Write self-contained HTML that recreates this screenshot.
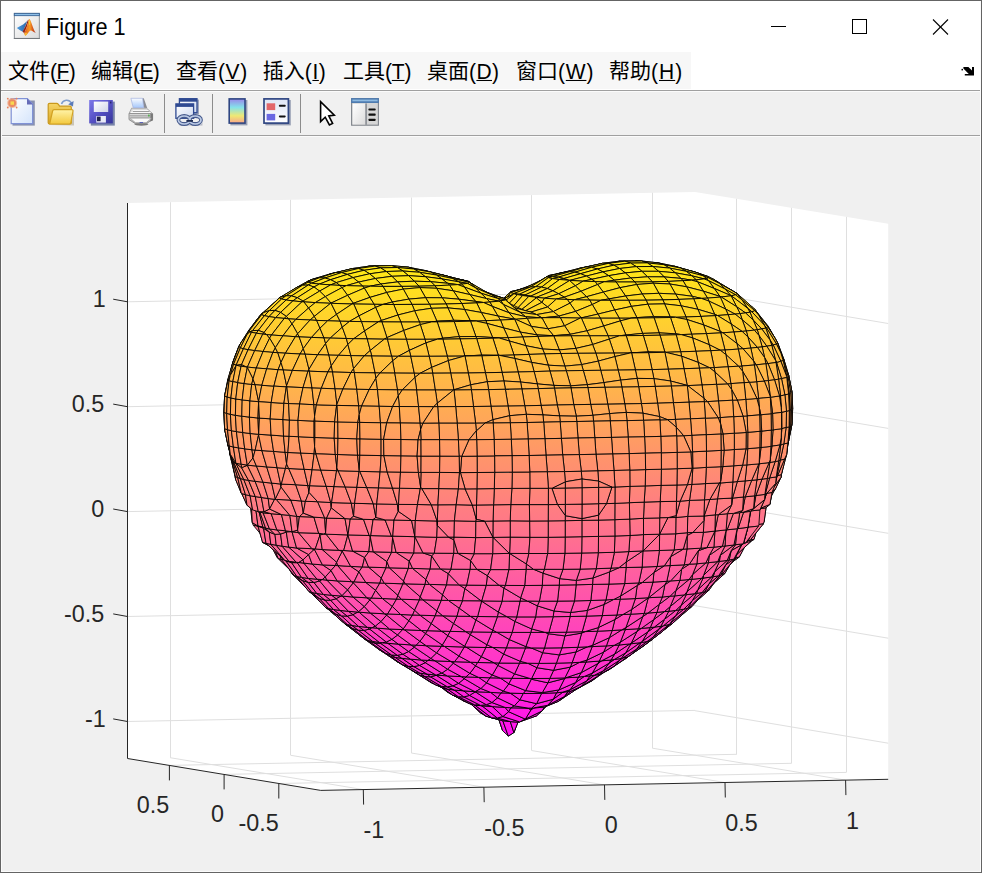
<!DOCTYPE html>
<html lang="zh-CN">
<head>
<meta charset="utf-8">
<title>Figure 1</title>
<style>
html,body{margin:0;padding:0}
body{width:982px;height:873px;overflow:hidden;background:#f0f0f0;position:relative;font-family:"Liberation Sans","Noto Sans CJK SC",sans-serif}
#win{position:absolute;left:0;top:0;width:982px;height:873px;overflow:hidden;background:#f0f0f0}
#titlebar{position:absolute;left:1px;top:1px;width:980px;height:51px;background:#fff}
#title{position:absolute;left:45.1px;top:13.8px;font-size:21.7px;line-height:26px;color:#000;white-space:nowrap;transform:scale(1,1.07);transform-origin:0 21px}
#menubar{position:absolute;left:1px;top:52px;width:980px;height:38px;background:#fff}
#menus{position:absolute;left:0;top:0;width:690px;height:37px;background:#f7f7f7}
#menus span{position:absolute;top:6px;font-size:21px;line-height:26px;color:#000;white-space:nowrap}
#menus i{font-style:normal;display:inline-block;transform:scaleY(1.06);transform-origin:0 20%}#menus u{text-decoration:underline;text-underline-offset:1.4px;text-decoration-thickness:1px}
#mline{position:absolute;left:1px;top:90px;width:979px;height:1px;background:#a0a0a0}
#toolbar{position:absolute;left:1px;top:91px;width:979px;height:44px;background:#f0f0f0}
#tline{position:absolute;left:1px;top:135px;width:979px;height:1px;background:#a0a0a0}
.bd{position:absolute;background:#646464}
.bw{position:absolute;background:#fbfbfb}
.sep{position:absolute;top:5px;width:1px;height:34px;background:#a8a8a8}
</style>
</head>
<body>
<div id="win">
<div id="titlebar">
<svg width="980" height="51" style="position:absolute;left:0;top:0">
<defs>
<linearGradient id="ibg" x1="0" y1="0" x2="1" y2="1"><stop offset="0" stop-color="#fff"/><stop offset="1" stop-color="#dcdcdc"/></linearGradient>
<linearGradient id="mo" x1="0" y1="0" x2="1" y2="0"><stop offset="0" stop-color="#d8481a"/><stop offset="0.3" stop-color="#f0801f"/><stop offset="0.5" stop-color="#f59a28"/><stop offset="0.72" stop-color="#dd5e1c"/><stop offset="1" stop-color="#a82a1c"/></linearGradient>
<linearGradient id="mb" x1="0" y1="0" x2="1" y2="0"><stop offset="0" stop-color="#4a9be0"/><stop offset="1" stop-color="#2c64a4"/></linearGradient>
</defs>
<g transform="translate(-1,-1)">
<rect x="14.35" y="13.4" width="25" height="25" fill="url(#ibg)" stroke="#8e9297" stroke-width="1"/>
<rect x="13.85" y="38" width="26" height="1" fill="#74787c"/>
<rect x="13.85" y="12.9" width="26" height="3.2" fill="#3f6796"/>
<rect x="14.8" y="13.9" width="24.1" height="1.3" fill="#8fc0e8"/>
<path d="M16.8 28.1 L23.5 24.2 L27.2 21 L25.6 25.5 L22.8 31.7 L20 30.2Z" fill="url(#mb)"/>
<path d="M27.6 20.6 C26.6 24.5 24.4 28.4 22.6 31.6 L24.2 33.2 C26.4 29 27.8 24 28.8 19.6 Z" fill="#8e2418"/>
<path d="M29.3 18.9 C28.3 19.3 27.8 26.5 24.1 33 L25.4 35.8 C27.5 34.5 28.8 31 30.5 30.4 C32 30.2 33.5 32 35.7 32.7 C33.2 30 30.9 19.3 29.3 18.9Z" fill="url(#mo)"/>
<ellipse cx="25.7" cy="34" rx="1.2" ry="1.6" fill="#f9c432" opacity=".85" transform="rotate(25 25.7 34)"/>
<ellipse cx="29.6" cy="22.6" rx=".7" ry="2.6" fill="#f8d232" opacity=".85"/>
</g>
<g stroke="#000" stroke-width="1" fill="none" shape-rendering="crispEdges">
<line x1="770" y1="25.5" x2="785" y2="25.5"/>
<rect x="851.5" y="18.5" width="14" height="14"/>
</g>
<g stroke="#000" stroke-width="1.1" fill="none">
<line x1="932" y1="18.5" x2="947" y2="33.5"/><line x1="947" y1="18.5" x2="932" y2="33.5"/>
</g>
</svg>
<div id="title">Figure 1</div>
</div>
<div id="menubar">
<div id="menus">
<span style="left:7px">文件<i style="letter-spacing:-0.5px">(<u>F</u>)</i></span>
<span style="left:90px">编辑<i style="letter-spacing:-0.6px">(<u>E</u>)</i></span>
<span style="left:175px">查看<i style="letter-spacing:0.6px">(<u>V</u>)</i></span>
<span style="left:261.8px">插入<i style="letter-spacing:0.6px">(<u>I</u>)</i></span>
<span style="left:342px">工具<i style="letter-spacing:-0.15px">(<u>T</u>)</i></span>
<span style="left:426px">桌面<i style="letter-spacing:0.4px">(<u>D</u>)</i></span>
<span style="left:515px">窗口<i style="letter-spacing:0.8px">(<u>W</u>)</i></span>
<span style="left:608px">帮助<i style="letter-spacing:1.0px">(<u>H</u>)</i></span>
</div>
<svg width="20" height="16" viewBox="958 62 20 16" style="position:absolute;left:957px;top:10px"><path d="M963.4 66.9 H968.4 L972 70.4 V66.9 H974 V75.6 H964.8 V73.9 H968.8 L963.4 68.6 Z" fill="#000"/><rect x="961.5" y="68.9" width="1.5" height="1.5" fill="#000"/></svg>
</div>
<div id="mline"></div>
<div id="toolbar">
<svg width="979" height="44" viewBox="1 91 979 44" style="position:absolute;left:0;top:0">
<defs>
<linearGradient id="pg" x1="0" y1="0" x2="1" y2="1"><stop offset="0" stop-color="#fff"/><stop offset="1" stop-color="#d4e4fb"/></linearGradient>
<linearGradient id="fo" x1="0" y1="0" x2="0" y2="1"><stop offset="0" stop-color="#fff3a8"/><stop offset="1" stop-color="#f3c93e"/></linearGradient>
<linearGradient id="fb" x1="0" y1="0" x2="0" y2="1"><stop offset="0" stop-color="#f6d567"/><stop offset="1" stop-color="#d9a520"/></linearGradient>
<linearGradient id="sv" x1="0" y1="0" x2="1" y2="1"><stop offset="0" stop-color="#7d78ea"/><stop offset="0.5" stop-color="#5550c4"/><stop offset="1" stop-color="#35359a"/></linearGradient>
<linearGradient id="svl" x1="0" y1="0" x2="1" y2="1"><stop offset="0" stop-color="#fff"/><stop offset="1" stop-color="#d0d4e8"/></linearGradient>
<linearGradient id="pp" x1="0" y1="0" x2="0" y2="1"><stop offset="0" stop-color="#fafcff"/><stop offset="1" stop-color="#a6c8fa"/></linearGradient>
<linearGradient id="pr" x1="0" y1="0" x2="0" y2="1"><stop offset="0" stop-color="#e4e4e4"/><stop offset="1" stop-color="#a8a8a8"/></linearGradient>
<linearGradient id="cb" x1="0" y1="0" x2="0" y2="1"><stop offset="0" stop-color="#9a86ea"/><stop offset="0.35" stop-color="#84e2ea"/><stop offset="0.7" stop-color="#efe973"/><stop offset="1" stop-color="#f9a58a"/></linearGradient>
<linearGradient id="wn" x1="0" y1="0" x2="1" y2="1"><stop offset="0" stop-color="#fff"/><stop offset="1" stop-color="#cfdaf0"/></linearGradient>
<linearGradient id="lg" x1="0" y1="0" x2="0" y2="1"><stop offset="0" stop-color="#dfe6f5"/><stop offset="1" stop-color="#fff"/></linearGradient>
<linearGradient id="pil" x1="0" y1="0" x2="1" y2="1"><stop offset="0" stop-color="#fff"/><stop offset="1" stop-color="#dcdcdc"/></linearGradient>
<linearGradient id="ch" x1="0" y1="0" x2="0" y2="1"><stop offset="0" stop-color="#e4ecfa"/><stop offset="1" stop-color="#8fa6d2"/></linearGradient>
</defs>
<!-- new file -->
<path d="M12.5 100.5 H34.8 V125.6 H12.5Z" fill="#7d86a6" opacity=".9"/>
<path d="M11.2 98.6 H27.3 L32.6 104 V123.6 H11.2Z" fill="url(#pg)" stroke="#8092d6" stroke-width="1.2"/>
<path d="M27 98.4 L33 104.4 H27Z" fill="#666cb8"/>
<circle cx="12.2" cy="103.1" r="5" fill="#f0a888" opacity=".75"/><circle cx="12.2" cy="103.1" r="3.9" fill="#ea8a60"/><rect x="10.5" y="101.4" width="3.5" height="3.4" fill="#f8d850"/>
<g fill="#e7825c"><circle cx="7.8" cy="98.7" r=".9"/><circle cx="16.6" cy="98.7" r=".9"/><circle cx="7.8" cy="107.5" r=".9"/><circle cx="16.6" cy="107.5" r=".9"/></g>
<!-- open -->
<path d="M61.5 104 C63 99.5 69 98.7 71.6 103.2" fill="none" stroke="#7f9ccc" stroke-width="1.5"/>
<path d="M73.6 101 L73 106.6 L68.2 104.2Z" fill="#5a7ab8"/>
<path d="M49.5 125 L74 125.6 L74 111 L71 123.5Z" fill="#b0a890" opacity=".6"/>
<path d="M48.2 104.6 Q48.2 103.3 49.6 103.3 H56.6 Q57.6 103.3 58.2 104.2 L59.6 106.2 H70 Q71.3 106.2 71.3 107.5 V122.8 Q71.3 124 70 124 H49.6 Q48.2 124 48.2 122.8Z" fill="url(#fb)" stroke="#c9981c" stroke-width="1.2"/>
<path d="M52.6 111 Q52.9 109.7 54.2 109.7 H71.8 Q73.3 109.7 73 111.2 L70.9 122.6 Q70.6 124 69.2 124 H49.6 Z" fill="url(#fo)" stroke="#d2a223" stroke-width="1.2"/>
<!-- save -->
<rect x="90.8" y="101.6" width="24" height="24" fill="#6a78a0" opacity=".9"/>
<rect x="89.2" y="100" width="23.6" height="23.4" fill="url(#sv)"/>
<rect x="93.8" y="101.6" width="14.4" height="10.4" fill="url(#svl)"/>
<rect x="96.3" y="116" width="9.6" height="6.6" fill="#e8eaf6"/><rect x="97" y="116.6" width="3.6" height="4.6" fill="#20204a"/>
<rect x="110" y="101.6" width="1.4" height="1.8" fill="#28286e"/>
<!-- print -->
<ellipse cx="141.4" cy="124.3" rx="7" ry="1.5" fill="#5c5c5c" opacity=".8"/>
<path d="M131.6 108.2 H146.6 L152.6 113.6 H129Z" fill="#dadada" stroke="#9a9a9a" stroke-width=".8"/>
<path d="M129 113.6 H152.6 V119.6 L146.4 123.6 H135.2 L129 119.6Z" fill="url(#pr)" stroke="#8a8a8a" stroke-width=".9"/>
<path d="M150.3 113.8 L152.9 114 V120.6 L150.3 121.6Z" fill="#787878"/>
<path d="M130.2 118.2 H151.4 L146.2 122.6 H135.4Z" fill="#fafafa" stroke="#9c9c9c" stroke-width=".6"/>
<path d="M132.6 110.6 H148.4 M131 112.4 H150.6" stroke="#fff" stroke-width=".9"/>
<path d="M133 111.5 H149.4" stroke="#8c8c8c" stroke-width=".8"/>
<path d="M129.6 115.6 H150 M130.4 117.2 H150" stroke="#9a9a9a" stroke-width=".7"/>
<path d="M142 98.2 H143.8 L147.2 107.9 L143.8 107.7Z" fill="#8a8c94"/>
<path d="M130.9 98.3 H142.6 L143.7 107.7 H133.2Z" fill="url(#pp)" stroke="#a4b2e0" stroke-width=".7"/>
<rect x="148" y="114.6" width="1.7" height="1.9" fill="#58b050"/>
<rect x="139.6" y="122" width="3.4" height="1" fill="#5a62b8"/>
<!-- separators -->
<rect x="164" y="94" width="1" height="39" fill="#8c8c8c"/>
<rect x="212" y="94" width="1" height="39" fill="#8c8c8c"/>
<rect x="300" y="94" width="1" height="39" fill="#8c8c8c"/>
<!-- link -->
<rect x="180.4" y="99.6" width="18.6" height="14.6" fill="#7a86a4" opacity=".7"/>
<rect x="179.4" y="98.7" width="17.6" height="14" fill="url(#wn)" stroke="#2f4a92" stroke-width="1.3"/>
<rect x="179.4" y="98.7" width="17.6" height="3" fill="#2f4a92"/>
<rect x="175.9" y="103.9" width="17.7" height="14.4" fill="url(#wn)" stroke="#2f4a92" stroke-width="1.3"/>
<rect x="175.9" y="103.9" width="17.7" height="3" fill="#2f4a92"/>
<path d="M178.4 124.8 H201 L202.4 122 V125.6 H180Z" fill="#8890a4" opacity=".6"/>
<ellipse cx="184.2" cy="120" rx="5.8" ry="4" fill="none" stroke="#465a8c" stroke-width="3.8"/>
<ellipse cx="195.2" cy="120" rx="5.8" ry="4" fill="none" stroke="#465a8c" stroke-width="3.8"/>
<ellipse cx="184.2" cy="120" rx="5.8" ry="4" fill="none" stroke="#bccbe6" stroke-width="1.7"/>
<ellipse cx="195.2" cy="120" rx="5.8" ry="4" fill="none" stroke="#bccbe6" stroke-width="1.7"/>
<path d="M186.4 120.9 H193" stroke="#1d2b52" stroke-width="1.8"/>
<!-- colorbar -->
<rect x="230.4" y="100" width="17" height="25.4" fill="#7c86a0" opacity=".75"/>
<rect x="229.2" y="98.9" width="15.8" height="24.2" fill="url(#cb)" stroke="#2f4682" stroke-width="1.6"/>
<!-- legend -->
<rect x="265.4" y="100" width="25.4" height="25.4" fill="#7c86a0" opacity=".75"/>
<rect x="264" y="98.9" width="24.4" height="24.2" fill="url(#lg)" stroke="#2f4682" stroke-width="1.7"/>
<rect x="266.6" y="103.3" width="8.6" height="6.8" fill="#e2666a"/>
<rect x="266.6" y="113.9" width="8.6" height="6.5" fill="#6a68e2"/>
<rect x="278.9" y="104.7" width="6.8" height="2" rx=".8" fill="#111"/>
<rect x="278.9" y="115.4" width="6.8" height="2" rx=".8" fill="#111"/>
<!-- pointer -->
<path d="M320.6 101.6 V121.6 L325.2 117.2 L329.4 124.9 L332.6 123.4 L328.8 115.9 L334.3 115.1Z" fill="#fff" stroke="#000" stroke-width="1.6" stroke-linejoin="miter"/>
<!-- property inspector -->
<rect x="351.6" y="98.6" width="26.8" height="26.6" fill="#d6d6d6" stroke="#80858c" stroke-width="1.1"/>
<rect x="351.1" y="98.1" width="27.8" height="4.9" fill="#4f7cb0"/>
<rect x="352.4" y="99.6" width="25.2" height="1.7" fill="#8fbbe2"/>
<rect x="352.7" y="103.8" width="12.6" height="20.6" fill="url(#pil)"/>
<rect x="365.3" y="103.4" width="1.6" height="21.4" fill="#8a8e94"/>
<rect x="368.4" y="108.4" width="7.3" height="2.1" rx=".8" fill="#111"/>
<rect x="368.4" y="113.6" width="7.3" height="2.1" rx=".8" fill="#111"/>
<rect x="368.4" y="118.8" width="7.3" height="2.1" rx=".8" fill="#111"/>
</svg>
</div>
<div id="tline"></div>
<svg id="plot" width="982" height="737" viewBox="0 136 982 737" style="position:absolute;left:0;top:136px">
<defs><linearGradient id="g15" gradientUnits="userSpaceOnUse" x1="0" y1="760.4" x2="0" y2="204.9"><stop offset="0" stop-color="#f0f"/><stop offset="1" stop-color="#ff0"/></linearGradient><linearGradient id="g14" gradientUnits="userSpaceOnUse" x1="0" y1="762.4" x2="0" y2="206.9"><stop offset="0" stop-color="#f0f"/><stop offset="1" stop-color="#ff0"/></linearGradient><linearGradient id="g13" gradientUnits="userSpaceOnUse" x1="0" y1="764.4" x2="0" y2="208.9"><stop offset="0" stop-color="#f0f"/><stop offset="1" stop-color="#ff0"/></linearGradient><linearGradient id="g12" gradientUnits="userSpaceOnUse" x1="0" y1="766.4" x2="0" y2="210.9"><stop offset="0" stop-color="#f0f"/><stop offset="1" stop-color="#ff0"/></linearGradient><linearGradient id="g11" gradientUnits="userSpaceOnUse" x1="0" y1="768.4" x2="0" y2="212.9"><stop offset="0" stop-color="#f0f"/><stop offset="1" stop-color="#ff0"/></linearGradient><linearGradient id="g10" gradientUnits="userSpaceOnUse" x1="0" y1="770.4" x2="0" y2="214.9"><stop offset="0" stop-color="#f0f"/><stop offset="1" stop-color="#ff0"/></linearGradient><linearGradient id="g9" gradientUnits="userSpaceOnUse" x1="0" y1="772.4" x2="0" y2="216.9"><stop offset="0" stop-color="#f0f"/><stop offset="1" stop-color="#ff0"/></linearGradient><linearGradient id="g8" gradientUnits="userSpaceOnUse" x1="0" y1="774.4" x2="0" y2="218.9"><stop offset="0" stop-color="#f0f"/><stop offset="1" stop-color="#ff0"/></linearGradient><linearGradient id="g7" gradientUnits="userSpaceOnUse" x1="0" y1="776.4" x2="0" y2="220.9"><stop offset="0" stop-color="#f0f"/><stop offset="1" stop-color="#ff0"/></linearGradient><linearGradient id="g6" gradientUnits="userSpaceOnUse" x1="0" y1="778.4" x2="0" y2="222.9"><stop offset="0" stop-color="#f0f"/><stop offset="1" stop-color="#ff0"/></linearGradient><linearGradient id="g5" gradientUnits="userSpaceOnUse" x1="0" y1="780.4" x2="0" y2="224.9"><stop offset="0" stop-color="#f0f"/><stop offset="1" stop-color="#ff0"/></linearGradient><linearGradient id="g4" gradientUnits="userSpaceOnUse" x1="0" y1="782.4" x2="0" y2="226.9"><stop offset="0" stop-color="#f0f"/><stop offset="1" stop-color="#ff0"/></linearGradient></defs>
<style>.b15{fill:url(#g15)}.b14{fill:url(#g14)}.b13{fill:url(#g13)}.b12{fill:url(#g12)}.b11{fill:url(#g11)}.b10{fill:url(#g10)}.b9{fill:url(#g9)}.b8{fill:url(#g8)}.b7{fill:url(#g7)}.b6{fill:url(#g6)}.b5{fill:url(#g5)}.b4{fill:url(#g4)}#surf path{stroke:#000;stroke-width:0.88;stroke-linejoin:round}#lbl text{font:23.33px "Liberation Sans",sans-serif;fill:#262626}</style>
<g id="back" shape-rendering="auto"><polygon points="127.5,203 695,191.9 888.2,223.8 888.2,779.3 320.7,790.4 127.5,758.5" fill="#fff"/><g><line x1="170.5" y1="757.7" x2="170.5" y2="202.2" stroke="#dfdfdf" stroke-width="1"/><line x1="363.3" y1="789.6" x2="170.1" y2="757.7" stroke="#dfdfdf" stroke-width="1"/><line x1="290.5" y1="755.3" x2="290.5" y2="199.8" stroke="#dfdfdf" stroke-width="1"/><line x1="483.9" y1="787.2" x2="290.7" y2="755.3" stroke="#dfdfdf" stroke-width="1"/><line x1="411.5" y1="753" x2="411.5" y2="197.5" stroke="#dfdfdf" stroke-width="1"/><line x1="604.5" y1="784.9" x2="411.3" y2="753" stroke="#dfdfdf" stroke-width="1"/><line x1="531.5" y1="750.6" x2="531.5" y2="195.1" stroke="#dfdfdf" stroke-width="1"/><line x1="725" y1="782.5" x2="531.8" y2="750.6" stroke="#dfdfdf" stroke-width="1"/><line x1="652.5" y1="748.2" x2="652.5" y2="192.7" stroke="#dfdfdf" stroke-width="1"/><line x1="845.6" y1="780.1" x2="652.4" y2="748.2" stroke="#dfdfdf" stroke-width="1"/><line x1="846.5" y1="772.4" x2="846.5" y2="216.9" stroke="#dfdfdf" stroke-width="1"/><line x1="278.8" y1="783.5" x2="846.3" y2="772.4" stroke="#dfdfdf" stroke-width="1"/><line x1="791.5" y1="763.3" x2="791.5" y2="207.8" stroke="#dfdfdf" stroke-width="1"/><line x1="224.1" y1="774.4" x2="791.6" y2="763.3" stroke="#dfdfdf" stroke-width="1"/><line x1="736.5" y1="754.3" x2="736.5" y2="198.8" stroke="#dfdfdf" stroke-width="1"/><line x1="169.4" y1="765.4" x2="736.9" y2="754.3" stroke="#dfdfdf" stroke-width="1"/><line x1="127.5" y1="721.5" x2="695" y2="710.4" stroke="#dfdfdf" stroke-width="1"/><line x1="888.2" y1="743.2" x2="695" y2="710.7" stroke="#dfdfdf" stroke-width="1"/><line x1="127.5" y1="616.5" x2="695" y2="605.4" stroke="#dfdfdf" stroke-width="1"/><line x1="888.2" y1="638.2" x2="695" y2="605.7" stroke="#dfdfdf" stroke-width="1"/><line x1="127.5" y1="511.6" x2="695" y2="500.5" stroke="#dfdfdf" stroke-width="1"/><line x1="888.2" y1="533.3" x2="695" y2="500.8" stroke="#dfdfdf" stroke-width="1"/><line x1="127.5" y1="406.7" x2="695" y2="395.6" stroke="#dfdfdf" stroke-width="1"/><line x1="888.2" y1="428.4" x2="695" y2="395.9" stroke="#dfdfdf" stroke-width="1"/><line x1="127.5" y1="301.8" x2="695" y2="290.7" stroke="#dfdfdf" stroke-width="1"/><line x1="888.2" y1="323.5" x2="695" y2="291" stroke="#dfdfdf" stroke-width="1"/></g></g>
<g id="surf">
<path class="b15" d="M702.3 533.6L701.2 532.9L704.6 533Z"/>
<path class="b14" d="M309.7 534.2L315.6 533.6L318.3 537Z"/>
<path class="b14" d="M516.1 304.2L501.8 304.9L501.9 304.8L518.6 301Z"/>
<path class="b14" d="M479.6 319.3L462.9 320.7L468.6 315.6L485.3 312.6Z"/>
<path class="b14" d="M501.9 304.8L501.8 304.9L500.9 305Z"/>
<path class="b14" d="M554.6 288.1L539.8 288.7L540.9 287.6L557.6 284.8Z"/>
<path class="b14" d="M518.6 301L501.9 304.8L507.6 300.1L524.3 293.2Z"/>
<path class="b14" d="M540.9 287.6L539.8 288.7L532.9 289.1Z"/>
<path class="b14" d="M485.3 312.6L489.4 305.9L500.9 305Z"/>
<path class="b14" d="M646.3 272.7L633.5 272.5L635.6 270.8Z"/>
<path class="b14" d="M633.5 272.5L614.8 272.5L618.9 269.4L635.6 270.8Z"/>
<path class="b14" d="M500.9 305L489.4 305.9L490.9 304.8L507.6 300.1L501.9 304.8Z"/>
<path class="b14" d="M557.6 284.8L540.9 287.6L546.6 282.7L563.3 278.3Z"/>
<path class="b14" d="M524.3 293.2L526.7 289.6L532.9 289.1Z"/>
<path class="b14" d="M614.8 272.5L597.4 272.7L602.3 269.3L618.9 269.4Z"/>
<path class="b14" d="M653.6 272.8L646.3 272.7L635.6 270.8L641.3 267.2L657.9 270.1Z"/>
<path class="b14" d="M532.9 289.1L526.7 289.6L529.9 287.4L546.6 282.7L540.9 287.6Z"/>
<path class="b14" d="M670.1 273.3L653.6 272.8L657.9 270.1Z"/>
<path class="b14" d="M579.9 275.1L563.3 278.3L567 273.8L581.5 273.1Z"/>
<path class="b13" d="M719.2 552.7L717.8 551.9L720.4 552.2Z"/>
<path class="b14" d="M597.4 272.7L581.5 273.1L585.6 270.4L602.3 269.3Z"/>
<path class="b14" d="M490.9 304.8L489.4 305.9L475.9 306.5Z"/>
<path class="b13" d="M753.4 503.6L745.4 502.7L752.6 500.4L758.2 502.2Z"/>
<path class="b14" d="M517.5 290.4L526.7 289.6L524.3 293.2L507.6 300.1L513.3 293.8Z"/>
<path class="b14" d="M635.6 270.8L618.9 269.4L624.6 265.7L641.3 267.2Z"/>
<path class="b13" d="M402.4 651L405.5 650.5L407.6 654.6Z"/>
<path class="b14" d="M735.9 301.8L730.2 303.8L714.6 289.8L723.6 290.7Z"/>
<path class="b14" d="M529.9 287.4L526.7 289.6L517.5 290.4Z"/>
<path class="b14" d="M581.5 273.1L567 273.8L568.9 272.6L585.6 270.4Z"/>
<path class="b14" d="M507.6 300.1L490.9 304.8L496.6 302.2L513.3 293.8Z"/>
<path class="b14" d="M676.5 273.5L670.1 273.3L657.9 270.1L663.6 267.6L680.3 272Z"/>
<path class="b14" d="M474.3 307.2L474.8 306.6L475.9 306.5Z"/>
<path class="b13" d="M283.2 503L276.8 503.7L274 500.5Z"/>
<path class="b13" d="M724.9 554.4L719.2 552.7L720.4 552.2L727.6 553.1Z"/>
<path class="b14" d="M456 306.6L436.3 306.2L435.3 306L440.9 301.4L457.6 305.4Z"/>
<path class="b14" d="M618.9 269.4L602.3 269.3L607.9 265.7L624.6 265.7Z"/>
<path class="b14" d="M723.6 290.7L714.6 289.8L713.6 289.1L719.2 287.7Z"/>
<path class="b14" d="M558.8 274.3L567 273.8L563.3 278.3L546.6 282.7L552.3 277Z"/>
<path class="b14" d="M685.9 274L676.5 273.5L680.3 272Z"/>
<path class="b13" d="M472.7 306.5L456 306.6L457.6 305.4Z"/>
<path class="b13" d="M413.3 663.9L407.6 654.6L424.3 663.7L426.5 667.3L422.1 668Z"/>
<path class="b13" d="M453.7 683.7L448.7 684.2L446.6 681.7Z"/>
<path class="b13" d="M475.9 306.5L474.8 306.6L479.9 305.2L496.6 302.2L490.9 304.8Z"/>
<path class="b13" d="M708.2 574.9L702.6 573.1L708.3 568.7L714.9 569.6Z"/>
<path class="b13" d="M760.2 323.7L753.7 322.8L752.6 321.2L758.2 320.9Z"/>
<path class="b13" d="M713.6 289.1L696.9 279.8L702.6 277.6L719.2 287.7Z"/>
<path class="b13" d="M568.9 272.6L567 273.8L558.8 274.3Z"/>
<path class="b13" d="M546.6 282.7L529.9 287.4L535.6 283.8L552.3 277Z"/>
<path class="b13" d="M657.9 270.1L641.3 267.2L646.9 264.4L663.6 267.6Z"/>
<path class="b13" d="M602.3 269.3L585.6 270.4L591.3 267.3L607.9 265.7Z"/>
<path class="b13" d="M422.1 668L426.5 667.3L429.9 673.4Z"/>
<path class="b13" d="M758.2 320.9L752.6 321.2L740.8 306.7L747.5 307.6Z"/>
<path class="b13" d="M463.3 690.4L468.9 698.4L452.3 690.3L448.7 684.2L453.7 683.7Z"/>
<path class="b13" d="M513.3 293.8L515.7 290.9L517.5 290.4Z"/>
<path class="b13" d="M772.8 471.6L768 470.6L774.9 457.6L780.6 455.3Z"/>
<path class="b13" d="M785.2 422.3L780.2 421.4L781.1 405L786.1 406Z"/>
<path class="b13" d="M402.4 651L395.4 651.9L391 644.8Z"/>
<path class="b13" d="M691.6 593.2L685.9 591.5L693.3 585.3L699.8 586.3Z"/>
<path class="b13" d="M474.8 306.6L472.7 306.5L457.6 305.4L463.3 302.8L479.9 305.2Z"/>
<path class="b13" d="M786.1 406L781.1 405L780.7 388.7L785.7 389.6Z"/>
<path class="b13" d="M766.5 488L761.2 487.1L768 470.6L772.8 471.6Z"/>
<path class="b13" d="M702.6 277.6L696.9 279.8L685.9 274L697.2 274.8Z"/>
<path class="b13" d="M774.9 354.5L779.8 356.9L775.5 356.1Z"/>
<path class="b13" d="M785.7 389.6L780.7 388.7L778.8 372.4L783.8 373.3Z"/>
<path class="b13" d="M756.7 504.6L753.4 503.6L758.2 502.2L763.9 502.3Z"/>
<path class="b13" d="M747.5 307.6L740.8 306.7L735.9 301.8L741.6 301.6Z"/>
<path class="b13" d="M407.6 654.6L413.3 663.9L396.6 653.8L395.4 651.9L402.4 651Z"/>
<path class="b13" d="M517.5 290.4L515.7 290.9L518.9 289.7L535.6 283.8L529.9 287.4Z"/>
<path class="b13" d="M750.9 521L747 520L753.4 503.6L756.7 504.6Z"/>
<path class="b13" d="M641.3 267.2L624.6 265.7L630.3 262.7L646.9 264.4Z"/>
<path class="b13" d="M585.6 270.4L568.9 272.6L574.6 270.1L591.3 267.3Z"/>
<path class="b13" d="M376.4 635.1L375.1 635.3L374.3 633.8Z"/>
<path class="b13" d="M697.2 274.8L685.9 274L680.3 272L685.9 270.9Z"/>
<path class="b13" d="M747.2 525.2L741.6 525.6L747 520L750.9 521Z"/>
<path class="b13" d="M674.9 609.7L669.3 607.9L676.5 602L683 602.9Z"/>
<path class="b12" d="M435.6 681L429.9 673.4L446.6 681.7L448.7 684.2L445.4 684.9Z"/>
<path class="b13" d="M552.3 277L554.6 274.8L558.8 274.3Z"/>
<path class="b13" d="M341 609.4L337.4 602.5L340.7 602.1L352 610.4L355.7 618.8L353.3 619.2Z"/>
<path class="b13" d="M783.8 373.3L778.8 372.4L775.5 356.1L779.8 356.9L780.6 357.6Z"/>
<path class="b12" d="M482.9 700.5L472.1 701.3L468.9 698.4Z"/>
<path class="b13" d="M741.6 301.6L735.9 301.8L723.6 290.7L730.4 291.6Z"/>
<path class="b13" d="M731.8 554L727.6 553.1L740.3 536.5L745.7 537.4Z"/>
<path class="b13" d="M780.6 455.1L780.7 455.1L780.6 455.3Z"/>
<path class="b13" d="M664.5 619.6L657.9 618.7L669.3 607.9L674.9 609.7Z"/>
<path class="b13" d="M780.4 357.1L779.8 356.9L774.9 354.5L768.4 339.9L773.2 340.9Z"/>
<path class="b13" d="M510.9 291.6L515.7 290.9L513.3 293.8L496.6 302.2L502.3 299.5Z"/>
<path class="b12" d="M445.4 684.9L448.7 684.2L452.3 690.3Z"/>
<path class="b12" d="M380 643.5L375.1 635.3L376.4 635.1L391 644.8L395.4 651.9L394.3 652.2Z"/>
<path class="b12" d="M353.3 619.2L355.7 618.8L357.6 622.2Z"/>
<path class="b13" d="M680.3 272L663.6 267.6L669.3 266.2L685.9 270.9Z"/>
<path class="b13" d="M730.6 554.6L724.9 554.4L727.6 553.1L731.8 554Z"/>
<path class="b13" d="M558.8 274.3L554.6 274.8L557.9 273.6L574.6 270.1L568.9 272.6Z"/>
<path class="b13" d="M730.4 291.6L723.6 290.7L719.2 287.7L724.9 287.8Z"/>
<path class="b12" d="M422.1 668L417.2 668.8L413.3 663.9Z"/>
<path class="b13" d="M624.6 265.7L607.9 265.7L613.6 262.8L630.3 262.7Z"/>
<path class="b12" d="M658.3 624.5L652.6 622.9L657.9 618.7L664.5 619.6Z"/>
<path class="b13" d="M719.7 570.6L714.9 569.6L724.9 554.4L730.6 554.6Z"/>
<path class="b13" d="M773.2 340.9L768.4 339.9L760.2 323.7L765 324.7Z"/>
<path class="b12" d="M324.3 595.1L320 586.4L321.9 586.1L335.3 597.1L337.4 602.5L332.7 603.3Z"/>
<path class="b13" d="M518.9 289.7L515.7 290.9L510.9 291.6Z"/>
<path class="b12" d="M394.3 652.2L395.4 651.9L396.6 653.8Z"/>
<path class="b12" d="M429.9 673.4L435.6 681L418.9 671.2L417.2 668.8L422.1 668Z"/>
<path class="b13" d="M713.9 574.9L708.2 574.9L714.9 569.6L719.7 570.6Z"/>
<path class="b13" d="M780.6 357.6L779.8 356.9L780.4 357.1Z"/>
<path class="b13" d="M765 324.7L760.2 323.7L758.2 320.9L763.9 323.1Z"/>
<path class="b12" d="M643.9 636.3L637.2 635.4L652.6 622.9L658.3 624.5Z"/>
<path class="b13" d="M719.2 287.7L702.6 277.6L708.2 277.5L724.9 287.8Z"/>
<path class="b13" d="M496.6 302.2L479.9 305.2L485.6 304.6L502.3 299.5Z"/>
<path class="b12" d="M363.3 631.9L357.6 622.2L374.3 633.8L375.1 635.3L369.6 636.3Z"/>
<path class="b13" d="M783.2 438.7L787.2 439.7L786.2 447.9L780.7 455.1L780.6 455.1Z"/>
<path class="b12" d="M332.7 603.3L337.4 602.5L341 609.4Z"/>
<path class="b13" d="M549.1 275.5L554.6 274.8L552.3 277L535.6 283.8L541.3 280.1Z"/>
<path class="b12" d="M704.6 587.2L699.8 586.3L708.2 574.9L713.9 574.9Z"/>
<path class="b13" d="M663.6 267.6L646.9 264.4L652.6 262.8L669.3 266.2Z"/>
<path class="b13" d="M776.2 472.6L772.8 471.6L780.6 455.3L780.7 455.1L782.8 456.1Z"/>
<path class="b12" d="M272.9 504.3L266.3 505L263 501.2Z"/>
<path class="b13" d="M607.9 265.7L591.3 267.3L596.9 264.7L613.6 262.8Z"/>
<path class="b12" d="M641.6 638.1L635.9 636.4L637.2 635.4L643.9 636.3Z"/>
<path class="b12" d="M457.9 696.8L452.3 690.3L468.9 698.4L472.1 701.3L471.1 701.8Z"/>
<path class="b13" d="M763.9 323.1L758.2 320.9L747.5 307.6L752.2 308.6Z"/>
<path class="b13" d="M787.2 439.7L783.2 438.7L785.2 422.3L789 423.3Z"/>
<path class="b12" d="M369.6 636.3L375.1 635.3L380 643.5Z"/>
<path class="b13" d="M789 423.3L785.2 422.3L786.1 406L789.8 406.9Z"/>
<path class="b12" d="M697.2 593.3L691.6 593.2L699.8 586.3L704.6 587.2Z"/>
<path class="b13" d="M708.2 277.5L702.6 277.6L697.2 274.8L704.9 275.7Z"/>
<path class="b12" d="M307.6 579L303.4 570.3L305 570.1L318.6 582.2L320 586.4L314.4 587.3Z"/>
<path class="b13" d="M789.8 406.9L786.1 406L785.7 389.6L789.3 390.6Z"/>
<path class="b13" d="M771 489L766.5 488L772.8 471.6L776.2 472.6Z"/>
<path class="b12" d="M641.6 638.1L624.9 650.6L619.3 649L635.9 636.4Z"/>
<path class="b13" d="M557.9 273.6L554.6 274.8L549.1 275.5Z"/>
<path class="b13" d="M769.6 499.5L763.9 502.3L766.5 488L771 489Z"/>
<path class="b12" d="M402.3 661.7L396.6 653.8L413.3 663.9L417.2 668.8L416.1 669.1Z"/>
<path class="b12" d="M273.3 538L281 537L285.3 544.3Z"/>
<path class="b12" d="M471.1 701.8L472.1 701.3L474.6 706.1Z"/>
<path class="b13" d="M782.8 456.1L780.7 455.1L786.2 447.9Z"/>
<path class="b12" d="M731.8 554L732.1 554.3L730.6 554.6Z"/>
<path class="b13" d="M479.9 305.2L463.3 302.8L468.9 300.2L485.6 304.6Z"/>
<path class="b13" d="M752.2 308.6L747.5 307.6L741.6 301.6L747.2 303.6Z"/>
<path class="b13" d="M789.3 390.6L785.7 389.6L783.8 373.3L787.5 374.3Z"/>
<path class="b12" d="M687.8 603.9L683 602.9L691.6 593.2L697.2 593.3Z"/>
<path class="b12" d="M757.7 505.6L756.7 504.6L763.9 502.3L769.6 499.5Z"/>
<path class="b13" d="M535.6 283.8L518.9 289.7L524.6 288.2L541.3 280.1Z"/>
<path class="b12" d="M347.8 620.4L353.3 619.2L357.6 622.2L363.3 631.9Z"/>
<path class="b13" d="M426.7 291.5L415.7 291.3L407.6 290.1L413.3 285.2L429.9 289.2Z"/>
<path class="b12" d="M562.2 685.8L552.9 685L563.6 679.5L569.3 682.4Z"/>
<path class="b12" d="M314.4 587.3L320 586.4L324.3 595.1Z"/>
<path class="b13" d="M704.9 275.7L697.2 274.8L685.9 270.9L691.6 271.1Z"/>
<path class="b13" d="M646.9 264.4L630.3 262.7L635.9 261L652.6 262.8Z"/>
<path class="b13" d="M591.3 267.3L574.6 270.1L580.3 268.1L596.9 264.7Z"/>
<path class="b13" d="M787.5 374.3L783.8 373.3L780.6 357.6L786.2 369Z"/>
<path class="b12" d="M445.4 684.9L441.1 686L435.6 681Z"/>
<path class="b12" d="M621.3 653.1L614.6 652.2L619.3 649L624.9 650.6Z"/>
<path class="b13" d="M442.3 291.8L426.7 291.5L429.9 289.2Z"/>
<path class="b12" d="M753.7 522L750.9 521L756.7 504.6L757.7 505.6Z"/>
<path class="b12" d="M680.6 609.8L674.9 609.7L683 602.9L687.8 603.9Z"/>
<path class="b12" d="M416.1 669.1L417.2 668.8L418.9 671.2Z"/>
<path class="b13" d="M786.2 369L780.6 357.6L780.4 357.1L782.9 358.1Z"/>
<path class="b12" d="M752.9 523.3L747.2 525.2L750.9 521L753.7 522Z"/>
<path class="b12" d="M750.5 538.4L745.7 537.4L747.2 525.2L752.9 523.3Z"/>
<path class="b12" d="M289.3 554L287.5 554.5L285.3 544.3Z"/>
<path class="b13" d="M747.2 303.6L741.6 301.6L730.4 291.6L734.9 292.6Z"/>
<path class="b12" d="M389.6 653.3L394.3 652.2L396.6 653.8L402.3 661.7Z"/>
<path class="b12" d="M346.6 619.4L341 609.4L353.3 619.2L347.8 620.4Z"/>
<path class="b12" d="M452.3 690.3L457.9 696.8L441.3 686.2L441.1 686L445.4 684.9Z"/>
<path class="b12" d="M608.3 662.6L602.6 660.9L614.6 652.2L621.3 653.1Z"/>
<path class="b12" d="M745.7 537.4L750.5 538.4L736.2 551.7L732.1 554.3L731.8 554Z"/>
<path class="b13" d="M763.9 323.1L766.6 325.1L765 324.7Z"/>
<path class="b13" d="M782.9 358.1L780.4 357.1L773.2 340.9L776.1 341.8Z"/>
<path class="b12" d="M669.2 620.6L664.5 619.6L674.9 609.7L680.6 609.8Z"/>
<path class="b12" d="M291 560.5L287.5 554.5L289.3 554L302 565L303.4 570.3L297.9 571.2Z"/>
<path class="b12" d="M252 494.6L251.6 489.3L260.6 488.2L263 501.2L266.3 505L265.7 505.4Z"/>
<path class="b12" d="M496.9 718.2L480.3 712.7L474.6 706.1L491.3 713.5Z"/>
<path class="b13" d="M685.9 270.9L669.3 266.2L674.9 266.3L691.6 271.1Z"/>
<path class="b13" d="M734.9 292.6L730.4 291.6L724.9 287.8L730.6 289.6Z"/>
<path class="b12" d="M385.6 650.9L380 643.5L394.3 652.2L389.6 653.3Z"/>
<path class="b13" d="M574.6 270.1L557.9 273.6L563.6 272.4L580.3 268.1Z"/>
<path class="b12" d="M332.7 603.3L328.9 604.2L324.3 595.1Z"/>
<path class="b13" d="M630.3 262.7L613.6 262.8L619.3 261.2L635.9 261Z"/>
<path class="b12" d="M722.2 571.6L719.7 570.6L730.6 554.6L732.1 554.3L735.3 555Z"/>
<path class="b12" d="M663.9 624.7L658.3 624.5L664.5 619.6L669.2 620.6Z"/>
<path class="b12" d="M787.2 439.7L788.5 440.1L786.2 447.9Z"/>
<path class="b12" d="M297.9 571.2L303.4 570.3L307.6 579Z"/>
<path class="b12" d="M596.3 669.9L589.6 669L602.6 660.9L608.3 662.6Z"/>
<path class="b12" d="M265.7 505.4L266.3 505L268.6 521.7L268.6 521.7Z"/>
<path class="b13" d="M776.1 341.8L773.2 340.9L765 324.7L766.6 325.1L769.6 328.8Z"/>
<path class="b12" d="M268.6 521.7L268.6 521.7L268.6 521.8Z"/>
<path class="b12" d="M369.6 636.3L366.9 637L363.3 631.9Z"/>
<path class="b12" d="M341 609.4L346.6 619.4L330 605.7L328.9 604.2L332.7 603.3Z"/>
<path class="b12" d="M424.6 677.7L418.9 671.2L435.6 681L441.1 686L441.1 686Z"/>
<path class="b12" d="M534.5 702.7L524.2 701.9L530.3 699.7L535.9 702.2Z"/>
<path class="b12" d="M648.5 637.3L643.9 636.3L658.3 624.5L663.9 624.7Z"/>
<path class="b12" d="M591.6 673.4L585.9 671.7L589.6 669L596.3 669.9Z"/>
<path class="b12" d="M719.6 573.4L713.9 574.9L719.7 570.6L722.2 571.6Z"/>
<path class="b13" d="M724.9 287.8L708.2 277.5L713.9 279.5L730.6 289.6Z"/>
<path class="b12" d="M469.7 702.9L471.1 701.8L474.6 706.1L480.3 712.7Z"/>
<path class="b12" d="M735.3 555L732.1 554.3L736.2 551.7Z"/>
<path class="b12" d="M449.1 292.1L442.3 291.8L429.9 289.2L435.6 285.7L452.3 290.9Z"/>
<path class="b12" d="M273.3 538L272.9 538.8L268.6 521.8Z"/>
<path class="b12" d="M786.2 369L788.4 374.7L787.5 374.3Z"/>
<path class="b12" d="M380 643.5L385.6 650.9L369 639.7L366.9 637L369.6 636.3Z"/>
<path class="b13" d="M669.3 266.2L652.6 262.8L658.3 262.9L674.9 266.3Z"/>
<path class="b12" d="M707.5 588.2L704.6 587.2L713.9 574.9L719.6 573.4Z"/>
<path class="b12" d="M771 489L774.6 489.8L769.6 499.5Z"/>
<path class="b12" d="M647.3 638.2L641.6 638.1L643.9 636.3L648.5 637.3Z"/>
<path class="b12" d="M767.7 325.7L766.6 325.1L763.9 323.1L752.2 308.6L754.9 309.6Z"/>
<path class="b13" d="M613.6 262.8L596.9 264.7L602.6 263.3L619.3 261.2Z"/>
<path class="b12" d="M413.5 670.2L416.1 669.1L418.9 671.2L424.6 677.7Z"/>
<path class="b12" d="M460.3 292.5L449.1 292.1L452.3 290.9Z"/>
<path class="b12" d="M314.4 587.3L311.7 588.1L307.6 579Z"/>
<path class="b12" d="M591.6 673.4L574.9 683.9L569.3 682.4L585.9 671.7Z"/>
<path class="b12" d="M274.3 539.8L272.9 538.8L273.3 538L285.3 544.3L287.5 554.5L282.7 555.2Z"/>
<path class="b12" d="M441.1 686L441.1 686L441.3 686.2Z"/>
<path class="b12" d="M347.8 620.4L347.3 620.5L346.6 619.4Z"/>
<path class="b12" d="M241.4 456.9L246.7 455.8L249.2 472.6L246.9 473.1Z"/>
<path class="b12" d="M789 423.3L791.9 424.3L791.9 424.6L788.5 440.1L787.2 439.7Z"/>
<path class="b12" d="M463.6 700.9L457.9 696.8L471.1 701.8L469.7 702.9Z"/>
<path class="b12" d="M783.9 457.1L782.8 456.1L786.2 447.9L788.5 440.1L788.7 440.7Z"/>
<path class="b12" d="M547.1 276.6L549.1 275.5L541.3 280.1L546.9 276.8Z"/>
<path class="b12" d="M713.9 279.5L708.2 277.5L704.9 275.7L708.5 276.7Z"/>
<path class="b12" d="M702.9 591.8L697.2 593.3L704.6 587.2L707.5 588.2Z"/>
<path class="b12" d="M791.9 424.3L789 423.3L789.8 406.9L792.5 407.9Z"/>
<path class="b12" d="M778.9 473.5L776.2 472.6L782.8 456.1L783.9 457.1Z"/>
<path class="b12" d="M282.7 555.2L287.5 554.5L291 560.5Z"/>
<path class="b12" d="M647.3 638.2L630.6 650.9L624.9 650.6L641.6 638.1Z"/>
<path class="b12" d="M246.9 473.1L249.2 472.6L251.6 489.3L251.4 489.4Z"/>
<path class="b12" d="M792.5 407.9L789.8 406.9L789.3 390.6L791.9 391.6Z"/>
<path class="b12" d="M769.6 328.8L766.6 325.1L767.7 325.7Z"/>
<path class="b12" d="M313.3 590.4L311.7 588.1L314.4 587.3L324.3 595.1L328.9 604.2L328.1 604.4Z"/>
<path class="b12" d="M251.4 489.4L251.6 489.3L252 494.6Z"/>
<path class="b12" d="M407.9 667.4L402.3 661.7L416.1 669.1L413.5 670.2Z"/>
<path class="b12" d="M485.6 304.6L468.9 300.2L474.6 297.4L491.3 305.3Z"/>
<path class="b12" d="M506.2 719.6L498.6 719L496.9 718.2L513.6 712.1L519.3 715.5Z"/>
<path class="b12" d="M754.9 309.6L752.2 308.6L747.2 303.6L752.9 307.6Z"/>
<path class="b12" d="M791.9 391.6L789.3 390.6L787.5 374.3L788.4 374.7L791.9 391.6Z"/>
<path class="b12" d="M753.7 522L758.5 522.9L752.9 523.3Z"/>
<path class="b12" d="M569.1 686.8L562.2 685.8L569.3 682.4L574.9 683.9Z"/>
<path class="b12" d="M690.7 604.9L687.8 603.9L697.2 593.3L702.9 591.8Z"/>
<path class="b12" d="M776.2 472.6L778.9 473.5L775.2 489.4L774.6 489.8L771 489Z"/>
<path class="b12" d="M352.3 627.5L347.3 620.5L347.8 620.4L363.3 631.9L366.9 637L365.8 637.4Z"/>
<path class="b12" d="M708.5 276.7L704.9 275.7L691.6 271.1L697.2 272.7Z"/>
<path class="b12" d="M652.6 262.8L635.9 261L641.6 261L658.3 262.9Z"/>
<path class="b12" d="M626 654.1L621.3 653.1L624.9 650.6L630.6 650.9Z"/>
<path class="b12" d="M389.6 653.3L388.4 653.8L385.6 650.9Z"/>
<path class="b12" d="M463.6 700.9L446.9 691.7L441.3 686.2L457.9 696.8Z"/>
<path class="b12" d="M328.1 604.4L328.9 604.2L330 605.7Z"/>
<path class="b12" d="M788.7 375.3L788.4 374.7L786.2 369L782.9 358.1L783.8 359.1Z"/>
<path class="b12" d="M686.2 608.4L680.6 609.8L687.8 603.9L690.7 604.9Z"/>
<path class="b12" d="M558.3 694.8L552.6 693.1L562.2 685.8L569.1 686.8Z"/>
<path class="b12" d="M788.7 440.7L788.5 440.1L791.9 424.6Z"/>
<path class="b12" d="M752.9 307.6L747.2 303.6L734.9 292.6L737.2 293.6Z"/>
<path class="b12" d="M613.9 662.8L608.3 662.6L621.3 653.1L626 654.1Z"/>
<path class="b12" d="M297.9 571.2L295.8 572.2L291 560.5Z"/>
<path class="b12" d="M757.7 505.6L760.6 506.6L758.6 522.9L758.5 522.9L753.7 522Z"/>
<path class="b12" d="M365.8 637.4L366.9 637L369 639.7Z"/>
<path class="b12" d="M754 539.4L750.5 538.4L752.9 523.3L758.5 522.9L758.6 522.9Z"/>
<path class="b11" d="M485.9 716.1L480.3 712.7L496.9 718.2L498.6 719L499 719.7Z"/>
<path class="b11" d="M402.3 661.7L407.9 667.4L391.3 657L388.4 653.8L389.6 653.3Z"/>
<path class="b12" d="M741.9 546.3L736.2 551.7L750.5 538.4L754 539.4Z"/>
<path class="b12" d="M722.2 571.6L722.3 572.1L719.6 573.4Z"/>
<path class="b12" d="M672 621.6L669.2 620.6L680.6 609.8L686.2 608.4Z"/>
<path class="b11" d="M441 687.1L441.1 686L441.3 686.2L446.9 691.7Z"/>
<path class="b11" d="M540.8 703.5L534.5 702.7L535.9 702.2Z"/>
<path class="b12" d="M783.8 359.1L782.9 358.1L776.1 341.8L777.7 342.9Z"/>
<path class="b12" d="M791.9 391.6L788.4 374.7L788.7 375.3Z"/>
<path class="b12" d="M296.6 573.3L295.8 572.2L297.9 571.2L307.6 579L311.7 588.1L310.4 588.4Z"/>
<path class="b12" d="M791.9 424.3L791.9 424.3L791.9 424.6Z"/>
<path class="b12" d="M335.6 614L330 605.7L346.6 619.4L347.3 620.5L344.2 621.5Z"/>
<path class="b12" d="M648.5 637.3L649.6 637.7L647.3 638.2Z"/>
<path class="b12" d="M737.2 293.6L734.9 292.6L730.6 289.6L736.2 292.9Z"/>
<path class="b12" d="M270.8 539.1L272.9 538.8L274.3 539.8Z"/>
<path class="b12" d="M472 293.3L460.3 292.5L452.3 290.9L457.9 289.4Z"/>
<path class="b12" d="M738.5 556L735.3 555L736.2 551.7L741.9 546.3Z"/>
<path class="b12" d="M669.6 623.4L663.9 624.7L669.2 620.6L672 621.6Z"/>
<path class="b12" d="M792.5 407.9L792.7 408.1L791.9 424.3L791.9 424.3Z"/>
<path class="b11" d="M600.9 670.9L596.3 669.9L608.3 662.6L613.9 662.8Z"/>
<path class="b11" d="M541.8 703.6L540.8 703.5L535.9 702.2L552.6 693.1L558.3 694.8Z"/>
<path class="b12" d="M791.9 391.6L791.9 391.6L792.7 408.1L792.5 407.9Z"/>
<path class="b11" d="M310.4 588.4L311.7 588.1L313.3 590.4Z"/>
<path class="b12" d="M791.9 391.6L791.9 391.6L791.9 391.6Z"/>
<path class="b12" d="M777.7 342.9L776.1 341.8L769.6 328.8L775.2 338.4Z"/>
<path class="b11" d="M344.2 621.5L347.3 620.5L352.3 627.5Z"/>
<path class="b11" d="M430.3 682.1L424.6 677.7L441.1 686L441 687.1Z"/>
<path class="b12" d="M735.3 555L738.5 556L725.2 569.4L722.3 572.1L722.2 571.6Z"/>
<path class="b12" d="M249.6 490.5L251.4 489.4L252 494.6L256.6 506.5L256.7 506.7Z"/>
<path class="b12" d="M234.8 424.3L235 424.3L235.3 433.5Z"/>
<path class="b11" d="M597.3 673.6L591.6 673.4L596.3 669.9L600.9 670.9Z"/>
<path class="b12" d="M234.8 408L235.1 407.9L235 424.3L234.8 424.3Z"/>
<path class="b11" d="M663.9 624.7L669.6 623.4L652.9 637L649.6 637.7L648.5 637.3Z"/>
<path class="b11" d="M374.6 645.9L369 639.7L385.6 650.9L388.4 653.8L387.6 654.4Z"/>
<path class="b12" d="M235.3 403.3L235.1 407.9L234.8 408Z"/>
<path class="b11" d="M707.5 588.2L707.9 589.1L702.9 591.8Z"/>
<path class="b11" d="M281.1 556.3L282.7 555.2L291 560.5L295.8 572.2L295 572.3Z"/>
<path class="b12" d="M452.3 290.9L435.6 285.7L441.3 282L457.9 289.4Z"/>
<path class="b11" d="M325 605.5L328.1 604.4L330 605.7L335.6 614Z"/>
<path class="b11" d="M541.6 703.8L524.9 717.2L519.3 715.5L534.5 702.7L540.8 703.5Z"/>
<path class="b11" d="M597.3 673.6L580.6 684.3L574.9 683.9L591.6 673.4Z"/>
<path class="b12" d="M241 481L240.2 474.2L246.9 473.1L251.4 489.4L249.6 490.5Z"/>
<path class="b11" d="M387.6 654.4L388.4 653.8L391.3 657Z"/>
<path class="b11" d="M413.5 670.2L413.2 671.2L407.9 667.4Z"/>
<path class="b11" d="M719.6 573.4L722.3 572.1L723.7 572.6L708.6 588.6L707.9 589.1L707.5 588.2Z"/>
<path class="b11" d="M280 552.8L274.3 539.8L282.7 555.2L281.1 556.3Z"/>
<path class="b11" d="M636.3 649.8L630.6 650.9L647.3 638.2L649.6 637.7L651.3 638.3Z"/>
<path class="b11" d="M469.3 703.5L463.6 700.9L469.7 702.9L470.7 703.9Z"/>
<path class="b12" d="M412.5 277.1L400.3 276.9L402.3 275.8Z"/>
<path class="b11" d="M364.3 638.5L365.8 637.4L369 639.7L374.6 645.9Z"/>
<path class="b11" d="M319 599L313.3 590.4L328.1 604.4L325 605.5Z"/>
<path class="b11" d="M295 572.3L295.8 572.2L296.6 573.3Z"/>
<path class="b12" d="M784.8 458.1L783.9 457.1L788.7 440.7L788.2 441.7Z"/>
<path class="b11" d="M513.7 720.5L506.2 719.6L519.3 715.5L524.9 717.2Z"/>
<path class="b11" d="M424.6 677.7L430.3 682.1L413.6 671.5L413.2 671.2L413.5 670.2Z"/>
<path class="b11" d="M690.7 604.9L691.3 605.8L686.2 608.4Z"/>
<path class="b12" d="M781.3 474.5L778.9 473.5L783.9 457.1L784.8 458.1Z"/>
<path class="b12" d="M491.3 305.3L474.6 297.4L480.3 294.8L496.9 307.4Z"/>
<path class="b12" d="M780.9 477.5L775.2 489.4L778.9 473.5L781.3 474.5Z"/>
<path class="b11" d="M723.7 572.6L722.3 572.1L725.2 569.4Z"/>
<path class="b11" d="M573.5 687.7L569.1 686.8L574.9 683.9L580.6 684.3Z"/>
<path class="b12" d="M400.3 276.9L381.5 276.9L385.6 274.2L402.3 275.8Z"/>
<path class="b11" d="M265.7 540.2L270.8 539.1L274.3 539.8L280 552.8Z"/>
<path class="b12" d="M315.1 293.2L308.9 293.5L313.3 288L330 283.1L324.3 290.7Z"/>
<path class="b12" d="M230.5 425.5L234.8 424.3L235.3 433.5L235.8 440.8L232.7 441.8Z"/>
<path class="b11" d="M651.3 638.3L649.6 637.7L652.9 637Z"/>
<path class="b11" d="M541.8 703.6L542.4 703.8L541.6 703.8Z"/>
<path class="b11" d="M628.6 655.1L626 654.1L630.6 650.9L636.3 649.8Z"/>
<path class="b11" d="M358 633.7L352.3 627.5L365.8 637.4L364.3 638.5Z"/>
<path class="b11" d="M672 621.6L672.3 622.1L669.6 623.4Z"/>
<path class="b11" d="M765 507.5L760.6 506.6L774.2 490L771 491.1Z"/>
<path class="b11" d="M307.7 589.5L310.4 588.4L313.3 590.4L319 599Z"/>
<path class="b11" d="M563.9 695L558.3 694.8L569.1 686.8L573.5 687.7Z"/>
<path class="b11" d="M763.3 523.9L758.6 522.9L758.6 522.9L764.2 521.3Z"/>
<path class="b11" d="M702.9 591.8L707.9 589.1L708.2 589.2L691.9 605.4L691.3 605.8L690.7 604.9Z"/>
<path class="b11" d="M764.2 521.3L758.6 522.9L760.6 506.6L765 507.5Z"/>
<path class="b11" d="M232.7 441.8L235.8 440.8L237.8 457.4L236.3 458Z"/>
<path class="b12" d="M231.6 392.8L236 391.8L235.3 403.3L234.8 408L230 409.1Z"/>
<path class="b11" d="M263.3 525.6L259.2 523.2L258.1 523L270.8 539.1L265.7 540.2Z"/>
<path class="b12" d="M381.5 276.9L364.1 277.1L369 273.7L385.6 274.2Z"/>
<path class="b11" d="M230 409.1L234.8 408L234.8 424.3L230.5 425.5Z"/>
<path class="b11" d="M749.9 540.5L754 539.4L758.6 522.9L763.3 523.9Z"/>
<path class="b11" d="M619.6 661.6L613.9 662.8L626 654.1L628.6 655.1Z"/>
<path class="b11" d="M236.3 458L237.8 457.4L240.2 474.2L240 474.3Z"/>
<path class="b11" d="M397 661.6L391.3 657L407.9 667.4L413.2 671.2L413.3 671.3Z"/>
<path class="b11" d="M302.3 582.3L296.6 573.3L310.4 588.4L307.7 589.5Z"/>
<path class="b11" d="M240 474.3L240.2 474.2L241 481Z"/>
<path class="b11" d="M558.3 694.8L563.9 695L547.3 704.1L542.4 703.8L541.8 703.6Z"/>
<path class="b11" d="M343.5 622.5L344.2 621.5L352.3 627.5L358 633.7Z"/>
<path class="b12" d="M480.1 294.2L472 293.3L457.9 289.4L463.6 288.3Z"/>
<path class="b11" d="M491.6 717.8L485.9 716.1L499 719.7L502.8 720.7Z"/>
<path class="b11" d="M708.2 589.2L707.9 589.1L708.6 588.6Z"/>
<path class="b11" d="M686.2 608.4L691.3 605.8L691.5 605.9L675.2 620.4L672.3 622.1L672 621.6Z"/>
<path class="b12" d="M421.3 277.3L412.5 277.1L402.3 275.8L407.9 273.2L424.6 276.2Z"/>
<path class="b12" d="M257.6 332.3L254.3 342.7L249.7 343.4Z"/>
<path class="b11" d="M281.1 556.3L281.1 556.5L280 552.8Z"/>
<path class="b11" d="M739.3 557L738.5 556L741.9 546.3L747.6 541.1Z"/>
<path class="b11" d="M235 376.4L237.9 375.7L236 391.8L231.6 392.8Z"/>
<path class="b11" d="M603.3 671.9L600.9 670.9L613.9 662.8L619.6 661.6Z"/>
<path class="b12" d="M433.5 277.7L421.3 277.3L424.6 276.2Z"/>
<path class="b11" d="M388 655.4L387.6 654.4L391.3 657L397 661.6Z"/>
<path class="b11" d="M413.3 671.3L413.2 671.2L413.6 671.5Z"/>
<path class="b11" d="M291.9 573.4L295 572.3L296.6 573.3L302.3 582.3Z"/>
<path class="b11" d="M781.3 474.5L781.4 474.6L780.9 477.5Z"/>
<path class="b11" d="M341.3 620.5L335.6 614L344.2 621.5L343.5 622.5Z"/>
<path class="b11" d="M435.9 684.9L430.3 682.1L441 687.1L443 688.1Z"/>
<path class="b12" d="M364.1 277.1L348.2 277.5L352.3 274.4L369 273.7Z"/>
<path class="b11" d="M730.9 563L725.2 569.4L738.5 556L739.3 557Z"/>
<path class="b11" d="M530.6 717.4L524.9 717.2L541.6 703.8L542.4 703.8L545.9 704.6Z"/>
<path class="b11" d="M658.6 634.3L652.9 637L669.6 623.4L672.3 622.1L673 622.6Z"/>
<path class="b11" d="M602.9 672.1L597.3 673.6L600.9 670.9L603.3 671.9Z"/>
<path class="b11" d="M691.5 605.9L691.3 605.8L691.9 605.4Z"/>
<path class="b11" d="M240 359.9L240.5 359.8L237.9 375.7L235 376.4Z"/>
<path class="b11" d="M285.6 563L281.1 556.5L281.1 556.3L295 572.3L291.9 573.4Z"/>
<path class="b11" d="M380.3 650.4L374.6 645.9L387.6 654.4L388 655.4Z"/>
<path class="b11" d="M724.7 573.6L723.7 572.6L725.2 569.4L730.9 563Z"/>
<path class="b11" d="M308.9 293.5L296.2 294.5L296.6 293.9L313.3 288Z"/>
<path class="b12" d="M457.9 289.4L441.3 282L446.9 278.7L463.6 288.3Z"/>
<path class="b11" d="M281.5 310.1L276.4 310.6L280 304.9L295.3 294.6L296.2 294.5L291 304.7Z"/>
<path class="b11" d="M784.8 458.1L785.4 459L781.4 474.6L781.3 474.5Z"/>
<path class="b11" d="M545.9 704.6L542.4 703.8L547.3 704.1Z"/>
<path class="b11" d="M325.1 606.5L325 605.5L335.6 614L341.3 620.5Z"/>
<path class="b11" d="M402.3 275.8L385.6 274.2L391.3 271L407.9 273.2Z"/>
<path class="b11" d="M602.9 672.1L586.3 683.3L580.6 684.3L597.3 673.6Z"/>
<path class="b11" d="M652.3 639.3L651.3 638.3L652.9 637L658.6 634.3Z"/>
<path class="b11" d="M765 507.5L766 507.8L764.2 521.3Z"/>
<path class="b11" d="M241 358L240.5 359.8L240 359.9Z"/>
<path class="b11" d="M673 622.6L672.3 622.1L675.2 620.4Z"/>
<path class="b11" d="M714.2 582.9L708.6 588.6L723.7 572.6L724.7 573.6Z"/>
<path class="b11" d="M239 475.4L240 474.3L241 481L244.5 491.2L244.7 491.6Z"/>
<path class="b11" d="M517.5 721.5L513.7 720.5L524.9 717.2L530.6 717.4Z"/>
<path class="b11" d="M641.9 647.1L636.3 649.8L651.3 638.3L652.3 639.3Z"/>
<path class="b11" d="M262.2 326.8L259.3 327.2L263.3 318.8L271 311.4L276.4 310.6L274.3 315.9Z"/>
<path class="b11" d="M502.6 310.3L496.9 307.4L480.3 294.8L481.7 294.5L487.7 295.1Z"/>
<path class="b11" d="M708.8 590.3L708.2 589.2L708.6 588.6L714.2 582.9Z"/>
<path class="b11" d="M365.2 639.5L364.3 638.5L374.6 645.9L380.3 650.4Z"/>
<path class="b11" d="M324.6 606L319 599L325 605.5L325.1 606.5Z"/>
<path class="b11" d="M575.6 688.7L573.5 687.7L580.6 684.3L586.3 683.3Z"/>
<path class="b11" d="M348.2 277.5L333.5 278.2L335.6 276.5L352.3 274.4Z"/>
<path class="b11" d="M241 358L244.7 344.2L249.7 343.4Z"/>
<path class="b11" d="M296.6 293.9L296.2 294.5L295.3 294.6Z"/>
<path class="b11" d="M232.1 459.2L236.3 458L240 474.3L239 475.4Z"/>
<path class="b11" d="M513.9 732.6L508.3 736.1L513.7 720.5L517.5 721.5Z"/>
<path class="b11" d="M697.6 600.3L691.9 605.4L708.2 589.2L708.8 590.3Z"/>
<path class="b11" d="M269 541.7L267.9 541L265.7 540.2L280 552.8L281.1 556.5L277.2 557.4Z"/>
<path class="b11" d="M788.2 441.7L788.1 442.8L786.6 454.6L785.4 459L784.8 458.1Z"/>
<path class="b11" d="M385.6 274.2L369 273.7L374.6 270.1L391.3 271Z"/>
<path class="b11" d="M446.7 278.5L433.5 277.7L424.6 276.2L430.3 274.9Z"/>
<path class="b11" d="M232.7 441.8L228.7 442.6L227.4 426.1L230.5 425.5Z"/>
<path class="b11" d="M628.9 656.1L628.6 655.1L636.3 649.8L641.9 647.1Z"/>
<path class="b11" d="M325 278.7L333.5 278.2L330 283.1L313.3 288L319 280.6Z"/>
<path class="b11" d="M230.5 425.5L227.4 426.1L227.2 409.7L230 409.1Z"/>
<path class="b11" d="M277.2 557.4L281.1 556.5L285.6 563Z"/>
<path class="b11" d="M363.6 638.3L358 633.7L364.3 638.5L365.2 639.5Z"/>
<path class="b11" d="M603.3 671.9L603.3 671.9L602.9 672.1Z"/>
<path class="b11" d="M569.6 693.5L563.9 695L573.5 687.7L575.6 688.7Z"/>
<path class="b11" d="M771 491.1L771.8 492.1L769.9 504.4L766 507.8L765 507.5Z"/>
<path class="b11" d="M308.4 590.5L307.7 589.5L319 599L324.6 606Z"/>
<path class="b11" d="M280 304.9L276.4 310.6L271 311.4Z"/>
<path class="b11" d="M691.5 606.9L691.5 605.9L691.9 605.4L697.6 600.3Z"/>
<path class="b11" d="M230 409.1L227.2 409.7L228 393.5L231.6 392.8Z"/>
<path class="b11" d="M249.7 343.4L244.7 344.2L246.6 339.2L254.9 328L259.3 327.2L257.6 332.3Z"/>
<path class="b11" d="M481.7 294.5L480.1 294.2L463.6 288.3L469.3 287.9L485.9 294.9Z"/>
<path class="b11" d="M230 454.7L228.7 442.6L232.7 441.8L236.3 458L232.1 459.2Z"/>
<path class="b11" d="M625.3 658.8L619.6 661.6L628.6 655.1L628.9 656.1Z"/>
<path class="b11" d="M680.9 615.8L675.2 620.4L691.5 605.9L691.5 606.9Z"/>
<path class="b10" d="M569.6 693.5L552.9 703.4L547.3 704.1L563.9 695Z"/>
<path class="b11" d="M308 589.9L302.3 582.3L307.7 589.5L308.4 590.5Z"/>
<path class="b11" d="M231.6 392.8L228 393.5L229.7 377.5L235 376.4Z"/>
<path class="b11" d="M335.6 276.5L333.5 278.2L325 278.7Z"/>
<path class="b11" d="M487.7 295.1L481.7 294.5L485.9 294.9Z"/>
<path class="b11" d="M257.2 507.7L250.5 508.5L246.6 503.8Z"/>
<path class="b11" d="M313.3 288L296.6 293.9L302.3 287.8L319 280.6Z"/>
<path class="b11" d="M446.9 278.7L446.7 278.5L447.3 278.6Z"/>
<path class="b11" d="M358 633.7L363.6 638.3L347 625.3L344.2 623.1L343.5 622.5Z"/>
<path class="b10" d="M619.6 661.6L625.3 658.8L608.6 669.9L603.3 671.9L603.3 671.9Z"/>
<path class="b11" d="M424.6 276.2L407.9 273.2L413.6 271.3L430.3 274.9Z"/>
<path class="b11" d="M263.3 318.8L259.3 327.2L254.9 328Z"/>
<path class="b11" d="M243.3 344.6L244.7 344.2L241 358L240 359.9L235.7 361.1Z"/>
<path class="b11" d="M369 273.7L352.3 274.4L358 270.7L374.6 270.1Z"/>
<path class="b11" d="M672.3 623.6L673 622.6L675.2 620.4L680.9 615.8Z"/>
<path class="b10" d="M546.8 705.6L545.9 704.6L547.3 704.1L552.9 703.4Z"/>
<path class="b11" d="M292.9 574.5L291.9 573.4L302.3 582.3L308 589.9Z"/>
<path class="b11" d="M235 376.4L229.7 377.5L230 376.3L235.7 361.1L240 359.9Z"/>
<path class="b11" d="M280 304.9L285.5 295.8L295.3 294.6Z"/>
<path class="b11" d="M469.3 287.9L463.6 288.3L446.9 278.7L447.3 278.6L456.9 279.4Z"/>
<path class="b10" d="M664.2 629.9L658.6 634.3L673 622.6L672.3 623.6Z"/>
<path class="b11" d="M750.9 541.5L748.6 540.7L753.2 526.9Z"/>
<path class="b10" d="M591.9 680.8L586.3 683.3L602.9 672.1L603.3 671.9L603.1 672.9Z"/>
<path class="b10" d="M536.3 715.9L530.6 717.4L545.9 704.6L546.8 705.6Z"/>
<path class="b11" d="M266.6 541.2L267.9 541L269 541.7Z"/>
<path class="b11" d="M226.8 426.6L227.4 426.1L228.7 442.6L228.4 442.9Z"/>
<path class="b10" d="M330.3 610.9L325.3 606.6L325.1 606.5L341.3 620.5L344.2 623.1L344.6 623.6Z"/>
<path class="b11" d="M226.3 410.2L227.2 409.7L227.4 426.1L226.8 426.6Z"/>
<path class="b11" d="M228.4 442.9L228.7 442.6L230 454.7Z"/>
<path class="b11" d="M407.9 273.2L391.3 271L397 268.5L413.6 271.3Z"/>
<path class="b11" d="M352.3 274.4L335.6 276.5L341.3 272.9L358 270.7Z"/>
<path class="b11" d="M295.3 294.6L285.5 295.8L285.6 295.6L302.3 287.8L296.6 293.9Z"/>
<path class="b11" d="M246.6 339.2L244.7 344.2L243.3 344.6Z"/>
<path class="b11" d="M263.3 318.8L266.5 312.1L271 311.4Z"/>
<path class="b11" d="M319 280.6L320.3 279.1L325 278.7Z"/>
<path class="b11" d="M227.2 393.9L228 393.5L227.2 409.7L226.3 410.2Z"/>
<path class="b10" d="M517.5 721.5L518 722.2L513.9 732.6Z"/>
<path class="b11" d="M232.1 459.2L231.1 459.4L230 454.7Z"/>
<path class="b10" d="M603.1 672.9L603.3 671.9L608.6 669.9Z"/>
<path class="b11" d="M771.8 492.1L772 492.5L769.9 504.4Z"/>
<path class="b10" d="M344.6 623.6L344.2 623.1L347 625.3Z"/>
<path class="b11" d="M447.3 278.6L446.7 278.5L430.3 274.9L435.9 274.3L452.6 278.5Z"/>
<path class="b10" d="M278.1 558.4L277.2 557.4L285.6 563L291.3 571.3Z"/>
<path class="b11" d="M239 475.4L235.1 476.4L231.1 459.4L232.1 459.2Z"/>
<path class="b11" d="M229.6 377.5L229.7 377.5L228 393.5L227.2 393.9Z"/>
<path class="b11" d="M508.3 312.1L508.3 312.1L502.6 310.3L487.7 295.1L493.9 296.1Z"/>
<path class="b10" d="M530.6 717.4L536.3 715.9L519.6 721.9L518 722.2L517.5 721.5Z"/>
<path class="b10" d="M575.4 689.8L575.6 688.7L586.3 683.3L591.9 680.8Z"/>
<path class="b11" d="M456.9 279.4L447.3 278.6L452.6 278.5Z"/>
<path class="b11" d="M325 278.7L320.3 279.1L324.6 276.4L341.3 272.9L335.6 276.5Z"/>
<path class="b11" d="M230 376.3L229.7 377.5L229.6 377.5Z"/>
<path class="b11" d="M271 311.4L266.5 312.1L269 308.9L285.3 295.8L285.5 295.8L280 304.9Z"/>
<path class="b11" d="M246.6 339.2L250.7 328.9L254.9 328Z"/>
<path class="b10" d="M235.6 479.4L235.1 476.4L239 475.4L244.7 491.6L245.5 492.6Z"/>
<path class="b11" d="M391.3 271L374.6 270.1L380.3 267.2L397 268.5Z"/>
<path class="b10" d="M735.5 558.1L735.5 557.9L736.6 554.7Z"/>
<path class="b10" d="M575.3 689.9L569.6 693.5L575.6 688.7L575.4 689.8Z"/>
<path class="b10" d="M754.5 525.1L757.4 525.8L753.2 526.9Z"/>
<path class="b10" d="M325.8 607.6L325.3 606.6L330.3 610.9Z"/>
<path class="b10" d="M777.5 475.7L776.6 476.7L775.6 483.5L772 492.5L771.8 492.1Z"/>
<path class="b11" d="M508.3 312.1L508.3 312.1L508.3 312.1Z"/>
<path class="b11" d="M508.3 312.1L508.3 312.1L508.3 312.1Z"/>
<path class="b11" d="M230 376.3L233.3 361.7L235.7 361.1Z"/>
<path class="b10" d="M262.6 542.4L266.6 541.2L269 541.7L274.6 548.8Z"/>
<path class="b11" d="M485.9 294.9L469.3 287.9L474.9 288.3L491.6 295.7Z"/>
<path class="b11" d="M254.9 328L250.7 328.9L252.3 326.3L264.8 312.5L266.5 312.1L263.3 318.8Z"/>
<path class="b10" d="M575.3 689.9L558.6 701.2L552.9 703.4L569.6 693.5Z"/>
<path class="b11" d="M285.6 295.6L285.5 295.8L285.3 295.8Z"/>
<path class="b11" d="M312.5 280L320.3 279.1L319 280.6L302.3 287.8L308 281.9Z"/>
<path class="b11" d="M430.3 274.9L413.6 271.3L419.3 270.2L435.9 274.3Z"/>
<path class="b11" d="M374.6 270.1L358 270.7L363.6 267.7L380.3 267.2Z"/>
<path class="b10" d="M225.8 427.6L226.8 426.6L228.4 442.9L228.3 443.9Z"/>
<path class="b10" d="M759.3 508.7L759.9 509.7L758.9 524.7L757.4 525.8L754.5 525.1Z"/>
<path class="b11" d="M250 329.2L250.7 328.9L246.6 339.2L243.3 344.6L240.1 345.7Z"/>
<path class="b10" d="M258 526.1L253.2 525.2L266.6 541.2L262.6 542.4Z"/>
<path class="b11" d="M269 308.9L266.5 312.1L264.8 312.5Z"/>
<path class="b10" d="M745.8 542.7L750.9 541.5L753.2 526.9L757.4 525.8L758.5 526.1Z"/>
<path class="b10" d="M224.9 411.3L226.3 410.2L226.8 426.6L225.8 427.6Z"/>
<path class="b10" d="M235.7 361.1L233.3 361.7L235.6 354.9L240.1 345.7L243.3 344.6Z"/>
<path class="b11" d="M324.6 276.4L320.3 279.1L312.5 280Z"/>
<path class="b10" d="M545.4 706.7L546.8 705.6L552.9 703.4L558.6 701.2Z"/>
<path class="b10" d="M309 591.5L308.6 590.6L313.6 595Z"/>
<path class="b10" d="M225.8 395L227.2 393.9L226.3 410.2L224.9 411.3Z"/>
<path class="b11" d="M474.9 288.3L469.3 287.9L456.9 279.4L464 280.3Z"/>
<path class="b10" d="M228.6 378.6L229.6 377.5L227.2 393.9L225.8 395Z"/>
<path class="b10" d="M232.8 362.2L233.3 361.7L230 376.3L229.6 377.5L228.6 378.6Z"/>
<path class="b11" d="M302.3 287.8L285.6 295.6L291.3 291L308 281.9Z"/>
<path class="b10" d="M541.9 711.1L536.3 715.9L546.8 705.6L545.4 706.7Z"/>
<path class="b11" d="M413.6 271.3L397 268.5L402.6 267.1L419.3 270.2Z"/>
<path class="b11" d="M508.3 312.1L508.3 312.1L493.9 296.1L499 297L513.9 312.1Z"/>
<path class="b11" d="M358 270.7L341.3 272.9L347 270L363.6 267.7Z"/>
<path class="b11" d="M464 280.3L456.9 279.4L452.6 278.5L458.3 279.1Z"/>
<path class="b10" d="M252.3 326.3L250.7 328.9L250 329.2Z"/>
<path class="b10" d="M758.5 526.1L757.4 525.8L758.9 524.7Z"/>
<path class="b10" d="M242.3 493.7L245.5 492.6L251.6 508.8L255.9 509.8Z"/>
<path class="b10" d="M291.3 291L285.6 295.6L285.3 295.8L281.3 296.9Z"/>
<path class="b10" d="M235.6 354.9L233.3 361.7L232.8 362.2Z"/>
<path class="b10" d="M759.9 509.7L759.9 509.9L758.9 524.7Z"/>
<path class="b10" d="M452.6 278.5L435.9 274.3L441.6 274.7L458.3 279.1Z"/>
<path class="b10" d="M241.3 493.2L235.6 479.4L245.5 492.6L242.3 493.7Z"/>
<path class="b10" d="M281.3 296.9L285.3 295.8L269 308.9L274.6 302.3Z"/>
<path class="b10" d="M341.3 272.9L324.6 276.4L330.3 273.9L347 270Z"/>
<path class="b10" d="M397 268.5L380.3 267.2L386 265.6L402.6 267.1Z"/>
<path class="b10" d="M294.3 575.5L294.3 575L297 577.2Z"/>
<path class="b10" d="M308 281.9L309.9 280.4L312.5 280Z"/>
<path class="b10" d="M274.6 302.3L269 308.9L264.8 312.5L261.9 313.6Z"/>
<path class="b10" d="M491.6 295.7L474.9 288.3L480.6 289.8L497.3 296.8Z"/>
<path class="b10" d="M235.6 354.9L238.8 346.3L240.1 345.7Z"/>
<path class="b10" d="M266 543.3L262.6 542.4L274.6 548.8L280.3 556.1Z"/>
<path class="b10" d="M261.9 313.6L264.8 312.5L252.3 326.3L258 318.1Z"/>
<path class="b10" d="M435.9 274.3L419.3 270.2L424.9 270.5L441.6 274.7Z"/>
<path class="b10" d="M312.5 280L309.9 280.4L313.6 278.9L330.3 273.9L324.6 276.4Z"/>
<path class="b10" d="M227.9 445L228.3 443.9L231.8 460.2L232.7 461.2Z"/>
<path class="b10" d="M380.3 267.2L363.6 267.7L369.3 266.1L386 265.6Z"/>
<path class="b10" d="M258 318.1L252.3 326.3L250 329.2L248.9 330.2Z"/>
<path class="b10" d="M240.1 345.7L238.8 346.3L241.3 342.2L248.9 330.2L250 329.2Z"/>
<path class="b10" d="M480.6 289.8L474.9 288.3L464 280.3L468.3 281.3Z"/>
<path class="b10" d="M225.8 427.6L224.6 428.7L223.9 412.2L224.9 411.3Z"/>
<path class="b10" d="M242.3 493.7L241.9 493.9L241.3 493.2Z"/>
<path class="b10" d="M308 281.1L309.9 280.4L308 281.9L291.3 291L297 287.3Z"/>
<path class="b10" d="M224.6 429L224.6 428.7L225.8 427.6L228.3 443.9L227.9 445Z"/>
<path class="b10" d="M224.9 411.3L223.9 412.2L224.6 396L225.8 395Z"/>
<path class="b10" d="M232.7 363.2L232.8 362.2L228.6 378.6L227.8 379.6Z"/>
<path class="b10" d="M419.3 270.2L402.6 267.1L408.3 267.2L424.9 270.5Z"/>
<path class="b10" d="M363.6 267.7L347 270L352.6 268.5L369.3 266.1Z"/>
<path class="b10" d="M225.8 395L224.6 396L224.6 396L227.8 379.6L228.6 378.6Z"/>
<path class="b10" d="M247 505.2L241.9 493.9L242.3 493.7L255.9 509.8L258.8 510.8Z"/>
<path class="b10" d="M313.6 278.9L309.9 280.4L308 281.1Z"/>
<path class="b10" d="M274.6 302.3L279.3 297.8L281.3 296.9Z"/>
<path class="b10" d="M499 297L501.5 297.7L502.9 298.5L519.6 311.2L513.9 312.1Z"/>
<path class="b10" d="M458.3 279.1L441.6 274.7L447.3 276.2L463.9 280.4Z"/>
<path class="b10" d="M402.6 267.1L386 265.6L391.6 265.6L408.3 267.2Z"/>
<path class="b10" d="M347 270L330.3 273.9L336 272.5L352.6 268.5Z"/>
<path class="b10" d="M281.3 296.9L279.3 297.8L280.3 297.3L297 287.3L291.3 291Z"/>
<path class="b10" d="M258 318.1L261.2 314.2L261.9 313.6Z"/>
<path class="b10" d="M502.7 298L501.5 297.7L497.3 296.8L480.6 289.8L486.3 292.1Z"/>
<path class="b10" d="M502.9 298.5L501.5 297.7L502.7 298Z"/>
<path class="b9" d="M284.8 560.4L284.5 560.1L286 560.9Z"/>
<path class="b10" d="M468.3 281.3L469.3 282.2L469.6 282.4L486.3 292.1L480.6 289.8Z"/>
<path class="b9" d="M519.6 311.2L502.9 298.5L508.6 303L525.3 310.9Z"/>
<path class="b9" d="M252.6 509.9L247 505.2L258.8 510.8L259.8 511.8Z"/>
<path class="b9" d="M508.6 303L502.9 298.5L502.7 298L506 299Z"/>
<path class="b9" d="M469.6 282.4L469.3 282.2L469.4 282.3Z"/>
<path class="b9" d="M258.3 511.7L252.6 509.9L259.8 511.8L263.1 512.8Z"/>
<path class="b13" d="M524.6 288.2L518.9 289.7L510.9 291.6L510.5 292.6Z"/>
<path class="b13" d="M510.5 292.6L510.9 291.6L502.3 299.5L507.9 296.8Z"/>
<path class="b12" d="M502.3 299.5L485.6 304.6L491.3 305.3L507.9 296.8Z"/>
<path class="b13" d="M563.6 272.4L557.9 273.6L549.1 275.5L547.1 276.6Z"/>
<path class="b12" d="M541.3 280.1L524.6 288.2L530.3 287.1L546.9 276.8Z"/>
<path class="b12" d="M596.9 264.7L580.3 268.1L585.9 267.1L602.6 263.3Z"/>
<path class="b12" d="M760.6 506.6L757.7 505.6L769.6 499.5L774.6 489.8L774.2 490Z"/>
<path class="b12" d="M530.3 287.1L524.6 288.2L510.5 292.6L513.8 293.6Z"/>
<path class="b12" d="M691.6 271.1L674.9 266.3L680.6 268.1L697.2 272.7Z"/>
<path class="b12" d="M580.3 268.1L563.6 272.4L569.3 271.8L585.9 267.1Z"/>
<path class="b12" d="M546.9 276.8L547.3 276.7L547.1 276.6Z"/>
<path class="b12" d="M635.9 261L619.3 261.2L624.9 261.2L641.6 261Z"/>
<path class="b12" d="M774.2 490L774.6 489.8L775.2 489.4Z"/>
<path class="b11" d="M499 719.7L498.6 719L502.6 730.7Z"/>
<path class="b12" d="M513.8 293.6L510.5 292.6L507.9 296.8L513.6 294.1Z"/>
<path class="b12" d="M730.6 289.6L713.9 279.5L719.6 283.5L736.2 292.9Z"/>
<path class="b12" d="M775.2 338.4L769.6 328.8L767.7 325.7L767.7 326.7Z"/>
<path class="b12" d="M507.9 296.8L491.3 305.3L496.9 307.4L513.6 294.1Z"/>
<path class="b12" d="M752.9 307.6L755.4 310L754.9 309.6Z"/>
<path class="b12" d="M547.1 276.6L547.3 276.7L552.6 276.6L569.3 271.8L563.6 272.4Z"/>
<path class="b11" d="M470.7 703.9L469.7 702.9L480.3 712.7L485.9 716.1Z"/>
<path class="b12" d="M674.9 266.3L658.3 262.9L663.9 264.7L680.6 268.1Z"/>
<path class="b12" d="M619.3 261.2L602.6 263.3L608.3 263.4L624.9 261.2Z"/>
<path class="b12" d="M788.2 441.7L788.7 440.7L791.9 424.6L791.9 424.3L790.7 425.4Z"/>
<path class="b11" d="M256.7 506.7L256.6 506.5L257.6 521.6Z"/>
<path class="b12" d="M767.7 326.7L767.7 325.7L754.9 309.6L755.4 310L758.6 315Z"/>
<path class="b12" d="M719.6 283.5L713.9 279.5L708.5 276.7L708.5 277.8Z"/>
<path class="b12" d="M548.3 277.7L547.3 276.7L546.9 276.8L530.3 287.1L535.9 286.6Z"/>
<path class="b11" d="M258.1 523L259.2 523.2L257.6 521.6Z"/>
<path class="b12" d="M736.2 292.9L737.2 293.8L737.2 293.6Z"/>
<path class="b12" d="M790.7 425.4L791.9 424.3L792.7 408.1L791.6 409Z"/>
<path class="b12" d="M790.7 392.7L791.9 391.6L791.9 391.6L788.7 375.3L788 376.4Z"/>
<path class="b12" d="M771 491.1L774.2 490L775.2 489.4L780.9 477.5Z"/>
<path class="b12" d="M658.3 262.9L641.6 261L647.3 262.9L663.9 264.7Z"/>
<path class="b12" d="M791.6 409L792.7 408.1L791.9 391.6L790.7 392.7Z"/>
<path class="b12" d="M602.6 263.3L585.9 267.1L591.6 267.3L608.3 263.4Z"/>
<path class="b12" d="M708.5 277.8L708.5 276.7L697.2 272.7L702.9 275.7Z"/>
<path class="b12" d="M513.6 294.1L515.1 293.8L513.8 293.6Z"/>
<path class="b11" d="M469.3 703.5L452.6 695L446.9 691.7L463.6 700.9Z"/>
<path class="b12" d="M552.6 276.6L547.3 276.7L548.3 277.7Z"/>
<path class="b12" d="M754.7 310.6L755.4 310L752.9 307.6L737.2 293.6L737.2 293.8L741.9 299.8Z"/>
<path class="b12" d="M775.2 338.4L777.7 343.3L777.7 342.9Z"/>
<path class="b11" d="M502.8 720.7L499 719.7L502.6 730.7L508.3 736.1Z"/>
<path class="b12" d="M788 376.4L788.7 375.3L783.8 359.1L783.7 360.1Z"/>
<path class="b12" d="M513.8 293.6L515.1 293.8L519.3 294.3L535.9 286.6L530.3 287.1Z"/>
<path class="b12" d="M758.6 315L755.4 310L754.7 310.6Z"/>
<path class="b12" d="M697.2 272.7L680.6 268.1L686.2 271.3L702.9 275.7Z"/>
<path class="b11" d="M747.6 541.1L741.9 546.3L754 539.4L749.9 540.5Z"/>
<path class="b11" d="M257.2 507.7L256.7 506.7L257.6 521.6L259.2 523.2L262.1 523.9Z"/>
<path class="b11" d="M443 688.1L441 687.1L446.9 691.7L452.6 695Z"/>
<path class="b12" d="M585.9 267.1L569.3 271.8L574.9 272.2L591.6 267.3Z"/>
<path class="b12" d="M641.6 261L624.9 261.2L630.6 263.1L647.3 262.9Z"/>
<path class="b12" d="M783.7 360.1L783.8 359.1L777.7 342.9L777.7 343.3L780.9 353Z"/>
<path class="b12" d="M735.2 294.6L737.2 293.8L736.2 292.9L719.6 283.5L725.2 289.1Z"/>
<path class="b12" d="M517.5 294.6L515.1 293.8L513.6 294.1L496.9 307.4L502.6 310.3Z"/>
<path class="b11" d="M262.1 523.9L259.2 523.2L263.3 525.6Z"/>
<path class="b12" d="M776.4 343.9L777.7 343.3L775.2 338.4L767.7 326.7L766.5 327.8Z"/>
<path class="b12" d="M741.9 299.8L737.2 293.8L735.2 294.6Z"/>
<path class="b11" d="M470.7 703.9L474.1 704.7L469.3 703.5Z"/>
<path class="b12" d="M680.6 268.1L663.9 264.7L669.6 268.1L686.2 271.3Z"/>
<path class="b12" d="M569.3 271.8L552.6 276.6L558.3 277.2L574.9 272.2Z"/>
<path class="b12" d="M624.9 261.2L608.3 263.4L613.9 265.2L630.6 263.1Z"/>
<path class="b11" d="M519.3 294.3L515.1 293.8L517.5 294.6Z"/>
<path class="b11" d="M485.9 716.1L491.6 717.8L474.9 705.1L474.1 704.7L470.7 703.9Z"/>
<path class="b12" d="M702.9 275.7L706.7 278.5L708.5 277.8Z"/>
<path class="b11" d="M435.9 684.9L419.3 674.9L413.6 671.5L430.3 682.1Z"/>
<path class="b11" d="M780.9 353L777.7 343.3L776.4 343.9Z"/>
<path class="b11" d="M766.5 327.8L767.7 326.7L758.6 315L764.2 325Z"/>
<path class="b11" d="M558.3 277.2L552.6 276.6L548.3 277.7L552.6 278.6Z"/>
<path class="b11" d="M749.9 540.5L748.6 540.7L747.6 541.1Z"/>
<path class="b11" d="M708.5 277.8L706.7 278.5L708.6 280.7L725.2 289.1L719.6 283.5Z"/>
<path class="b11" d="M771.8 492.1L771 491.1L780.9 477.5L781.4 474.6L777.5 475.7Z"/>
<path class="b11" d="M663.9 264.7L647.3 262.9L652.9 266.5L669.6 268.1Z"/>
<path class="b11" d="M265.7 540.2L267.9 541L263.3 525.6Z"/>
<path class="b11" d="M788.1 442.8L788.2 441.7L790.7 425.4L789.7 426.4Z"/>
<path class="b11" d="M415.6 672.3L413.3 671.3L413.6 671.5L419.3 674.9Z"/>
<path class="b11" d="M764.2 325L758.6 315L754.7 310.6L751.8 311.7Z"/>
<path class="b11" d="M608.3 263.4L591.6 267.3L597.3 269L613.9 265.2Z"/>
<path class="b11" d="M552.6 278.6L548.3 277.7L535.9 286.6L541.6 287.1Z"/>
<path class="b11" d="M780.9 353L783.2 360.6L783.7 360.1Z"/>
<path class="b11" d="M789.7 426.4L790.7 425.4L791.6 409L790.2 410.1Z"/>
<path class="b11" d="M458.3 696.7L452.6 695L469.3 703.5L474.1 704.7L474.8 704.9Z"/>
<path class="b11" d="M790.2 410.1L791.6 409L790.7 392.7L789.3 393.7Z"/>
<path class="b10" d="M510.3 721.6L502.8 720.7L508.3 736.1L513.9 732.6Z"/>
<path class="b11" d="M244.7 491.6L244.5 491.2L246.6 503.8Z"/>
<path class="b11" d="M402.6 664.7L397 661.6L413.3 671.3L415.6 672.3Z"/>
<path class="b11" d="M754.5 525.1L763.3 523.9L764.2 521.3L766 507.8L759.3 508.7Z"/>
<path class="b11" d="M343.5 622.5L344.2 623.1L341.3 620.5Z"/>
<path class="b11" d="M789.3 393.7L790.7 392.7L788 376.4L786.9 377.5Z"/>
<path class="b11" d="M751.8 311.7L754.7 310.6L741.9 299.8L747.6 308.2Z"/>
<path class="b11" d="M777.5 475.7L781.4 474.6L785.4 459L784.5 459.2Z"/>
<path class="b11" d="M763.3 523.9L754.5 525.1L753.2 526.9L748.6 540.7L749.9 540.5Z"/>
<path class="b11" d="M535.9 286.6L519.3 294.3L524.9 295.1L541.6 287.1Z"/>
<path class="b11" d="M704.1 278.9L706.7 278.5L702.9 275.7L686.2 271.3L691.9 275.8Z"/>
<path class="b10" d="M474.8 704.9L474.1 704.7L474.9 705.1Z"/>
<path class="b11" d="M786.9 377.5L788 376.4L783.7 360.1L783.2 360.6L786.6 376.3Z"/>
<path class="b10" d="M497.3 718L491.6 717.8L502.8 720.7L510.3 721.6Z"/>
<path class="b10" d="M447.5 689.1L443 688.1L452.6 695L458.3 696.7Z"/>
<path class="b11" d="M591.6 267.3L574.9 272.2L580.6 273.7L597.3 269Z"/>
<path class="b11" d="M647.3 262.9L630.6 263.1L636.3 266.6L652.9 266.5Z"/>
<path class="b11" d="M739.3 557L735.5 557.9L730.9 563Z"/>
<path class="b10" d="M475.8 705L474.8 704.9L474.9 705.1Z"/>
<path class="b11" d="M747.6 308.2L741.9 299.8L735.2 294.6L731.3 295.8Z"/>
<path class="b11" d="M524.9 295.1L519.3 294.3L517.5 294.6L522.6 295.5Z"/>
<path class="b11" d="M764.2 325L765.8 328.1L766.5 327.8Z"/>
<path class="b11" d="M784.5 459.2L785.4 459L786.6 454.6Z"/>
<path class="b11" d="M325.1 606.5L325.3 606.6L324.6 606Z"/>
<path class="b10" d="M390.6 656.4L388 655.4L397 661.6L402.6 664.7Z"/>
<path class="b11" d="M747.6 541.1L748.6 540.7L750.9 541.5L736.6 554.7L735.5 557.9L739.3 557Z"/>
<path class="b11" d="M708.6 280.7L706.7 278.5L704.1 278.9Z"/>
<path class="b11" d="M759.3 508.7L766 507.8L769.9 504.4Z"/>
<path class="b11" d="M780.8 361.2L783.2 360.6L780.9 353L776.4 343.9L773.2 345Z"/>
<path class="b10" d="M441.6 686.4L435.9 684.9L443 688.1L447.5 689.1Z"/>
<path class="b10" d="M482 705.8L475.8 705L474.9 705.1L491.6 717.8L497.3 718Z"/>
<path class="b11" d="M686.2 271.3L669.6 268.1L675.2 272.8L691.9 275.8Z"/>
<path class="b11" d="M788.1 442.8L787.9 443L786.6 454.6Z"/>
<path class="b11" d="M731.3 295.8L735.2 294.6L725.2 289.1L730.9 295.6Z"/>
<path class="b11" d="M574.9 272.2L558.3 277.2L563.9 278.5L580.6 273.7Z"/>
<path class="b11" d="M630.6 263.1L613.9 265.2L619.6 268.5L636.3 266.6Z"/>
<path class="b10" d="M386 653.4L380.3 650.4L388 655.4L390.6 656.4Z"/>
<path class="b11" d="M522.6 295.5L517.5 294.6L502.6 310.3L508.3 312.1L508.3 312.1Z"/>
<path class="b11" d="M773.2 345L776.4 343.9L766.5 327.8L765.8 328.1L769.9 339.8Z"/>
<path class="b11" d="M786.6 376.3L783.2 360.6L780.8 361.2Z"/>
<path class="b10" d="M291.3 571.3L285.6 563L291.9 573.4L292.9 574.5Z"/>
<path class="b11" d="M789.7 426.4L789.1 426.9L787.9 443L788.1 442.8Z"/>
<path class="b11" d="M721.5 574.7L724.7 573.6L730.9 563L735.5 557.9L735.5 558.1Z"/>
<path class="b10" d="M441.6 686.4L424.9 676.6L419.3 674.9L435.9 684.9Z"/>
<path class="b11" d="M245.5 492.6L244.7 491.6L246.6 503.8L250.5 508.5L251.6 508.8Z"/>
<path class="b10" d="M650.8 640.4L652.3 639.3L658.6 634.3L664.2 629.9Z"/>
<path class="b10" d="M365.2 639.5L366.9 640.1L363.6 638.3Z"/>
<path class="b10" d="M518 722.2L510.3 721.6L513.9 732.6Z"/>
<path class="b11" d="M786.6 376.3L786.8 377.5L786.9 377.5Z"/>
<path class="b10" d="M719.9 575.8L714.2 582.9L724.7 573.6L721.5 574.7Z"/>
<path class="b11" d="M563.9 278.5L558.3 277.2L552.6 278.6L559.6 279.5Z"/>
<path class="b11" d="M790.2 410.1L789.3 410.6L789.1 426.9L789.7 426.4Z"/>
<path class="b11" d="M725.2 289.1L708.6 280.7L714.2 288.4L730.9 295.6Z"/>
<path class="b10" d="M308.4 590.5L308.6 590.6L308 589.9Z"/>
<path class="b11" d="M786.9 377.5L786.8 377.5L788.6 394.1L789.3 393.7Z"/>
<path class="b11" d="M747.6 308.2L750 312.2L751.8 311.7Z"/>
<path class="b10" d="M480.6 705.4L463.9 696.9L458.3 696.7L474.8 704.9L475.8 705Z"/>
<path class="b11" d="M789.3 393.7L788.6 394.1L789.3 410.6L790.2 410.1Z"/>
<path class="b10" d="M628.9 656.1L628.1 656.6L625.3 658.8Z"/>
<path class="b10" d="M647.6 642.8L641.9 647.1L652.3 639.3L650.8 640.4Z"/>
<path class="b11" d="M669.6 268.1L652.9 266.5L658.6 271.3L675.2 272.8Z"/>
<path class="b10" d="M706.2 591.4L708.8 590.3L714.2 582.9L719.9 575.8Z"/>
<path class="b10" d="M380.3 650.4L386 653.4L369.3 641.4L366.9 640.1L365.2 639.5Z"/>
<path class="b11" d="M613.9 265.2L597.3 269L602.9 271.9L619.6 268.5Z"/>
<path class="b11" d="M559.6 279.5L552.6 278.6L541.6 287.1L547.3 288.5Z"/>
<path class="b10" d="M420.2 673.2L415.6 672.3L419.3 674.9L424.9 676.6Z"/>
<path class="b10" d="M313.6 595L308.6 590.6L308.4 590.5L324.6 606L325.3 606.6L325.8 607.6Z"/>
<path class="b11" d="M761.7 328.9L765.8 328.1L764.2 325L751.8 311.7L750 312.2L753.2 320Z"/>
<path class="b10" d="M480.6 705.4L475.8 705L482 705.8Z"/>
<path class="b10" d="M251.6 508.8L250.5 508.5L252.3 522.6Z"/>
<path class="b11" d="M780.3 460.3L784.5 459.2L786.6 454.6L787.9 443L783.8 443.9Z"/>
<path class="b11" d="M493.9 296.1L487.7 295.1L485.9 294.9L491.6 295.7Z"/>
<path class="b11" d="M691.9 275.8L696.2 279.8L704.1 278.9Z"/>
<path class="b10" d="M703.2 593.5L697.6 600.3L708.8 590.3L706.2 591.4Z"/>
<path class="b10" d="M274.6 548.8L269 541.7L277.2 557.4L278.1 558.4Z"/>
<path class="b11" d="M769.9 339.8L765.8 328.1L761.7 328.9Z"/>
<path class="b10" d="M641.9 647.1L647.6 642.8L630.9 654.7L628.1 656.6L628.9 656.1Z"/>
<path class="b11" d="M776.6 476.7L777.5 475.7L784.5 459.2L780.3 460.3Z"/>
<path class="b11" d="M730.9 295.6L731.1 295.8L731.3 295.8Z"/>
<path class="b11" d="M508.3 312.1L508.3 312.1L508.3 312.1Z"/>
<path class="b11" d="M508.3 312.1L508.3 312.1L508.3 312.1Z"/>
<path class="b10" d="M408.3 666.3L402.6 664.7L415.6 672.3L420.2 673.2Z"/>
<path class="b10" d="M228.3 443.9L228.4 442.9L230 454.7L231.1 459.4L231.8 460.2Z"/>
<path class="b10" d="M688.4 608L691.5 606.9L697.6 600.3L703.2 593.5Z"/>
<path class="b11" d="M541.6 287.1L524.9 295.1L530.6 296.2L547.3 288.5Z"/>
<path class="b11" d="M704.1 278.9L696.2 279.8L697.6 281.8L714.2 288.4L708.6 280.7Z"/>
<path class="b10" d="M519.6 721.9L502.9 716.5L497.3 718L510.3 721.6L518 722.2Z"/>
<path class="b10" d="M759.9 509.7L759.3 508.7L769.9 504.4L772 492.5L766.9 493.2Z"/>
<path class="b10" d="M352.6 628.5L347 625.3L363.6 638.3L366.9 640.1L368 640.5Z"/>
<path class="b11" d="M652.9 266.5L636.3 266.6L641.9 271.3L658.6 271.3Z"/>
<path class="b11" d="M597.3 269L580.6 273.7L586.3 276.1L602.9 271.9Z"/>
<path class="b10" d="M454.3 690L447.5 689.1L458.3 696.7L463.9 696.9Z"/>
<path class="b11" d="M783.8 443.9L787.9 443L789.1 426.9L786.1 427.5Z"/>
<path class="b10" d="M686.6 609.4L680.9 615.8L691.5 606.9L688.4 608Z"/>
<path class="b11" d="M769.9 339.8L771.8 345.4L773.2 345Z"/>
<path class="b11" d="M781.5 378.6L786.8 377.5L786.6 376.3L780.8 361.2L776.5 362.4Z"/>
<path class="b11" d="M745.5 312.9L750 312.2L747.6 308.2L731.3 295.8L731.1 295.8L736.6 306.7Z"/>
<path class="b10" d="M292.9 574.5L294.3 575L291.3 571.3Z"/>
<path class="b10" d="M614.3 666.1L608.6 669.9L625.3 658.8L628.1 656.6L626.9 657.2Z"/>
<path class="b11" d="M530.6 296.2L524.9 295.1L522.6 295.5L528.8 296.4Z"/>
<path class="b10" d="M721.5 574.7L720.8 574.9L719.9 575.8Z"/>
<path class="b10" d="M786.1 427.5L789.1 426.9L789.3 410.6L786.5 411.2Z"/>
<path class="b10" d="M672.3 623.6L669.2 624.6L664.2 629.9Z"/>
<path class="b11" d="M784.9 394.9L788.6 394.1L786.8 377.5L781.5 378.6Z"/>
<path class="b10" d="M231.8 460.2L231.1 459.4L235.1 476.4L235.3 476.5Z"/>
<path class="b10" d="M395.2 657.4L390.6 656.4L402.6 664.7L408.3 666.3Z"/>
<path class="b10" d="M297 577.2L294.3 575L292.9 574.5L308 589.9L308.6 590.6L309 591.5Z"/>
<path class="b10" d="M368 640.5L366.9 640.1L369.3 641.4Z"/>
<path class="b11" d="M508.3 312.1L508.3 312.1L513.9 312.1L528.8 296.4L522.6 295.5Z"/>
<path class="b10" d="M786.5 411.2L789.3 410.6L788.6 394.1L784.9 394.9Z"/>
<path class="b10" d="M447.3 686.8L441.6 686.4L447.5 689.1L454.3 690Z"/>
<path class="b10" d="M347.3 624.5L344.6 623.6L347 625.3L352.6 628.5Z"/>
<path class="b10" d="M766.9 493.2L772 492.5L775.6 483.5Z"/>
<path class="b10" d="M492.4 706.6L482 705.8L497.3 718L502.9 716.5Z"/>
<path class="b10" d="M742.2 543.6L736.6 554.7L750.9 541.5L745.8 542.7Z"/>
<path class="b10" d="M650.8 640.4L649.6 640.8L647.6 642.8Z"/>
<path class="b10" d="M258 526.1L252.3 522.6L253.2 525.2L258 526.1Z"/>
<path class="b11" d="M753.2 320L750 312.2L745.5 312.9Z"/>
<path class="b10" d="M235.3 476.5L235.1 476.4L235.6 479.4Z"/>
<path class="b11" d="M691.6 280.2L696.2 279.8L691.9 275.8L675.2 272.8L680.9 278.4Z"/>
<path class="b11" d="M563.9 278.5L559.6 279.5L569.3 280.3Z"/>
<path class="b11" d="M636.3 266.6L619.6 268.5L625.3 272.9L641.9 271.3Z"/>
<path class="b10" d="M626.9 657.2L628.1 656.6L630.9 654.7Z"/>
<path class="b11" d="M776.5 362.4L780.8 361.2L773.2 345L771.8 345.4L775.6 360.5Z"/>
<path class="b10" d="M680.9 615.8L686.6 609.4L669.9 623.7L669.2 624.6L672.3 623.6Z"/>
<path class="b10" d="M255.9 509.8L251.6 508.8L252.3 522.6L258 526.1Z"/>
<path class="b10" d="M600.5 674L603.1 672.9L608.6 669.9L614.3 666.1Z"/>
<path class="b10" d="M391.6 655L386 653.4L390.6 656.4L395.2 657.4Z"/>
<path class="b10" d="M575.4 689.8L575.4 689.8L575.3 689.9Z"/>
<path class="b10" d="M733.8 559.2L735.5 558.1L736.6 554.7L742.2 543.6Z"/>
<path class="b10" d="M706.2 591.4L704.8 591.7L703.2 593.5Z"/>
<path class="b11" d="M586.3 276.1L580.6 273.7L563.9 278.5L569.3 280.3L569.8 280.4Z"/>
<path class="b10" d="M336 614.2L330.3 610.9L344.6 623.6L347.3 624.5Z"/>
<path class="b10" d="M447.3 686.8L430.6 676.8L424.9 676.6L441.6 686.4Z"/>
<path class="b10" d="M735.5 558.1L733.8 559.2L725.6 564.9L720.8 574.9L721.5 574.7Z"/>
<path class="b11" d="M721.2 297L731.1 295.8L730.9 295.6L714.2 288.4L719.9 296.4Z"/>
<path class="b10" d="M486.3 704.7L480.6 705.4L482 705.8L492.4 706.6Z"/>
<path class="b10" d="M776.6 476.7L776.3 476.9L775.6 483.5Z"/>
<path class="b10" d="M597.6 676.2L591.9 680.8L603.1 672.9L600.5 674Z"/>
<path class="b11" d="M697.6 281.8L696.2 279.8L691.6 280.2Z"/>
<path class="b10" d="M753.2 320L757.3 329.7L761.7 328.9Z"/>
<path class="b10" d="M281.3 559.4L278.1 558.4L291.3 571.3L294.3 575L294.3 575.5Z"/>
<path class="b10" d="M664.2 629.9L669.2 624.6L668.8 624.8L653.3 636.9L649.6 640.8L650.8 640.4Z"/>
<path class="b10" d="M391.6 655L375 643.1L369.3 641.4L386 653.4Z"/>
<path class="b10" d="M541.9 711.1L525.3 719.1L519.6 721.9L536.3 715.9Z"/>
<path class="b10" d="M736.6 306.7L731.1 295.8L721.2 297Z"/>
<path class="b10" d="M675.2 272.8L658.6 271.3L664.2 276.9L680.9 278.4Z"/>
<path class="b10" d="M780.3 460.3L778.7 460.9L776.3 476.9L776.6 476.7Z"/>
<path class="b10" d="M591.9 680.8L597.6 676.2L580.9 686.6L575.4 689.8L575.4 689.8Z"/>
<path class="b10" d="M719.9 575.8L720.8 574.9L718.6 575.8L708.9 584L704.8 591.7L706.2 591.4Z"/>
<path class="b10" d="M619.6 268.5L602.9 271.9L608.6 275.7L625.3 272.9Z"/>
<path class="b10" d="M328.7 608.6L325.8 607.6L330.3 610.9L336 614.2Z"/>
<path class="b10" d="M766.8 346.2L771.8 345.4L769.9 339.8L761.7 328.9L757.3 329.7L758.9 335.4Z"/>
<path class="b10" d="M427 674.1L420.2 673.2L424.9 676.6L430.6 676.8Z"/>
<path class="b10" d="M688.4 608L687.6 608.3L686.6 609.4Z"/>
<path class="b10" d="M486.3 704.7L469.6 695.4L463.9 696.9L480.6 705.4Z"/>
<path class="b10" d="M569.3 280.3L559.6 279.5L547.3 288.5L552.9 290.8L569.6 280.5Z"/>
<path class="b10" d="M499 297L493.9 296.1L491.6 295.7L497.3 296.8Z"/>
<path class="b10" d="M775.6 360.5L771.8 345.4L766.8 346.2Z"/>
<path class="b10" d="M258 526.1L258 526.1L258 526.1Z"/>
<path class="b10" d="M636.6 649.1L630.9 654.7L647.6 642.8L649.6 640.8L647 641.5Z"/>
<path class="b10" d="M280.3 556.1L274.6 548.8L278.1 558.4L281.3 559.4Z"/>
<path class="b10" d="M372.7 641.4L368 640.5L369.3 641.4L375 643.1Z"/>
<path class="b10" d="M237.7 477.5L235.3 476.5L235.6 479.4L241.3 493.2Z"/>
<path class="b10" d="M530.6 296.2L528.8 296.4L534.8 297.1Z"/>
<path class="b10" d="M783.8 443.9L780.7 444.9L778.7 460.9L780.3 460.3Z"/>
<path class="b10" d="M319.3 598.4L313.6 595L325.8 607.6L328.7 608.6Z"/>
<path class="b10" d="M718.6 575.8L720.8 574.9L725.6 564.9Z"/>
<path class="b10" d="M413.9 666.6L408.3 666.3L420.2 673.2L427 674.1Z"/>
<path class="b10" d="M668.8 624.8L669.2 624.6L669.9 623.7Z"/>
<path class="b10" d="M714.2 288.4L697.6 281.8L703.2 291.1L719.9 296.4Z"/>
<path class="b10" d="M564.3 696.6L558.6 701.2L575.3 689.9L575.4 689.8L571.2 690.9Z"/>
<path class="b10" d="M775.6 360.5L776 362.5L776.5 362.4Z"/>
<path class="b10" d="M703.2 593.5L704.8 591.7L702.1 592.5L692.2 600.7L687.6 608.3L688.4 608Z"/>
<path class="b10" d="M736.6 306.7L740.1 313.6L745.5 312.9Z"/>
<path class="b10" d="M745.8 542.7L743.7 543L742.2 543.6Z"/>
<path class="b10" d="M232.7 461.2L231.8 460.2L235.3 476.5L237.7 477.5Z"/>
<path class="b9" d="M525.3 719.1L508.6 711.7L502.9 716.5L519.6 721.9Z"/>
<path class="b10" d="M569.8 280.4L569.3 280.3L569.6 280.5Z"/>
<path class="b10" d="M658.6 271.3L641.9 271.3L647.6 276.8L664.2 276.9Z"/>
<path class="b10" d="M463.6 690.8L454.3 690L463.9 696.9L469.6 695.4Z"/>
<path class="b10" d="M602.9 271.9L586.3 276.1L591.9 279.3L608.6 275.7Z"/>
<path class="b10" d="M680.9 278.4L683 280.7L691.6 280.2Z"/>
<path class="b10" d="M776.5 362.4L776 362.5L778.6 379.2L781.5 378.6Z"/>
<path class="b10" d="M765.2 494.3L766.9 493.2L775.6 483.5L776.3 476.9L769.6 477.9Z"/>
<path class="b10" d="M358.3 630.2L352.6 628.5L368 640.5L372.7 641.4Z"/>
<path class="b10" d="M552.9 290.8L547.3 288.5L530.6 296.2L534.8 297.1L536.5 297.3Z"/>
<path class="b10" d="M647 641.5L649.6 640.8L653.3 636.9Z"/>
<path class="b10" d="M311.9 592.5L309 591.5L313.6 595L319.3 598.4Z"/>
<path class="b10" d="M781.8 428.7L786.1 427.5L786.5 411.2L781.7 412.3Z"/>
<path class="b10" d="M622.2 658.3L626.9 657.2L630.9 654.7L636.6 649.1Z"/>
<path class="b10" d="M781.5 378.6L778.6 379.2L780.5 395.9L784.9 394.9Z"/>
<path class="b9" d="M545.4 706.7L544.4 707.2L541.9 711.1Z"/>
<path class="b10" d="M766.9 493.2L765.2 494.3L764.6 499.6L759.9 509.9L759.9 509.7Z"/>
<path class="b9" d="M571.2 690.9L575.4 689.8L580.9 686.6Z"/>
<path class="b10" d="M786.1 427.5L781.8 428.7L781.2 437.8L780.7 444.9L783.8 443.9Z"/>
<path class="b10" d="M754.3 330.1L757.3 329.7L753.2 320L745.5 312.9L740.1 313.6L742.2 319.7Z"/>
<path class="b10" d="M263.6 528.3L258 526.1L258 526.1L262.6 542.4L266 543.3Z"/>
<path class="b9" d="M452.9 685.8L447.3 686.8L454.3 690L463.6 690.8Z"/>
<path class="b9" d="M600.5 674L599.3 674.4L597.6 676.2Z"/>
<path class="b9" d="M401.9 658.3L395.2 657.4L408.3 666.3L413.9 666.6Z"/>
<path class="b10" d="M702.1 592.5L704.8 591.7L708.9 584Z"/>
<path class="b10" d="M747.9 527.3L758.5 526.1L758.9 524.7L759.9 509.9L750.8 510.9Z"/>
<path class="b10" d="M719.9 296.4L720.3 297.1L721.2 297Z"/>
<path class="b10" d="M691.6 280.2L683 280.7L686.6 286.8L703.2 291.1L697.6 281.8Z"/>
<path class="b9" d="M505.1 707.4L492.4 706.6L502.9 716.5L508.6 711.7Z"/>
<path class="b9" d="M619.9 660L614.3 666.1L626.9 657.2L622.2 658.3Z"/>
<path class="b10" d="M675.6 615.7L669.9 623.7L686.6 609.4L687.6 608.3L683.8 609.2Z"/>
<path class="b10" d="M781.7 412.3L786.5 411.2L784.9 394.9L780.5 395.9L781.2 407.6Z"/>
<path class="b10" d="M769.6 477.9L776.3 476.9L778.7 460.9L775.2 461.5Z"/>
<path class="b10" d="M258.8 510.8L255.9 509.8L258 526.1L258 526.1L262.9 527.1Z"/>
<path class="b9" d="M352 625.5L347.3 624.5L352.6 628.5L358.3 630.2Z"/>
<path class="b10" d="M534.8 297.1L528.8 296.4L513.9 312.1L519.6 311.2L536.3 297.9Z"/>
<path class="b10" d="M591.9 279.3L586.3 276.1L569.8 280.4L583.1 281.2Z"/>
<path class="b10" d="M302.6 580.6L297 577.2L309 591.5L311.9 592.5Z"/>
<path class="b10" d="M758.5 526.1L747.9 527.3L747.9 527.4L743.7 543L745.8 542.7Z"/>
<path class="b10" d="M733.8 559.2L729.1 560L725.6 564.9Z"/>
<path class="b10" d="M758.9 335.4L757.3 329.7L754.3 330.1Z"/>
<path class="b10" d="M641.9 271.3L625.3 272.9L630.9 278L647.6 276.8Z"/>
<path class="b9" d="M558.6 701.2L564.3 696.6L547.6 705.3L544.4 707.2L545.4 706.7Z"/>
<path class="b9" d="M397.3 655.3L391.6 655L395.2 657.4L401.9 658.3Z"/>
<path class="b10" d="M238.9 346.7L238.8 346.3L235.6 354.9L232.8 362.2L232.7 363.2Z"/>
<path class="b10" d="M680.9 278.4L664.2 276.9L668.3 281.4L683 280.7Z"/>
<path class="b9" d="M491.9 702.5L486.3 704.7L492.4 706.6L505.1 707.4Z"/>
<path class="b9" d="M614.3 666.1L619.9 660L603.3 670.8L599.3 674.4L600.5 674Z"/>
<path class="b10" d="M583.1 281.2L569.8 280.4L569.6 280.5L575.3 285.8Z"/>
<path class="b10" d="M683.8 609.2L687.6 608.3L692.2 600.7Z"/>
<path class="b10" d="M735 314.1L740.1 313.6L736.6 306.7L721.2 297L720.3 297.1L725.6 309Z"/>
<path class="b9" d="M452.9 685.8L436.3 675.3L430.6 676.8L447.3 686.8Z"/>
<path class="b9" d="M341.6 615.9L336 614.2L347.3 624.5L352 625.5Z"/>
<path class="b9" d="M296.9 576.5L294.3 575.5L297 577.2L302.6 580.6Z"/>
<path class="b10" d="M775.2 461.5L778.7 460.9L780.7 444.9L779.9 445Z"/>
<path class="b10" d="M262.9 527.1L258 526.1L263.6 528.3Z"/>
<path class="b10" d="M758.9 335.4L762.2 346.9L766.8 346.2Z"/>
<path class="b10" d="M468.3 281.3L464 280.3L458.3 279.1L463.9 280.4Z"/>
<path class="b10" d="M742.2 543.6L743.7 543L743.3 543.8L731.2 550.6L729.1 560L733.8 559.2Z"/>
<path class="b9" d="M663.2 625.9L668.8 624.8L669.9 623.7L675.6 615.7Z"/>
<path class="b10" d="M750.8 510.9L759.9 509.9L764.6 499.6Z"/>
<path class="b10" d="M536.5 297.3L534.8 297.1L536.3 297.9Z"/>
<path class="b10" d="M497.3 296.8L501.5 297.7L499 297Z"/>
<path class="b10" d="M768 363.6L776 362.5L775.6 360.5L766.8 346.2L762.2 346.9L764.6 357.6Z"/>
<path class="b9" d="M281.3 559.4L284.5 560.1L280.3 556.1Z"/>
<path class="b10" d="M779.9 445L780.7 444.9L781.2 437.8Z"/>
<path class="b10" d="M719.9 296.4L703.2 291.1L707.6 298.1L720.3 297.1Z"/>
<path class="b9" d="M397.3 655.3L380.6 643.3L375 643.1L391.6 655Z"/>
<path class="b9" d="M718.6 575.8L713.2 576.7L708.9 584Z"/>
<path class="b10" d="M569.6 280.5L552.9 290.8L558.6 293.8L575.3 285.8Z"/>
<path class="b10" d="M774.5 379.8L778.6 379.2L776 362.5L768 363.6Z"/>
<path class="b9" d="M658.9 629.1L653.3 636.9L668.8 624.8L663.2 625.9Z"/>
<path class="b10" d="M625.3 272.9L608.6 275.7L614.3 280.2L630.9 278Z"/>
<path class="b9" d="M530.9 710L525.3 719.1L541.9 711.1L544.4 707.2L533.7 707.9Z"/>
<path class="b10" d="M781.8 428.7L781.5 428.7L781.2 437.8Z"/>
<path class="b9" d="M435.9 675L427 674.1L430.6 676.8L436.3 675.3Z"/>
<path class="b9" d="M333.5 609.5L328.7 608.6L336 614.2L341.6 615.9Z"/>
<path class="b10" d="M743.3 543.8L743.7 543L747.9 527.4Z"/>
<path class="b10" d="M742.2 319.7L740.1 313.6L735 314.1Z"/>
<path class="b10" d="M781.7 412.3L781.5 412.4L781.5 428.7L781.8 428.7Z"/>
<path class="b9" d="M586.6 680.9L580.9 686.6L597.6 676.2L599.3 674.4L594.4 675.2Z"/>
<path class="b9" d="M491.9 702.5L475.3 691.8L469.6 695.4L486.3 704.7Z"/>
<path class="b10" d="M779.5 396L780.5 395.9L778.6 379.2L774.5 379.8Z"/>
<path class="b10" d="M241.3 342.2L238.8 346.3L238.9 346.7Z"/>
<path class="b10" d="M781.2 407.6L781.5 412.4L781.7 412.3Z"/>
<path class="b10" d="M781.2 407.6L780.5 395.9L779.5 396Z"/>
<path class="b9" d="M647 641.5L641.4 642.5L636.6 649.1Z"/>
<path class="b9" d="M286 560.9L284.5 560.1L281.3 559.4L294.3 575.5L296.9 576.5Z"/>
<path class="b10" d="M765.2 494.3L764.9 494.4L764.6 499.6Z"/>
<path class="b9" d="M240.4 478.5L237.7 477.5L241.3 493.2L241.9 493.9L245.5 494.7Z"/>
<path class="b9" d="M379.4 642.4L372.7 641.4L375 643.1L380.6 643.3Z"/>
<path class="b9" d="M511.1 707.8L505.1 707.4L508.6 711.7Z"/>
<path class="b9" d="M725.6 564.9L729.1 560L727.2 560.4L714.6 571.8L713.2 576.7L718.6 575.8Z"/>
<path class="b10" d="M664.2 276.9L647.6 276.8L652.4 281.8L668.3 281.4Z"/>
<path class="b9" d="M419.6 665.4L413.9 666.6L427 674.1L435.9 675Z"/>
<path class="b9" d="M571.2 690.9L567.9 691.6L564.3 696.6Z"/>
<path class="b10" d="M224.6 428.7L224.6 428.7L224.6 429Z"/>
<path class="b9" d="M622.2 658.3L621.1 658.5L619.9 660Z"/>
<path class="b10" d="M224.1 412.4L223.9 412.2L224.6 428.7L224.6 428.7Z"/>
<path class="b10" d="M683 280.7L668.3 281.4L669.9 284L686.6 286.8Z"/>
<path class="b10" d="M769.6 477.9L767.3 478.5L764.9 494.4L765.2 494.3Z"/>
<path class="b9" d="M325 600.1L319.3 598.4L328.7 608.6L333.5 609.5Z"/>
<path class="b9" d="M702.1 592.5L696.6 593.4L692.2 600.7Z"/>
<path class="b9" d="M533.7 707.9L544.4 707.2L547.6 705.3Z"/>
<path class="b10" d="M742.2 319.7L746.3 331L754.3 330.1Z"/>
<path class="b10" d="M591.9 279.3L583.1 281.2L595.3 281.6Z"/>
<path class="b10" d="M558.6 293.8L552.9 290.8L536.5 297.3L544.5 298.2Z"/>
<path class="b9" d="M594.4 675.2L599.3 674.4L603.3 670.8Z"/>
<path class="b10" d="M224.6 396L224.6 396L223.9 412.2L224.1 412.4Z"/>
<path class="b9" d="M475.1 691.7L463.6 690.8L469.6 695.4L475.3 691.8Z"/>
<path class="b9" d="M528.2 708.1L511.1 707.8L508.6 711.7L525.3 719.1L530.9 710Z"/>
<path class="b9" d="M653.3 636.9L658.9 629.1L642.3 641.3L641.4 642.5L647 641.5Z"/>
<path class="b9" d="M747.9 527.3L747.9 527.3L747.9 527.4Z"/>
<path class="b9" d="M245.5 494.7L241.9 493.9L247 505.2Z"/>
<path class="b10" d="M224.6 396L224.6 396L224.6 396Z"/>
<path class="b10" d="M614.3 280.2L608.6 275.7L591.9 279.3L595.3 281.6L604.1 281.8Z"/>
<path class="b9" d="M227.9 445L228.1 445.6L224.6 429Z"/>
<path class="b9" d="M364 630.4L358.3 630.2L372.7 641.4L379.4 642.4Z"/>
<path class="b9" d="M233.8 462.3L232.7 461.2L237.7 477.5L240.4 478.5Z"/>
<path class="b9" d="M270.8 544.3L266 543.3L280.3 556.1L284.5 560.1L284.8 560.4Z"/>
<path class="b10" d="M261.9 313.6L261.2 314.2L263.6 312.6L279.3 298L279.3 297.8L274.6 302.3Z"/>
<path class="b10" d="M757.4 347.4L762.2 346.9L758.9 335.4L754.3 330.1L746.3 331L747.9 336.9Z"/>
<path class="b10" d="M720.3 297.1L707.6 298.1L708.9 301.1L725.6 309Z"/>
<path class="b10" d="M441.6 274.7L424.9 270.5L430.6 272.1L447.3 276.2Z"/>
<path class="b9" d="M727.2 560.4L729.1 560L731.2 550.6Z"/>
<path class="b9" d="M750.8 510.9L750.3 511.4L747.9 527.3L747.9 527.3Z"/>
<path class="b10" d="M544.5 298.2L536.5 297.3L536.3 297.9L541.9 302.4Z"/>
<path class="b9" d="M580.9 686.6L586.6 680.9L569.9 689.8L567.9 691.6L571.2 690.9Z"/>
<path class="b9" d="M316.8 593.5L311.9 592.5L319.3 598.4L325 600.1Z"/>
<path class="b10" d="M330.3 273.9L313.6 278.9L319.3 277.8L336 272.5Z"/>
<path class="b9" d="M775.2 461.5L769.8 462.5L767.3 478.5L769.6 477.9Z"/>
<path class="b10" d="M386 265.6L369.3 266.1L375 266.1L391.6 265.6Z"/>
<path class="b9" d="M458.6 683.3L452.9 685.8L463.6 690.8L475.1 691.7Z"/>
<path class="b9" d="M708.9 584L713.2 576.7L711.5 577L697.9 589.6L696.6 593.4L702.1 592.5Z"/>
<path class="b9" d="M683.8 609.2L679.2 609.9L675.6 615.7Z"/>
<path class="b9" d="M410.6 659.2L401.9 658.3L413.9 666.6L419.6 665.4Z"/>
<path class="b9" d="M771.9 446.2L779.9 445L781.2 437.8L781.5 428.7L773 429.9Z"/>
<path class="b9" d="M436.7 675.1L435.9 675L436.3 675.3Z"/>
<path class="b9" d="M636.6 649.1L641.4 642.5L640.1 642.7L625.6 652.9L621.1 658.5L622.2 658.3Z"/>
<path class="b10" d="M647.6 276.8L630.9 278L635 282L652.4 281.8Z"/>
<path class="b10" d="M764.6 357.6L762.2 346.9L757.4 347.4Z"/>
<path class="b10" d="M725.6 309L728.2 314.7L735 314.1Z"/>
<path class="b9" d="M224.6 396L228.1 380.3L227.8 379.6Z"/>
<path class="b10" d="M261.6 314.7L261.2 314.2L258 318.1L248.9 330.2L248.9 331.3Z"/>
<path class="b9" d="M230.3 454.2L228.1 445.6L227.9 445L232.7 461.2L233.8 462.3Z"/>
<path class="b10" d="M536.3 297.9L519.6 311.2L525.3 310.9L541.9 302.4Z"/>
<path class="b9" d="M269.3 532.1L263.6 528.3L266 543.3L270.8 544.3Z"/>
<path class="b9" d="M358.6 626.4L352 625.5L358.3 630.2L364 630.4Z"/>
<path class="b10" d="M701.4 298.4L707.6 298.1L703.2 291.1L686.6 286.8L692.2 296.3Z"/>
<path class="b9" d="M772.6 413.5L781.5 412.4L781.2 407.6L779.5 396L770.5 397.2Z"/>
<path class="b9" d="M308.3 582.4L302.6 580.6L311.9 592.5L316.8 593.5Z"/>
<path class="b10" d="M463.9 280.4L469.3 282.2L468.3 281.3Z"/>
<path class="b10" d="M280.3 297.3L279.3 297.8L279.3 298Z"/>
<path class="b10" d="M764.6 357.6L765.9 363.8L768 363.6Z"/>
<path class="b9" d="M514.3 705.9L497.6 697.8L491.9 702.5L505.1 707.4L511.1 707.8Z"/>
<path class="b9" d="M265.6 528.1L262.9 527.1L263.6 528.3L269.3 532.1Z"/>
<path class="b10" d="M595.3 281.6L583.1 281.2L575.3 285.8L580.9 291.3L597.6 284.5Z"/>
<path class="b9" d="M764.6 499.6L764.9 494.4L755.9 495.5L753.6 508.6L750.3 511.4L750.8 510.9Z"/>
<path class="b10" d="M668.3 281.4L652.4 281.8L653.3 283.2L669.9 284Z"/>
<path class="b10" d="M319.3 277.8L313.6 278.9L308 281.1L308 282.2Z"/>
<path class="b9" d="M663.2 625.9L660.8 626.3L658.9 629.1Z"/>
<path class="b9" d="M533.7 707.9L531.6 708.1L530.9 710Z"/>
<path class="b9" d="M402.9 654.2L397.3 655.3L401.9 658.3L410.6 659.2Z"/>
<path class="b9" d="M248.9 331.3L248.9 330.2L241.3 342.2L247 334.5Z"/>
<path class="b9" d="M773 429.9L781.5 428.7L781.5 412.4L772.6 413.5Z"/>
<path class="b9" d="M779.9 445L771.9 446.2L770.2 459.9L769.8 462.5L775.2 461.5Z"/>
<path class="b9" d="M553.3 699.2L547.6 705.3L564.3 696.6L567.9 691.6L562.9 692.1Z"/>
<path class="b9" d="M227.5 429.7L224.6 428.7L224.6 429L228.1 445.6L229.3 446Z"/>
<path class="b10" d="M768 363.6L765.9 363.8L768.4 380.6L774.5 379.8Z"/>
<path class="b9" d="M711.5 577L713.2 576.7L714.6 571.8Z"/>
<path class="b9" d="M531.6 708.1L528.2 708.1L530.9 710Z"/>
<path class="b9" d="M514.3 705.9L511.1 707.8L528.2 708.1Z"/>
<path class="b9" d="M743.3 543.8L735.5 544.7L731.2 550.6Z"/>
<path class="b9" d="M447.4 675.9L436.7 675.1L436.3 675.3L452.9 685.8L458.6 683.3Z"/>
<path class="b9" d="M692.2 600.7L696.6 593.4L694.7 593.7L681.2 605.2L679.2 609.9L683.8 609.2Z"/>
<path class="b10" d="M630.9 278L614.3 280.2L616.2 282L635 282Z"/>
<path class="b9" d="M247 334.5L241.3 342.2L238.9 346.7L240.4 347.8Z"/>
<path class="b9" d="M475.4 691.7L475.1 691.7L475.3 691.8Z"/>
<path class="b10" d="M424.9 270.5L408.3 267.2L413.9 269L430.6 272.1Z"/>
<path class="b9" d="M608.9 663.3L603.3 670.8L619.9 660L621.1 658.5L614.2 659.5Z"/>
<path class="b9" d="M259.8 511.8L258.8 510.8L262.9 527.1L265.6 528.1Z"/>
<path class="b9" d="M226.7 413.4L224.1 412.4L224.6 428.7L227.5 429.7Z"/>
<path class="b10" d="M742.1 331.4L746.3 331L742.2 319.7L735 314.1L728.2 314.7L731.2 324Z"/>
<path class="b9" d="M383 642.7L379.4 642.4L380.6 643.3Z"/>
<path class="b10" d="M369.3 266.1L352.6 268.5L358.3 268.5L375 266.1Z"/>
<path class="b10" d="M604.1 281.8L595.3 281.6L597.6 284.5Z"/>
<path class="b9" d="M347.3 616.1L341.6 615.9L352 625.5L358.6 626.4Z"/>
<path class="b9" d="M240.4 347.8L238.9 346.7L232.7 363.2L233.6 364.2Z"/>
<path class="b9" d="M301.6 577.4L296.9 576.5L302.6 580.6L308.3 582.4Z"/>
<path class="b10" d="M614.3 280.2L604.1 281.8L616.2 282Z"/>
<path class="b10" d="M308 282.2L308 281.1L297 287.3L302.6 285.2Z"/>
<path class="b9" d="M227.2 397L224.6 396L224.1 412.4L226.7 413.4Z"/>
<path class="b10" d="M708.9 301.1L707.6 298.1L701.4 298.4Z"/>
<path class="b9" d="M640.1 642.7L641.4 642.5L642.3 641.3Z"/>
<path class="b9" d="M263.6 312.6L261.2 314.2L261.6 314.7Z"/>
<path class="b9" d="M755.9 495.5L764.9 494.4L767.3 478.5L762 479.1Z"/>
<path class="b9" d="M227.8 379.6L228.1 380.3L230.3 375.3L233.6 364.2L232.7 363.2Z"/>
<path class="b9" d="M229.1 380.7L228.1 380.3L224.6 396L224.6 396L227.2 397Z"/>
<path class="b9" d="M747.9 527.4L747.9 527.3L738 528.6L736.9 529.9L735.5 544.7L743.3 543.8Z"/>
<path class="b9" d="M594.4 675.2L590 675.9L586.6 680.9Z"/>
<path class="b10" d="M686.6 286.8L669.9 284L675.6 294.1L692.2 296.3Z"/>
<path class="b9" d="M770.5 397.2L779.5 396L774.5 379.8L768.4 380.6L770.2 396.2Z"/>
<path class="b10" d="M575.3 285.8L558.6 293.8L564.3 297.2L580.9 291.3Z"/>
<path class="b9" d="M547.6 705.3L553.3 699.2L536.6 703.7L531.6 708.1L533.7 707.9Z"/>
<path class="b9" d="M490.7 692.4L475.4 691.7L475.3 691.8L491.9 702.5L497.6 697.8Z"/>
<path class="b9" d="M387.9 643.3L383 642.7L380.6 643.3L397.3 655.3L402.9 654.2Z"/>
<path class="b9" d="M675.6 615.7L679.2 609.9L675.8 610.4L664.6 619.2L660.8 626.3L663.2 625.9Z"/>
<path class="b9" d="M562.9 692.1L567.9 691.6L569.9 689.8Z"/>
<path class="b9" d="M614.2 659.5L621.1 658.5L625.6 652.9Z"/>
<path class="b9" d="M694.7 593.7L696.6 593.4L697.9 589.6Z"/>
<path class="b9" d="M747.9 336.9L746.3 331L742.1 331.4Z"/>
<path class="b9" d="M229.3 446L228.1 445.6L230.3 454.2Z"/>
<path class="b9" d="M727.2 560.4L719.4 561.4L714.6 571.8Z"/>
<path class="b10" d="M652.4 281.8L635 282L636.6 284.5L653.3 283.2Z"/>
<path class="b9" d="M340 610.4L333.5 609.5L341.6 615.9L347.3 616.1Z"/>
<path class="b9" d="M291.6 562.6L286 560.9L296.9 576.5L301.6 577.4Z"/>
<path class="b9" d="M738 528.6L747.9 527.3L750.3 511.4L743.6 512.1Z"/>
<path class="b9" d="M297 287.3L280.3 297.3L286 295.8L302.6 285.2Z"/>
<path class="b9" d="M441.9 673.1L425.3 662.6L419.6 665.4L435.9 675L436.7 675.1Z"/>
<path class="b9" d="M762 479.1L767.3 478.5L769.8 462.5L769.1 462.6Z"/>
<path class="b9" d="M469.4 282.3L469.3 282.2L463.9 280.4L447.3 276.2L452.9 278.6Z"/>
<path class="b9" d="M250.1 495.7L245.5 494.7L247 505.2L252.6 509.9Z"/>
<path class="b9" d="M408.3 267.2L391.6 265.6L397.3 267.5L413.9 269Z"/>
<path class="b9" d="M747.9 336.9L750.8 348.1L757.4 347.4Z"/>
<path class="b9" d="M352.6 268.5L336 272.5L341.6 272.6L358.3 268.5Z"/>
<path class="b9" d="M603.3 670.8L608.9 663.3L592.3 673.1L590 675.9L594.4 675.2Z"/>
<path class="b9" d="M441.9 673.1L436.7 675.1L447.4 675.9Z"/>
<path class="b9" d="M717.5 315.5L728.2 314.7L725.6 309L708.9 301.1L714.6 314.3Z"/>
<path class="b9" d="M289 561.3L284.8 560.4L286 560.9L291.6 562.6Z"/>
<path class="b9" d="M769.1 462.6L769.8 462.5L770.2 459.9Z"/>
<path class="b9" d="M564.3 297.2L558.6 293.8L544.5 298.2L556.3 299.1Z"/>
<path class="b9" d="M330.6 600.2L325 600.1L333.5 609.5L340 610.4Z"/>
<path class="b9" d="M635 282L616.2 282L619.9 287.7L636.6 284.5Z"/>
<path class="b9" d="M647.9 631.8L642.3 641.3L658.9 629.1L660.8 626.3L654.3 627.1Z"/>
<path class="b9" d="M743.6 512.1L750.3 511.4L753.6 508.6Z"/>
<path class="b9" d="M286 295.8L280.3 297.3L279.3 298L281.6 299Z"/>
<path class="b9" d="M692.2 296.3L693.7 298.8L701.4 298.4Z"/>
<path class="b9" d="M243.8 479.5L240.4 478.5L245.5 494.7L250.1 495.7Z"/>
<path class="b9" d="M536.6 703.7L519.9 699.8L514.3 705.9L528.2 708.1L531.6 708.1Z"/>
<path class="b9" d="M675.8 610.4L679.2 609.9L681.2 605.2Z"/>
<path class="b9" d="M669.9 284L653.3 283.2L658.9 293.3L675.6 294.1Z"/>
<path class="b9" d="M756.3 364.8L765.9 363.8L764.6 357.6L757.4 347.4L750.8 348.1L753.6 361Z"/>
<path class="b9" d="M731.2 550.6L735.5 544.7L733.9 545L720.2 555.4L719.4 561.4L727.2 560.4Z"/>
<path class="b9" d="M616.2 282L604.1 281.8L597.6 284.5L603.3 292.1L619.9 287.7Z"/>
<path class="b9" d="M771.9 446.2L770.9 446.4L770.2 459.9Z"/>
<path class="b9" d="M230.3 375.3L228.1 380.3L229.1 380.7Z"/>
<path class="b9" d="M386.3 642L369.6 629L364 630.4L379.4 642.4L383 642.7Z"/>
<path class="b9" d="M711.5 577L703 578.1L697.9 589.6Z"/>
<path class="b9" d="M480.9 688.5L464.3 678.7L458.6 683.3L475.1 691.7L475.4 691.7Z"/>
<path class="b9" d="M506 299L502.7 298L486.3 292.1L491.9 295Z"/>
<path class="b9" d="M773 429.9L771.3 430.1L770.9 446.4L771.9 446.2Z"/>
<path class="b9" d="M480.9 688.5L475.4 691.7L490.7 692.4Z"/>
<path class="b9" d="M556.3 299.1L544.5 298.2L541.9 302.4L547.6 307Z"/>
<path class="b9" d="M731.2 324L728.2 314.7L717.5 315.5Z"/>
<path class="b9" d="M281.6 299L279.3 298L263.6 312.6L269.3 310.6Z"/>
<path class="b9" d="M276.2 545.2L270.8 544.3L284.8 560.4L289 561.3Z"/>
<path class="b9" d="M764.3 381L768.4 380.6L765.9 363.8L756.3 364.8Z"/>
<path class="b9" d="M233.8 462.3L235.9 463.2L230.3 454.2Z"/>
<path class="b9" d="M447.3 276.2L430.6 272.1L436.3 275L452.9 278.6Z"/>
<path class="b9" d="M247 334.5L249.9 331.8L248.9 331.3Z"/>
<path class="b9" d="M640.1 642.7L630.9 643.8L625.6 652.9Z"/>
<path class="b9" d="M323.3 594.4L316.8 593.5L325 600.1L330.6 600.2Z"/>
<path class="b9" d="M772.6 413.5L771.1 413.7L771.3 430.1L773 429.9Z"/>
<path class="b9" d="M575.6 682.5L569.9 689.8L586.6 680.9L590 675.9L584.3 676.4Z"/>
<path class="b9" d="M386.3 642L383 642.7L387.9 643.3Z"/>
<path class="b9" d="M770.2 396.2L768.4 380.6L764.3 381Z"/>
<path class="b9" d="M755.9 495.5L754.6 495.8L753.6 508.6Z"/>
<path class="b9" d="M336 272.5L319.3 277.8L325 278L341.6 272.6Z"/>
<path class="b9" d="M421.6 660L410.6 659.2L419.6 665.4L425.3 662.6Z"/>
<path class="b9" d="M391.6 265.6L375 266.1L380.6 267.9L397.3 267.5Z"/>
<path class="b9" d="M654.3 627.1L660.8 626.3L664.6 619.2Z"/>
<path class="b9" d="M770.5 397.2L770.3 397.3L771.1 413.7L772.6 413.5Z"/>
<path class="b9" d="M701.4 298.4L693.7 298.8L697.9 309.3L714.6 314.3L708.9 301.1Z"/>
<path class="b9" d="M770.2 396.2L770.3 397.3L770.5 397.2Z"/>
<path class="b9" d="M731.2 324L733.9 332L742.1 331.4Z"/>
<path class="b9" d="M562.9 692.1L556.5 692.8L553.3 699.2Z"/>
<path class="b9" d="M269.3 310.6L263.6 312.6L261.6 314.7L264.4 315.7Z"/>
<path class="b9" d="M733.9 545L735.5 544.7L736.9 529.9Z"/>
<path class="b9" d="M714.6 571.8L719.4 561.4L717.8 561.6L703.6 575.3L703 578.1L711.5 577Z"/>
<path class="b9" d="M236 463.4L235.9 463.2L233.8 462.3L240.4 478.5L243.8 479.5Z"/>
<path class="b9" d="M541.9 302.4L525.3 310.9L530.9 312.1L547.6 307Z"/>
<path class="b9" d="M694.7 593.7L686.2 594.7L681.2 605.2Z"/>
<path class="b9" d="M614.2 659.5L611 660L608.9 663.3Z"/>
<path class="b9" d="M367.2 627.3L358.6 626.4L364 630.4L369.6 629Z"/>
<path class="b9" d="M275 534.4L269.3 532.1L270.8 544.3L276.2 545.2Z"/>
<path class="b9" d="M762 479.1L756.9 479.8L754.6 495.8L755.9 495.5Z"/>
<path class="b9" d="M692.2 296.3L675.6 294.1L678.7 299.4L693.7 298.8Z"/>
<path class="b9" d="M653.3 283.2L636.6 284.5L642.3 294L658.9 293.3Z"/>
<path class="b9" d="M597.6 284.5L580.9 291.3L586.6 296.7L603.3 292.1Z"/>
<path class="b9" d="M642.3 641.3L647.9 631.8L631.3 643.1L630.9 643.8L640.1 642.7Z"/>
<path class="b9" d="M314 582.5L308.3 582.4L316.8 593.5L323.3 594.4Z"/>
<path class="b8" d="M408.6 651.5L402.9 654.2L410.6 659.2L421.6 660Z"/>
<path class="b9" d="M738 528.6L737.4 528.7L736.9 529.9Z"/>
<path class="b8" d="M501.2 692.9L490.7 692.4L497.6 697.8Z"/>
<path class="b9" d="M486.3 292.1L469.6 282.4L475.3 287.7L491.9 295Z"/>
<path class="b9" d="M248.9 331.3L249.9 331.8L252.6 330.6L264.4 315.7L261.6 314.7Z"/>
<path class="b9" d="M269.5 529L265.6 528.1L269.3 532.1L275 534.4Z"/>
<path class="b8" d="M584.3 676.4L590 675.9L592.3 673.1Z"/>
<path class="b9" d="M743 348.7L750.8 348.1L747.9 336.9L742.1 331.4L733.9 332L736.9 343.5Z"/>
<path class="b8" d="M461.4 676.6L447.4 675.9L458.6 683.3L464.3 678.7Z"/>
<path class="b9" d="M325 278L319.3 277.8L308 282.2L311.6 283.2Z"/>
<path class="b9" d="M233.4 447L229.3 446L230.3 454.2L235.9 463.2L235.9 463.3Z"/>
<path class="b9" d="M231.4 430.7L227.5 429.7L229.3 446L233.4 447Z"/>
<path class="b8" d="M569.9 689.8L575.6 682.5L558.9 689.9L556.5 692.8L562.9 692.1Z"/>
<path class="b8" d="M510.3 693.1L501.2 692.9L497.6 697.8L514.3 705.9L519.9 699.8Z"/>
<path class="b9" d="M430.6 272.1L413.9 269L419.6 272.3L436.3 275Z"/>
<path class="b9" d="M743.6 512.1L739.7 512.7L737.4 528.7L738 528.6Z"/>
<path class="b8" d="M353 614.7L347.3 616.1L358.6 626.4L367.2 627.3Z"/>
<path class="b9" d="M769.1 462.6L759.1 463.8L756.9 479.8L762 479.1Z"/>
<path class="b9" d="M375 266.1L358.3 268.5L364 270.3L380.6 267.9Z"/>
<path class="b9" d="M251.5 332.3L249.9 331.8L247 334.5L240.4 347.8L243.4 348.8Z"/>
<path class="b9" d="M717.8 561.6L719.4 561.4L720.2 555.4Z"/>
<path class="b9" d="M308.2 578.4L301.6 577.4L308.3 582.4L314 582.5Z"/>
<path class="b9" d="M675.8 610.4L668.7 611.3L664.6 619.2Z"/>
<path class="b9" d="M230.4 414.3L226.7 413.4L227.5 429.7L231.4 430.7Z"/>
<path class="b9" d="M714.6 314.3L715.2 315.7L717.5 315.5Z"/>
<path class="b9" d="M263.1 512.8L259.8 511.8L265.6 528.1L269.5 529Z"/>
<path class="b9" d="M697.9 589.6L703 578.1L701.8 578.3L686.9 591.9L686.2 594.7L694.7 593.7Z"/>
<path class="b9" d="M564.3 297.2L556.3 299.1L567.5 299.4Z"/>
<path class="b9" d="M311.6 283.2L308 282.2L302.6 285.2L308.3 285Z"/>
<path class="b9" d="M243.4 348.8L240.4 347.8L233.6 364.2L236.1 365.2Z"/>
<path class="b8" d="M625.6 652.9L630.9 643.8L629.8 643.9L614.6 654.1L611 660L614.2 659.5Z"/>
<path class="b9" d="M230.9 398L227.2 397L226.7 413.4L230.4 414.3Z"/>
<path class="b9" d="M753.6 361L750.8 348.1L743 348.7Z"/>
<path class="b9" d="M475.3 287.7L469.6 282.4L469.4 282.3L467.5 283.4Z"/>
<path class="b8" d="M447.6 669.2L441.9 673.1L447.4 675.9L461.4 676.6Z"/>
<path class="b8" d="M556.5 692.8L541.6 693.4L536.6 703.7L553.3 699.2Z"/>
<path class="b9" d="M525.3 310.9L508.6 303L514.3 307.7L530.9 312.1Z"/>
<path class="b9" d="M770.2 459.9L770.9 446.4L761 447.5L759.2 462.7L759.1 463.8L769.1 462.6Z"/>
<path class="b8" d="M398.3 644.1L387.9 643.3L402.9 654.2L408.6 651.5Z"/>
<path class="b9" d="M232.8 381.6L229.1 380.7L227.2 397L230.9 398Z"/>
<path class="b9" d="M236.1 365.2L233.6 364.2L230.3 375.3L236 365.8Z"/>
<path class="b9" d="M636.6 284.5L619.9 287.7L625.6 296L642.3 294Z"/>
<path class="b9" d="M236 365.8L230.3 375.3L229.1 380.7L232.8 381.6Z"/>
<path class="b9" d="M770.2 396.2L764.3 381L756.7 381.7L758.6 398.4L770.3 397.3Z"/>
<path class="b9" d="M586.6 296.7L580.9 291.3L564.3 297.2L567.5 299.4L574.2 299.8Z"/>
<path class="b9" d="M753.6 361L754.4 365L756.3 364.8Z"/>
<path class="b8" d="M348.5 611.3L340 610.4L347.3 616.1L353 614.7Z"/>
<path class="b9" d="M756.3 364.8L754.4 365L756.7 381.7L764.3 381Z"/>
<path class="b9" d="M753.6 508.6L754.6 495.8L745.2 496.8L742.6 510.5L739.7 512.7L743.6 512.1Z"/>
<path class="b9" d="M761 447.5L770.9 446.4L771.3 430.1L761.7 431.1Z"/>
<path class="b8" d="M297.3 562.7L291.6 562.6L301.6 577.4L308.2 578.4Z"/>
<path class="b8" d="M654.3 627.1L650.3 627.6L647.9 631.8Z"/>
<path class="b9" d="M675.6 294.1L658.9 293.3L662.9 299.9L678.7 299.4Z"/>
<path class="b9" d="M302.6 285.2L286 295.8L291.6 295.9L308.3 285Z"/>
<path class="b9" d="M693.7 298.8L678.7 299.4L681.2 305.8L697.9 309.3Z"/>
<path class="b9" d="M722.9 332.8L733.9 332L731.2 324L717.5 315.5L715.2 315.7L720.2 331.4Z"/>
<path class="b9" d="M235.9 463.3L235.9 463.2L236 463.4Z"/>
<path class="b9" d="M733.9 545L725 546L720.2 555.4Z"/>
<path class="b9" d="M467.5 283.4L469.4 282.3L452.9 278.6L458.6 281.8Z"/>
<path class="b8" d="M428.1 660.4L421.6 660L425.3 662.6Z"/>
<path class="b8" d="M681.2 605.2L686.2 594.7L684.3 594.9L670.2 606.5L668.7 611.3L675.8 610.4Z"/>
<path class="b8" d="M701.8 578.3L703 578.1L703.6 575.3Z"/>
<path class="b9" d="M761.7 431.1L771.3 430.1L771.1 413.7L760.8 414.8Z"/>
<path class="b9" d="M252.6 330.6L249.9 331.8L251.5 332.3Z"/>
<path class="b9" d="M413.9 269L397.3 267.5L402.9 271L419.6 272.3Z"/>
<path class="b9" d="M255.3 496.6L250.1 495.7L252.6 509.9L258.3 511.7Z"/>
<path class="b8" d="M391.9 639.3L386.3 642L387.9 643.3L398.3 644.1Z"/>
<path class="b8" d="M503.3 691.1L486.6 682.8L480.9 688.5L490.7 692.4L501.2 692.9Z"/>
<path class="b9" d="M358.3 268.5L341.6 272.6L347.3 274.4L364 270.3Z"/>
<path class="b8" d="M597.9 663.5L592.3 673.1L608.9 663.3L611 660L601.6 660.8Z"/>
<path class="b9" d="M714.6 314.3L697.9 309.3L700.9 316.4L715.2 315.7Z"/>
<path class="b9" d="M514.3 307.7L508.6 303L506 299L505.6 300Z"/>
<path class="b8" d="M296.1 562.2L289 561.3L291.6 562.6L297.3 562.7Z"/>
<path class="b8" d="M629.8 643.9L630.9 643.8L631.3 643.1Z"/>
<path class="b8" d="M336.3 598.7L330.6 600.2L340 610.4L348.5 611.3Z"/>
<path class="b8" d="M584.3 676.4L578.5 677.1L575.6 682.5Z"/>
<path class="b8" d="M372.3 627.7L367.2 627.3L369.6 629Z"/>
<path class="b8" d="M435 660.8L428.1 660.4L425.3 662.6L441.9 673.1L447.6 669.2Z"/>
<path class="b8" d="M503.3 691.1L501.2 692.9L510.3 693.1Z"/>
<path class="b9" d="M760.8 414.8L771.1 413.7L770.3 397.3L758.6 398.4L759.2 407Z"/>
<path class="b8" d="M541.6 693.4L523.2 693.5L519.9 699.8L536.6 703.7Z"/>
<path class="b9" d="M745.2 496.8L754.6 495.8L756.9 479.8L751.7 480.3Z"/>
<path class="b9" d="M291.6 295.9L286 295.8L281.6 299L286.1 300Z"/>
<path class="b9" d="M567.5 299.4L556.3 299.1L547.6 307L553.3 311.6L569.9 303.2Z"/>
<path class="b8" d="M248.6 480.4L243.8 479.5L250.1 495.7L255.3 496.6Z"/>
<path class="b9" d="M619.9 287.7L603.3 292.1L608.9 298.9L625.6 296Z"/>
<path class="b8" d="M736.9 529.9L737.4 528.7L727.1 529.8L725.9 531.1L725 546L733.9 545Z"/>
<path class="b8" d="M466 676.9L461.4 676.6L464.3 678.7Z"/>
<path class="b9" d="M736.9 343.5L733.9 332L722.9 332.8Z"/>
<path class="b8" d="M523.2 693.5L510.3 693.1L519.9 699.8Z"/>
<path class="b8" d="M664.6 619.2L668.7 611.3L664.4 611.6L653.6 619.7L650.3 627.6L654.3 627.1Z"/>
<path class="b8" d="M717.8 561.6L708.4 562.7L703.6 575.3Z"/>
<path class="b9" d="M505.6 300L506 299L491.9 295L497.6 298.4Z"/>
<path class="b8" d="M684.3 594.9L686.2 594.7L686.9 591.9Z"/>
<path class="b8" d="M282.1 546.2L276.2 545.2L289 561.3L296.1 562.2Z"/>
<path class="b8" d="M377.5 628.2L372.3 627.7L369.6 629L386.3 642L391.9 639.3Z"/>
<path class="b8" d="M601.6 660.8L611 660L614.6 654.1Z"/>
<path class="b9" d="M736.9 343.5L738.3 349.1L743 348.7Z"/>
<path class="b9" d="M452.9 278.6L436.3 275L441.9 278.9L458.6 281.8Z"/>
<path class="b9" d="M753.6 361L743 348.7L738.3 349.1L741.8 366L754.4 365Z"/>
<path class="b9" d="M286.1 300L281.6 299L269.3 310.6L275 310.4Z"/>
<path class="b8" d="M331.7 595.3L323.3 594.4L330.6 600.2L336.3 598.7Z"/>
<path class="b9" d="M574.2 299.8L567.5 299.4L569.9 303.2Z"/>
<path class="b8" d="M478.7 677.4L466 676.9L464.3 678.7L480.9 688.5L486.6 682.8Z"/>
<path class="b8" d="M558.9 689.9L542.3 692.6L541.6 693.4L556.5 692.8Z"/>
<path class="b9" d="M658.9 293.3L642.3 294L646.2 300.2L662.9 299.9Z"/>
<path class="b8" d="M727.1 529.8L737.4 528.7L739.7 512.7L733.4 513.4Z"/>
<path class="b9" d="M341.6 272.6L325 278L330.6 279.7L347.3 274.4Z"/>
<path class="b9" d="M751.7 480.3L756.9 479.8L759.1 463.8L758.8 463.9Z"/>
<path class="b9" d="M397.3 267.5L380.6 267.9L386.3 271.5L402.9 271Z"/>
<path class="b8" d="M592.3 673.1L597.9 663.5L581.3 672.6L578.5 677.1L584.3 676.4Z"/>
<path class="b8" d="M241.6 467.7L236 463.4L243.8 479.5L248.6 480.4Z"/>
<path class="b9" d="M236 365.8L236.7 365.3L236.1 365.2Z"/>
<path class="b9" d="M678.7 299.4L662.9 299.9L664.6 303.9L681.2 305.8Z"/>
<path class="b9" d="M586.6 296.7L574.2 299.8L589.9 300.1Z"/>
<path class="b8" d="M758.8 463.9L759.1 463.8L759.2 462.7Z"/>
<path class="b9" d="M275 310.4L269.3 310.6L264.4 315.7L269 316.6Z"/>
<path class="b9" d="M547.6 307L530.9 312.1L536.6 314.6L553.3 311.6Z"/>
<path class="b8" d="M430.9 658.4L414.3 647.2L408.6 651.5L421.6 660L428.1 660.4Z"/>
<path class="b8" d="M241.2 464.2L235.9 463.3L236 463.4L241.6 467.7Z"/>
<path class="b8" d="M280.6 534L275 534.4L276.2 545.2L282.1 546.2Z"/>
<path class="b8" d="M733.4 513.4L739.7 512.7L742.6 510.5Z"/>
<path class="b8" d="M636.9 631.5L631.3 643.1L647.9 631.8L650.3 627.6L641.2 628.4Z"/>
<path class="b9" d="M608.9 298.9L603.3 292.1L586.6 296.7L589.9 300.1L600.9 300.3Z"/>
<path class="b8" d="M761 447.5L759.8 447.6L759.2 462.7Z"/>
<path class="b9" d="M715.2 315.7L700.9 316.4L703.6 324.9L720.2 331.4Z"/>
<path class="b8" d="M319.6 580.9L314 582.5L323.3 594.4L331.7 595.3Z"/>
<path class="b8" d="M720.2 555.4L725 546L722.4 546.2L709.2 555.4L708.4 562.7L717.8 561.6Z"/>
<path class="b8" d="M664.4 611.6L668.7 611.3L670.2 606.5Z"/>
<path class="b8" d="M701.8 578.3L691.8 579.3L686.9 591.9Z"/>
<path class="b8" d="M238.5 447.9L233.4 447L235.9 463.3L241.2 464.2Z"/>
<path class="b9" d="M491.9 295L475.3 287.7L480.9 293.2L497.6 298.4Z"/>
<path class="b8" d="M276.9 529.9L269.5 529L275 534.4L280.6 534Z"/>
<path class="b9" d="M269 316.6L264.4 315.7L252.6 330.6L258.3 330.4Z"/>
<path class="b8" d="M761.7 431.1L760 431.3L759.8 447.6L761 447.5Z"/>
<path class="b9" d="M697.9 309.3L681.2 305.8L686.1 317L700.9 316.4Z"/>
<path class="b8" d="M629.8 643.9L619.1 645L614.6 654.1Z"/>
<path class="b8" d="M430.9 658.4L428.1 660.4L435 660.8Z"/>
<path class="b9" d="M330.6 279.7L325 278L311.6 283.2L319.4 284.1Z"/>
<path class="b9" d="M642.3 294L625.6 296L628.6 300.3L646.2 300.2Z"/>
<path class="b8" d="M760.8 414.8L759.7 414.9L760 431.3L761.7 431.1Z"/>
<path class="b9" d="M436.3 275L419.6 272.3L425.3 276.7L441.9 278.9Z"/>
<path class="b8" d="M236.4 431.6L231.4 430.7L233.4 447L238.5 447.9Z"/>
<path class="b9" d="M720.2 331.4L720.7 332.9L722.9 332.8Z"/>
<path class="b9" d="M756.9 398.5L758.6 398.4L756.7 381.7L749.3 382.3Z"/>
<path class="b8" d="M298.8 562.5L296.1 562.2L297.3 562.7Z"/>
<path class="b8" d="M759.2 407L759.7 414.9L760.8 414.8Z"/>
<path class="b8" d="M542.3 692.6L525.6 690.6L523.2 693.5L541.6 693.4Z"/>
<path class="b8" d="M745.2 496.8L743.4 497L742.6 510.5Z"/>
<path class="b8" d="M525.6 690.6L508.9 683.8L503.3 691.1L510.3 693.1L523.2 693.5Z"/>
<path class="b9" d="M258.3 330.4L252.6 330.6L251.5 332.3L256.4 333.2Z"/>
<path class="b8" d="M759.2 407L758.6 398.4L756.9 398.5Z"/>
<path class="b8" d="M358 612.1L348.5 611.3L353 614.7Z"/>
<path class="b8" d="M469.9 673.3L453.3 663.2L447.6 669.2L461.4 676.6L466 676.9Z"/>
<path class="b9" d="M380.6 267.9L364 270.3L369.6 273.8L386.3 271.5Z"/>
<path class="b9" d="M749.3 382.3L756.7 381.7L754.4 365L741.8 366L742.6 371.3Z"/>
<path class="b9" d="M736.9 343.5L722.9 332.8L720.7 332.9L725 350L738.3 349.1Z"/>
<path class="b8" d="M564.6 678.5L558.9 689.9L575.6 682.5L578.5 677.1L565.6 677.8Z"/>
<path class="b8" d="M317 579.2L308.2 578.4L314 582.5L319.6 580.9Z"/>
<path class="b8" d="M375.3 626.1L359.1 612.2L358 612.1L353 614.7L367.2 627.3L372.3 627.7Z"/>
<path class="b8" d="M271.2 513.7L263.1 512.8L269.5 529L276.9 529.9Z"/>
<path class="b8" d="M256.4 333.2L251.5 332.3L243.4 348.8L248.1 349.7Z"/>
<path class="b9" d="M458.6 281.8L461.9 284.1L467.5 283.4Z"/>
<path class="b8" d="M641.2 628.4L650.3 627.6L653.6 619.7Z"/>
<path class="b8" d="M235.4 415.3L230.4 414.3L231.4 430.7L236.4 431.6Z"/>
<path class="b8" d="M236.1 365.2L236.7 365.3L241.6 364.5L248.1 349.7L243.4 348.8Z"/>
<path class="b8" d="M411.1 644.9L398.3 644.1L408.6 651.5L414.3 647.2Z"/>
<path class="b8" d="M375.3 626.1L372.3 627.7L377.5 628.2Z"/>
<path class="b8" d="M469.9 673.3L466 676.9L478.7 677.4Z"/>
<path class="b8" d="M751.7 480.3L745.1 480.9L743.4 497L745.2 496.8Z"/>
<path class="b9" d="M319.4 284.1L311.6 283.2L308.3 285L314 287Z"/>
<path class="b8" d="M684.3 594.9L674.7 595.9L670.2 606.5Z"/>
<path class="b8" d="M601.6 660.8L599.2 661.1L597.9 663.5Z"/>
<path class="b8" d="M703.6 575.3L708.4 562.7L705.9 562.9L692.6 574.5L691.8 579.3L701.8 578.3Z"/>
<path class="b8" d="M722.4 546.2L725 546L725.9 531.1Z"/>
<path class="b8" d="M241.1 366.2L236.7 365.3L236 365.8L232.8 381.6L237.7 382.6Z"/>
<path class="b9" d="M530.9 312.1L514.3 307.7L519.9 312.2L536.6 314.6Z"/>
<path class="b9" d="M662.9 299.9L646.2 300.2L647.9 304.2L664.6 303.9Z"/>
<path class="b8" d="M235.8 399L230.9 398L230.4 414.3L235.4 415.3Z"/>
<path class="b9" d="M625.6 296L608.9 298.9L610 300.3L628.6 300.3Z"/>
<path class="b8" d="M631.3 643.1L636.9 631.5L620.3 642.2L619.1 645L629.8 643.9Z"/>
<path class="b9" d="M589.9 300.1L574.2 299.8L569.9 303.2L575.6 311.4L592.3 304.5Z"/>
<path class="b8" d="M237.7 382.6L232.8 381.6L230.9 398L235.8 399Z"/>
<path class="b8" d="M727.1 529.8L726.1 529.9L725.9 531.1Z"/>
<path class="b8" d="M264 511.7L258.3 511.7L263.1 512.8L271.2 513.7Z"/>
<path class="b8" d="M303.9 563.1L298.8 562.5L297.3 562.7L308.2 578.4L317 579.2Z"/>
<path class="b8" d="M758.8 463.9L746.8 464.9L745.1 480.9L751.7 480.3Z"/>
<path class="b8" d="M733.4 513.4L727.3 513.7L726.1 529.9L727.1 529.8Z"/>
<path class="b9" d="M467.5 283.4L461.9 284.1L464.3 287L480.9 293.2L475.3 287.7Z"/>
<path class="b9" d="M608.9 298.9L600.9 300.3L610 300.3Z"/>
<path class="b9" d="M600.9 300.3L589.9 300.1L592.3 304.5Z"/>
<path class="b8" d="M397.6 635L391.9 639.3L398.3 644.1L411.1 644.9Z"/>
<path class="b8" d="M759.2 462.7L759.8 447.6L747.7 448.7L746.8 464.9L758.8 463.9Z"/>
<path class="b8" d="M490 677.8L478.7 677.4L486.6 682.8Z"/>
<path class="b8" d="M565.6 677.8L578.5 677.1L581.3 672.6Z"/>
<path class="b8" d="M308.3 285L291.6 295.9L297.3 297.7L314 287Z"/>
<path class="b8" d="M720.2 331.4L703.6 324.9L706.4 333.6L720.7 332.9Z"/>
<path class="b8" d="M564.6 678.5L547.9 682.8L542.3 692.6L558.9 689.9Z"/>
<path class="b9" d="M419.6 272.3L402.9 271L408.6 275.7L425.3 276.7Z"/>
<path class="b8" d="M497.6 298.4L500.8 300.7L505.6 300Z"/>
<path class="b8" d="M261.4 497.5L255.3 496.6L258.3 511.7L264 511.7Z"/>
<path class="b8" d="M364 270.3L347.3 274.4L353 277.6L369.6 273.8Z"/>
<path class="b8" d="M664.4 611.6L657 612.4L653.6 619.7Z"/>
<path class="b8" d="M451 661.5L435 660.8L447.6 669.2L453.3 663.2Z"/>
<path class="b8" d="M500.3 678L490 677.8L486.6 682.8L503.3 691.1L508.9 683.8Z"/>
<path class="b8" d="M700.9 316.4L686.1 317L686.9 319.5L703.6 324.9Z"/>
<path class="b8" d="M686.9 591.9L691.8 579.3L689 579.5L675.9 590.4L674.7 595.9L684.3 594.9Z"/>
<path class="b8" d="M705.9 562.9L708.4 562.7L709.2 555.4Z"/>
<path class="b8" d="M241.6 364.5L236.7 365.3L241.1 366.2Z"/>
<path class="b8" d="M341.3 596L331.7 595.3L336.3 598.7Z"/>
<path class="b8" d="M646.2 300.2L628.6 300.3L631.3 306.4L647.9 304.2Z"/>
<path class="b8" d="M759.2 407L756.9 398.5L745.8 399.4L747.1 415.9L759.7 414.9Z"/>
<path class="b8" d="M614.6 654.1L619.1 645L614.2 645.3L603.6 652.1L599.2 661.1L601.6 660.8Z"/>
<path class="b8" d="M569.9 303.2L553.3 311.6L558.9 316.1L575.6 311.4Z"/>
<path class="b8" d="M742.6 371.3L741.8 366L738.6 366.2Z"/>
<path class="b8" d="M738.6 366.2L741.8 366L738.3 349.1L725 350L725.9 354.6Z"/>
<path class="b8" d="M297.3 297.7L291.6 295.9L286.1 300L292.9 300.9Z"/>
<path class="b8" d="M675.5 317.3L686.1 317L681.2 305.8L664.6 303.9L670.2 316.8Z"/>
<path class="b8" d="M599.2 661.1L586.1 662L581.3 672.6L597.9 663.5Z"/>
<path class="b8" d="M255.1 481.3L248.6 480.4L255.3 496.6L261.4 497.5Z"/>
<path class="b8" d="M742.6 371.3L744.1 382.7L749.3 382.3Z"/>
<path class="b8" d="M303 559.8L288.7 547.1L282.1 546.2L296.1 562.2L298.8 562.5Z"/>
<path class="b8" d="M749.3 382.3L744.1 382.7L745.8 399.4L756.9 398.5Z"/>
<path class="b8" d="M505.6 300L500.8 300.7L503.3 304.4L519.9 312.2L514.3 307.7Z"/>
<path class="b8" d="M358.6 611.6L342.3 596.1L341.3 596L336.3 598.7L348.5 611.3L358 612.1Z"/>
<path class="b8" d="M389.5 629L377.5 628.2L391.9 639.3L397.6 635Z"/>
<path class="b8" d="M436.6 652.9L430.9 658.4L435 660.8L451 661.5Z"/>
<path class="b8" d="M742.6 510.5L743.4 497L732.5 498.1L731.6 505L727.3 513.7L733.4 513.4Z"/>
<path class="b8" d="M760 431.3L747.8 432.3L747.7 448.7L759.8 447.6Z"/>
<path class="b8" d="M641.2 628.4L638.4 628.7L636.9 631.5Z"/>
<path class="b8" d="M759.7 414.9L747.1 415.9L747.8 432.3L760 431.3Z"/>
<path class="b8" d="M457.8 284.6L461.9 284.1L458.6 281.8L441.9 278.9L447.6 283.3Z"/>
<path class="b8" d="M292.9 300.9L286.1 300L275 310.4L280.6 312.4Z"/>
<path class="b8" d="M628.6 300.3L610 300.3L614.6 310L631.3 306.4Z"/>
<path class="b8" d="M358.6 611.6L358 612.1L359.1 612.2Z"/>
<path class="b8" d="M722.4 546.2L713.9 547.2L709.2 555.4Z"/>
<path class="b8" d="M670.2 606.5L674.7 595.9L670.1 596.2L659.2 604.4L657 612.4L664.4 611.6Z"/>
<path class="b8" d="M303 559.8L298.8 562.5L303.9 563.1Z"/>
<path class="b8" d="M547.9 682.8L531.3 679.2L525.6 690.6L542.3 692.6Z"/>
<path class="b8" d="M402.9 271L386.3 271.5L391.9 276.3L408.6 275.7Z"/>
<path class="b8" d="M322.3 579.6L317 579.2L319.6 580.9Z"/>
<path class="b8" d="M347.3 274.4L330.6 279.7L336.3 282.6L353 277.6Z"/>
<path class="b8" d="M689 579.5L691.8 579.3L692.6 574.5Z"/>
<path class="b8" d="M416.3 645.2L411.1 644.9L414.3 647.2Z"/>
<path class="b8" d="M565.6 677.8L564.9 677.9L564.6 678.5Z"/>
<path class="b8" d="M725.9 531.1L726.1 529.9L714.9 531.1L713.9 547.2L722.4 546.2Z"/>
<path class="b8" d="M247.3 465.3L241.6 467.7L248.6 480.4L255.1 481.3Z"/>
<path class="b8" d="M610 300.3L600.9 300.3L592.3 304.5L597.9 314.1L614.6 310Z"/>
<path class="b8" d="M380.9 621.5L375.3 626.1L377.5 628.2L389.5 629Z"/>
<path class="b8" d="M686.9 319.5L686.1 317L675.5 317.3Z"/>
<path class="b8" d="M492.3 675L475.6 665.8L469.9 673.3L478.7 677.4L490 677.8Z"/>
<path class="b8" d="M664.6 303.9L647.9 304.2L653.6 316.6L670.2 316.8Z"/>
<path class="b8" d="M614.2 645.3L619.1 645L620.3 642.2Z"/>
<path class="b8" d="M280.6 312.4L275 310.4L269 316.6L275.7 317.6Z"/>
<path class="b8" d="M720.2 350.2L725 350L720.7 332.9L706.4 333.6L709.2 344.7Z"/>
<path class="b8" d="M732.5 498.1L743.4 497L745.1 480.9L737.3 481.6Z"/>
<path class="b8" d="M247.3 465.1L241.2 464.2L241.6 467.7L247.3 465.3Z"/>
<path class="b8" d="M286.3 532.1L280.6 534L282.1 546.2L288.7 547.1Z"/>
<path class="b8" d="M426.2 645.7L416.3 645.2L414.3 647.2L430.9 658.4L436.6 652.9Z"/>
<path class="b8" d="M464.3 287L461.9 284.1L457.8 284.6Z"/>
<path class="b8" d="M703.6 324.9L686.9 319.5L691.7 334.2L706.4 333.6Z"/>
<path class="b8" d="M492.3 675L490 677.8L500.3 678Z"/>
<path class="b8" d="M342 595.5L326.9 580.1L322.3 579.6L319.6 580.9L331.7 595.3L341.3 596Z"/>
<path class="b8" d="M499 301.2L500.8 300.7L497.6 298.4L480.9 293.2L486.6 298.6Z"/>
<path class="b8" d="M454.5 661.7L451 661.5L453.3 663.2Z"/>
<path class="b8" d="M244.7 448.8L238.5 447.9L241.2 464.2L247.3 465.1Z"/>
<path class="b8" d="M653.6 619.7L657 612.4L648 613L642.6 616.7L638.4 628.7L641.2 628.4Z"/>
<path class="b8" d="M285.5 530.8L276.9 529.9L280.6 534L286.3 532.1Z"/>
<path class="b8" d="M558.9 316.1L553.3 311.6L536.6 314.6L541.7 317.7L543.8 317.7Z"/>
<path class="b8" d="M725.9 354.6L725 350L720.2 350.2Z"/>
<path class="b8" d="M705.9 562.9L696.9 563.8L692.6 574.5Z"/>
<path class="b8" d="M725.9 354.6L728.1 366.8L738.6 366.2Z"/>
<path class="b8" d="M275.7 317.6L269 316.6L258.3 330.4L264 332.5Z"/>
<path class="b8" d="M336.3 282.6L330.6 279.7L319.4 284.1L330.7 284.9Z"/>
<path class="b7" d="M511.9 678.3L500.3 678L508.9 683.8Z"/>
<path class="b8" d="M742.6 371.3L738.6 366.2L728.1 366.8L730.9 383.6L744.1 382.7Z"/>
<path class="b8" d="M670.1 596.2L674.7 595.9L675.9 590.4Z"/>
<path class="b8" d="M564.9 677.9L549.8 678.4L547.9 682.8L564.6 678.5Z"/>
<path class="b8" d="M638.4 628.7L625.3 629.6L620.3 642.2L636.9 631.5Z"/>
<path class="b8" d="M370.3 613L359.1 612.2L375.3 626.1L380.9 621.5Z"/>
<path class="b8" d="M441.9 278.9L425.3 276.7L430.9 281.7L447.6 283.3Z"/>
<path class="b8" d="M737.3 481.6L745.1 480.9L746.8 464.9L742.6 465.2Z"/>
<path class="b8" d="M242.7 432.5L236.4 431.6L238.5 447.9L244.7 448.8Z"/>
<path class="b7" d="M530.2 678.5L511.9 678.3L508.9 683.8L525.6 690.6L531.3 679.2Z"/>
<path class="b8" d="M241.6 364.5L241.1 366.2L246.6 367Z"/>
<path class="b8" d="M281.5 514.6L271.2 513.7L276.9 529.9L285.5 530.8Z"/>
<path class="b8" d="M386.3 271.5L369.6 273.8L375.3 278.5L391.9 276.3Z"/>
<path class="b8" d="M264 332.5L258.3 330.4L256.4 333.2L262.8 334.1Z"/>
<path class="b8" d="M603.6 652.1L586.9 660.1L586.1 662L599.2 661.1Z"/>
<path class="b7" d="M470.4 662.2L454.5 661.7L453.3 663.2L469.9 673.3L475.6 665.8Z"/>
<path class="b8" d="M670.2 316.8L670.5 317.5L675.5 317.3Z"/>
<path class="b8" d="M342 595.5L341.3 596L342.3 596.1Z"/>
<path class="b7" d="M581.3 672.6L586.1 662L579.5 662.3L570.3 667.1L564.9 677.9L565.6 677.8Z"/>
<path class="b8" d="M330.7 284.9L319.4 284.1L314 287L319.6 291.1Z"/>
<path class="b8" d="M262.8 334.1L256.4 333.2L248.1 349.7L254.7 350.6Z"/>
<path class="b8" d="M503.3 304.4L500.8 300.7L499 301.2Z"/>
<path class="b8" d="M727.3 513.7L718.2 514.7L714.9 531.1L714.9 531.1L726.1 529.9Z"/>
<path class="b8" d="M241.8 416.2L235.4 415.3L236.4 431.6L242.7 432.5Z"/>
<path class="b8" d="M647.9 304.2L631.3 306.4L636.9 317.6L653.6 316.6Z"/>
<path class="b8" d="M742.6 465.2L746.8 464.9L747.7 448.7L746 448.8Z"/>
<path class="b8" d="M592.3 304.5L575.6 311.4L581.3 317.9L597.9 314.1Z"/>
<path class="b8" d="M718.2 514.7L727.3 513.7L731.6 505Z"/>
<path class="b8" d="M325.3 576.9L312.1 564L303.9 563.1L317 579.2L322.3 579.6Z"/>
<path class="b8" d="M242.2 399.9L235.8 399L235.4 415.3L241.8 416.2Z"/>
<path class="b8" d="M689 579.5L679.9 580.4L675.9 590.4Z"/>
<path class="b7" d="M364.3 606.5L358.6 611.6L359.1 612.2L370.3 613Z"/>
<path class="b8" d="M540.7 317.8L541.7 317.7L536.6 314.6L519.9 312.2L525.6 316.7Z"/>
<path class="b8" d="M269.6 509L264 511.7L271.2 513.7L281.5 514.6Z"/>
<path class="b8" d="M746 448.8L747.7 448.7L747.8 432.3L746.2 432.5Z"/>
<path class="b8" d="M244.1 383.5L237.7 382.6L235.8 399L242.2 399.9Z"/>
<path class="b8" d="M648 613L657 612.4L659.2 604.4Z"/>
<path class="b8" d="M709.2 555.4L713.9 547.2L706.9 547.6L698.2 550.8L696.9 563.8L705.9 562.9Z"/>
<path class="b7" d="M614.2 645.3L606.4 645.9L603.6 652.1Z"/>
<path class="b8" d="M480.9 293.2L464.3 287L469.9 294.6L486.6 298.6Z"/>
<path class="b8" d="M254.7 350.6L248.1 349.7L241.6 364.5L246.6 367L247.4 367.1Z"/>
<path class="b8" d="M746.2 432.5L747.8 432.3L747.1 415.9L743.1 416.2Z"/>
<path class="b8" d="M743.1 416.2L747.1 415.9L745.8 399.4L737.3 400Z"/>
<path class="b8" d="M709.2 344.7L710.7 350.7L720.2 350.2Z"/>
<path class="b8" d="M670.2 316.8L653.6 316.6L654.1 317.8L670.5 317.5Z"/>
<path class="b8" d="M247.3 367.6L246.6 367L241.1 366.2L237.7 382.6L244.1 383.5Z"/>
<path class="b7" d="M402.6 629.6L389.5 629L397.6 635Z"/>
<path class="b7" d="M549.8 678.4L531.6 678.5L531.3 679.2L547.9 682.8Z"/>
<path class="b7" d="M419.9 641.3L404.4 629.7L402.6 629.6L397.6 635L411.1 644.9L416.3 645.2Z"/>
<path class="b7" d="M419.9 641.3L416.3 645.2L426.2 645.7Z"/>
<path class="b8" d="M314 287L297.3 297.7L303 301.1L319.6 291.1Z"/>
<path class="b8" d="M558.9 316.1L543.8 317.7L560.5 317.7Z"/>
<path class="b8" d="M706.4 333.6L691.7 334.2L692.6 337.9L709.2 344.7Z"/>
<path class="b8" d="M425.3 276.7L408.6 275.7L414.3 281.2L430.9 281.7Z"/>
<path class="b7" d="M325.3 576.9L322.3 579.6L326.9 580.1Z"/>
<path class="b8" d="M247.4 465.2L247.3 465.1L247.3 465.3Z"/>
<path class="b8" d="M447.6 283.3L449.6 285.1L457.8 284.6Z"/>
<path class="b8" d="M732.5 498.1L731.8 498.1L731.6 505Z"/>
<path class="b8" d="M369.6 273.8L353 277.6L358.6 282.1L375.3 278.5Z"/>
<path class="b8" d="M268.2 498.5L261.4 497.5L264 511.7L269.6 509Z"/>
<path class="b8" d="M737.3 400L745.8 399.4L744.1 382.7L730.9 383.6L731.6 389.5Z"/>
<path class="b8" d="M725.9 354.6L720.2 350.2L710.7 350.7L714.2 367.6L728.1 366.8Z"/>
<path class="b8" d="M681.2 334.6L691.7 334.2L686.9 319.5L675.5 317.3L670.5 317.5L675.9 333.8Z"/>
<path class="b8" d="M581.3 317.9L575.6 311.4L558.9 316.1L560.5 317.7L580.2 318.1Z"/>
<path class="b7" d="M353 597L342.3 596.1L358.6 611.6L364.3 606.5Z"/>
<path class="b7" d="M531.6 678.5L530.2 678.5L531.3 679.2Z"/>
<path class="b8" d="M737.3 481.6L732.8 482L731.8 498.1L732.5 498.1Z"/>
<path class="b7" d="M308.6 554.5L303 559.8L303.9 563.1L312.1 564Z"/>
<path class="b7" d="M514.6 673.9L497.9 665.4L492.3 675L500.3 678L511.9 678.3Z"/>
<path class="b8" d="M543.8 317.7L541.7 317.7L542.3 318.5Z"/>
<path class="b7" d="M670.1 596.2L662.4 597L659.2 604.4Z"/>
<path class="b7" d="M579.5 662.3L586.1 662L586.9 660.1Z"/>
<path class="b8" d="M542.3 318.5L541.7 317.7L540.7 317.8Z"/>
<path class="b7" d="M514.6 673.9L511.9 678.3L530.2 678.5Z"/>
<path class="b7" d="M692.6 574.5L696.9 563.8L689.4 564.2L681.6 569.2L679.9 580.4L689 579.5Z"/>
<path class="b7" d="M458.9 656L454.5 661.7L470.4 662.2Z"/>
<path class="b8" d="M303 301.1L297.3 297.7L292.9 300.9L302 301.8Z"/>
<path class="b7" d="M570.3 667.1L553.6 670.3L549.8 678.4L564.9 677.9Z"/>
<path class="b8" d="M263 482.2L255.1 481.3L261.4 497.5L268.2 498.5Z"/>
<path class="b8" d="M519.9 312.2L503.3 304.4L508.9 312.7L525.6 316.7Z"/>
<path class="b8" d="M636.9 317.6L631.3 306.4L614.6 310L619.3 318.2L631 318.2Z"/>
<path class="b7" d="M642.6 616.7L625.9 627.6L625.3 629.6L638.4 628.7Z"/>
<path class="b8" d="M742.6 465.2L733.7 465.8L732.8 482L737.3 481.6Z"/>
<path class="b7" d="M458.9 656L444.4 646.4L441.5 646.3L436.6 652.9L451 661.5L454.5 661.7Z"/>
<path class="b8" d="M706.9 547.6L713.9 547.2L714.9 531.1L714.9 531.1Z"/>
<path class="b7" d="M620.3 642.2L625.3 629.6L621.8 629.8L609.3 637.7L606.4 645.9L614.2 645.3Z"/>
<path class="b8" d="M714.9 531.1L714.9 531.1L714.9 531.1Z"/>
<path class="b7" d="M441.5 646.3L426.2 645.7L436.6 652.9Z"/>
<path class="b8" d="M457.8 284.6L449.6 285.1L453.3 290.8L469.9 294.6L464.3 287Z"/>
<path class="b7" d="M347.6 589.8L342 595.5L342.3 596.1L353 597Z"/>
<path class="b8" d="M746 448.8L734.3 449.5L733.7 465.8L742.6 465.2Z"/>
<path class="b8" d="M336.3 282.6L330.7 284.9L340 285.4Z"/>
<path class="b7" d="M296.6 548L288.7 547.1L303 559.8L308.6 554.5Z"/>
<path class="b8" d="M614.6 310L597.9 314.1L600.4 318.2L619.3 318.2Z"/>
<path class="b8" d="M718.2 514.7L715.3 514.8L714.9 531.1Z"/>
<path class="b8" d="M256.4 466L247.4 465.2L247.3 465.3L255.1 481.3L263 482.2Z"/>
<path class="b8" d="M731.6 505L731.8 498.1L717.5 498.8L715.3 514.8L718.2 514.7Z"/>
<path class="b7" d="M477.7 662.5L470.4 662.2L475.6 665.8Z"/>
<path class="b8" d="M302 301.8L292.9 300.9L280.6 312.4L286.3 316.4Z"/>
<path class="b8" d="M653.6 316.6L636.9 317.6L637.2 318.1L654.1 317.8Z"/>
<path class="b7" d="M648 613L644.2 613.4L642.6 616.7Z"/>
<path class="b7" d="M606.4 645.9L592.2 646.6L586.9 660.1L603.6 652.1Z"/>
<path class="b8" d="M486.6 298.6L489.9 302L499 301.2Z"/>
<path class="b8" d="M746.2 432.5L734.3 433.2L734.3 449.5L746 448.8Z"/>
<path class="b8" d="M709.2 344.7L692.6 337.9L695.9 351.3L710.7 350.7Z"/>
<path class="b8" d="M408.6 275.7L391.9 276.3L397.6 281.9L414.3 281.2Z"/>
<path class="b8" d="M247.4 367.1L246.6 367L247.3 367.6Z"/>
<path class="b8" d="M264 332.5L262.8 334.1L266.7 334.6Z"/>
<path class="b8" d="M692.6 337.9L691.7 334.2L681.2 334.6Z"/>
<path class="b8" d="M743.1 416.2L733.7 416.7L734.3 433.2L746.2 432.5Z"/>
<path class="b7" d="M403.3 628.8L386.6 615.1L380.9 621.5L389.5 629L402.6 629.6Z"/>
<path class="b7" d="M291.9 531.7L285.5 530.8L286.3 532.1Z"/>
<path class="b8" d="M358.6 282.1L353 277.6L336.3 282.6L340 285.4L346.4 285.6Z"/>
<path class="b7" d="M675.9 590.4L679.9 580.4L670.6 580.9L664.9 584.7L662.4 597L670.1 596.2Z"/>
<path class="b8" d="M597.9 314.1L581.3 317.9L581.4 318.1L600.4 318.2Z"/>
<path class="b8" d="M447.6 283.3L430.9 281.7L435.1 285.8L449.6 285.1Z"/>
<path class="b7" d="M494.2 662.8L477.7 662.5L475.6 665.8L492.3 675L497.9 665.4Z"/>
<path class="b8" d="M737.3 400L732.6 400.2L733.7 416.7L743.1 416.2Z"/>
<path class="b8" d="M670.5 317.5L654.1 317.8L659.2 332.9L675.9 333.8Z"/>
<path class="b8" d="M560.5 317.7L543.8 317.7L542.3 318.5L547.9 328.8L564.6 325.8Z"/>
<path class="b8" d="M580.2 318.1L560.5 317.7L564.6 325.8Z"/>
<path class="b7" d="M689.4 564.2L696.9 563.8L698.2 550.8Z"/>
<path class="b8" d="M286.3 316.4L280.6 312.4L275.7 317.6L284.3 318.4Z"/>
<path class="b8" d="M731.6 389.5L732.6 400.2L737.3 400Z"/>
<path class="b7" d="M253 457.9L252 449.8L244.7 448.8L247.3 465.1L247.4 465.2Z"/>
<path class="b7" d="M337.2 580.9L326.9 580.1L342 595.5L347.6 589.8Z"/>
<path class="b8" d="M731.6 389.5L730.9 383.6L727.5 383.8Z"/>
<path class="b8" d="M525.6 316.7L527.2 318.3L540.7 317.8Z"/>
<path class="b8" d="M581.3 317.9L580.2 318.1L581.4 318.1Z"/>
<path class="b7" d="M579.5 662.3L572.1 662.7L570.3 667.1Z"/>
<path class="b8" d="M636.9 317.6L631 318.2L637.2 318.1Z"/>
<path class="b8" d="M727.5 383.8L730.9 383.6L728.1 366.8L714.2 367.6L714.9 371.9Z"/>
<path class="b7" d="M553.6 670.3L536.9 667.7L531.6 678.5L549.8 678.4Z"/>
<path class="b8" d="M499 301.2L489.9 302L492.3 306.4L508.9 312.7L503.3 304.4Z"/>
<path class="b7" d="M621.8 629.8L625.3 629.6L625.9 627.6Z"/>
<path class="b7" d="M403.3 628.8L402.6 629.6L404.4 629.7Z"/>
<path class="b8" d="M284.3 318.4L275.7 317.6L264 332.5L266.7 334.6L271.5 335Z"/>
<path class="b7" d="M384.7 613.8L370.3 613L380.9 621.5L386.6 615.1Z"/>
<path class="b7" d="M706.9 547.6L700.9 548.2L698.2 550.8Z"/>
<path class="b7" d="M292 531.7L291.9 531.7L286.3 532.1L288.7 547.1L296.6 548Z"/>
<path class="b7" d="M732.8 482L720.3 483L717.5 498.8L731.8 498.1Z"/>
<path class="b8" d="M631 318.2L619.3 318.2L620.3 320.9Z"/>
<path class="b7" d="M659.2 604.4L662.4 597L648.7 597.7L648.2 598L644.2 613.4L648 613Z"/>
<path class="b7" d="M442.3 645L425.6 633.5L419.9 641.3L426.2 645.7L441.5 646.3Z"/>
<path class="b7" d="M250.2 433.5L242.7 432.5L244.7 448.8L252 449.8Z"/>
<path class="b7" d="M253 457.9L247.4 465.2L256.4 466Z"/>
<path class="b7" d="M331 570.5L325.3 576.9L326.9 580.1L337.2 580.9Z"/>
<path class="b8" d="M675.9 333.8L676.2 334.8L681.2 334.6Z"/>
<path class="b8" d="M391.9 276.3L375.3 278.5L380.9 284L397.6 281.9Z"/>
<path class="b8" d="M340 285.4L330.7 284.9L319.6 291.1L325.3 296.6L342 287.6Z"/>
<path class="b8" d="M303 301.1L302 301.8L304 301.9Z"/>
<path class="b7" d="M644.2 613.4L630.7 614.2L625.9 627.6L642.6 616.7Z"/>
<path class="b7" d="M670.6 580.9L679.9 580.4L681.6 569.2Z"/>
<path class="b8" d="M269.6 338.2L266.7 334.6L262.8 334.1L254.7 350.6L263.1 351.5Z"/>
<path class="b7" d="M292 531.7L289.9 515.4L281.5 514.6L285.5 530.8L291.9 531.7Z"/>
<path class="b8" d="M540.7 317.8L527.2 318.3L531.3 326.4L547.9 328.8L542.3 318.5Z"/>
<path class="b7" d="M536.9 667.7L527.7 663.2L519.5 663.2L514.6 673.9L530.2 678.5L531.6 678.5Z"/>
<path class="b7" d="M249.4 417.1L241.8 416.2L242.7 432.5L250.2 433.5Z"/>
<path class="b8" d="M619.3 318.2L600.4 318.2L603.6 326L620.3 320.9Z"/>
<path class="b7" d="M714.9 531.1L703.4 532.3L700.9 548.2L706.9 547.6Z"/>
<path class="b8" d="M654.1 317.8L637.2 318.1L642.6 333.4L659.2 332.9Z"/>
<path class="b7" d="M369.9 599.8L364.3 606.5L370.3 613L384.7 613.8Z"/>
<path class="b8" d="M692.6 337.9L681.2 334.6L676.2 334.8L680.7 351.8L695.9 351.3Z"/>
<path class="b7" d="M572.1 662.7L556.4 663.2L553.6 670.3L570.3 667.1Z"/>
<path class="b8" d="M709.7 367.8L714.2 367.6L710.7 350.7L695.9 351.3L698.2 362.4Z"/>
<path class="b7" d="M263.1 351.5L254.7 350.6L247.4 367.1L256.3 368Z"/>
<path class="b7" d="M249.9 400.8L242.2 399.9L241.8 416.2L249.4 417.1Z"/>
<path class="b8" d="M731.6 389.5L727.5 383.8L716.6 384.3L718.5 401L732.6 400.2Z"/>
<path class="b7" d="M274.6 499.3L268.2 498.5L269.6 509Z"/>
<path class="b7" d="M442.3 645L441.5 646.3L444.4 646.4Z"/>
<path class="b7" d="M586.9 660.1L592.2 646.6L587.4 646.8L575.9 652L572.1 662.7L579.5 662.3Z"/>
<path class="b7" d="M322.5 564.9L312.1 564L325.3 576.9L331 570.5Z"/>
<path class="b8" d="M714.9 371.9L716.6 384.3L727.5 383.8Z"/>
<path class="b7" d="M481.3 656.6L477.7 662.5L494.2 662.8Z"/>
<path class="b7" d="M251.7 384.4L244.1 383.5L242.2 399.9L249.9 400.8Z"/>
<path class="b7" d="M256.3 368L247.4 367.1L247.3 367.6L253 379Z"/>
<path class="b7" d="M609.3 637.7L592.6 645.3L592.2 646.6L606.4 645.9Z"/>
<path class="b8" d="M346.4 285.6L340 285.4L342 287.6Z"/>
<path class="b7" d="M253 379L247.3 367.6L244.1 383.5L251.7 384.4Z"/>
<path class="b8" d="M714.9 371.9L714.2 367.6L709.7 367.8Z"/>
<path class="b7" d="M421.3 630.5L404.4 629.7L419.9 641.3L425.6 633.5Z"/>
<path class="b8" d="M430.9 281.7L414.3 281.2L419.1 286.2L435.1 285.8Z"/>
<path class="b8" d="M600.4 318.2L581.4 318.1L586.9 330.8L603.6 326Z"/>
<path class="b7" d="M689.4 564.2L684.3 564.8L681.6 569.2Z"/>
<path class="b7" d="M519.5 663.2L499.2 663L497.9 665.4L514.6 673.9Z"/>
<path class="b8" d="M449.6 285.1L435.1 285.8L436.6 288.3L453.3 290.8Z"/>
<path class="b7" d="M499.2 663L494.2 662.8L497.9 665.4Z"/>
<path class="b7" d="M481.3 656.6L466.1 647L464.2 647L458.9 656L470.4 662.2L477.7 662.5Z"/>
<path class="b8" d="M325.3 296.6L319.6 291.1L303 301.1L304 301.9L315.3 302.6Z"/>
<path class="b8" d="M675.9 333.8L659.2 332.9L660 335.2L676.2 334.8Z"/>
<path class="b8" d="M483.6 302.5L489.9 302L486.6 298.6L469.9 294.6L475.6 301.4Z"/>
<path class="b7" d="M714.9 531.1L715.3 514.8L704.1 516L703.9 520.5L703.4 532.3L714.9 531.1Z"/>
<path class="b7" d="M464.2 647L444.4 646.4L458.9 656Z"/>
<path class="b7" d="M276.3 499.4L274.6 499.3L269.6 509L281.5 514.6L289.9 515.4Z"/>
<path class="b7" d="M621.8 629.8L612.2 630.5L609.3 637.7Z"/>
<path class="b8" d="M581.4 318.1L580.2 318.1L564.6 325.8L570.3 334.3L586.9 330.8Z"/>
<path class="b7" d="M648.7 597.7L662.4 597L664.9 584.7Z"/>
<path class="b8" d="M637.2 318.1L631 318.2L620.3 320.9L625.9 335L642.6 333.4Z"/>
<path class="b7" d="M271.5 335L266.7 334.6L269.6 338.2Z"/>
<path class="b7" d="M367 597.8L353 597L364.3 606.5L369.9 599.8Z"/>
<path class="b8" d="M358.6 282.1L346.4 285.6L362.9 286.1Z"/>
<path class="b7" d="M733.7 465.8L722.8 466.6L720.6 481.3L720.3 483L732.8 482Z"/>
<path class="b7" d="M698.2 550.8L700.9 548.2L687 548.9L684.3 564.8L689.4 564.2Z"/>
<path class="b7" d="M722.8 466.6L733.7 465.8L734.3 449.5L724.1 450.3Z"/>
<path class="b7" d="M314.3 549.2L308.6 554.5L312.1 564L322.5 564.9Z"/>
<path class="b7" d="M292 531.7L291.9 531.7L292 531.7Z"/>
<path class="b7" d="M286.3 316.4L284.3 318.4L288.7 318.8Z"/>
<path class="b8" d="M380.9 284L375.3 278.5L358.6 282.1L362.9 286.1L370.3 286.2Z"/>
<path class="b7" d="M408.9 620.7L403.3 628.8L404.4 629.7L421.3 630.5Z"/>
<path class="b7" d="M732.6 400.2L718.5 401L720.2 417.6L733.7 416.7Z"/>
<path class="b7" d="M704.1 516L715.3 514.8L717.5 498.8L709.8 499.5Z"/>
<path class="b7" d="M387.6 613.9L384.7 613.8L386.6 615.1Z"/>
<path class="b7" d="M670.6 580.9L666.8 581.3L664.9 584.7Z"/>
<path class="b7" d="M724.1 450.3L734.3 449.5L734.3 433.2L723 433.9Z"/>
<path class="b7" d="M492.3 306.4L489.9 302L483.6 302.5Z"/>
<path class="b7" d="M515.6 319.3L527.2 318.3L525.6 316.7L508.9 312.7L514.6 319.2Z"/>
<path class="b7" d="M556.4 663.2L538.8 663.4L536.9 667.7L553.6 670.3Z"/>
<path class="b7" d="M587.4 646.8L592.2 646.6L592.6 645.3Z"/>
<path class="b7" d="M275.3 498.9L271.7 483.1L263 482.2L268.2 498.5L274.6 499.3Z"/>
<path class="b7" d="M308.6 308L304 301.9L302 301.8L286.3 316.4L288.7 318.8L295.9 319.3Z"/>
<path class="b7" d="M255.2 450.1L252 449.8L253 457.9Z"/>
<path class="b7" d="M353.3 582.7L347.6 589.8L353 597L367 597.8Z"/>
<path class="b7" d="M698.2 362.4L699.4 368.2L709.7 367.8Z"/>
<path class="b7" d="M414.3 281.2L397.6 281.9L401.7 286.4L419.1 286.2Z"/>
<path class="b7" d="M312 548.7L296.6 548L308.6 554.5L314.3 549.2Z"/>
<path class="b7" d="M714.9 371.9L709.7 367.8L699.4 368.2L702 385L716.6 384.3Z"/>
<path class="b7" d="M648.2 598L631.6 609.5L630.7 614.2L644.2 613.4Z"/>
<path class="b7" d="M469.9 294.6L453.3 290.8L458.9 299.2L475.6 301.4Z"/>
<path class="b7" d="M723 433.9L734.3 433.2L733.7 416.7L720.2 417.6L720.6 424.1Z"/>
<path class="b7" d="M659.2 332.9L642.6 333.4L643.3 335.5L660 335.2Z"/>
<path class="b7" d="M681.6 569.2L684.3 564.8L670.1 565.6L666.8 581.3L670.6 580.9Z"/>
<path class="b7" d="M538.8 663.4L527.7 663.2L536.9 667.7Z"/>
<path class="b7" d="M400.7 614.5L387.6 613.9L386.6 615.1L403.3 628.8L408.9 620.7Z"/>
<path class="b7" d="M266.7 466.9L256.4 466L263 482.2L271.7 483.1Z"/>
<path class="b7" d="M695.9 351.3L680.7 351.8L681.6 356.2L698.2 362.4Z"/>
<path class="b7" d="M625.9 627.6L630.7 614.2L622.9 614.5L614.9 619.5L612.2 630.5L621.8 629.8Z"/>
<path class="b7" d="M315.3 302.6L304 301.9L308.6 308Z"/>
<path class="b7" d="M709.8 499.5L717.5 498.8L720.3 483L719.3 483Z"/>
<path class="b7" d="M531.3 326.4L527.2 318.3L515.6 319.3Z"/>
<path class="b7" d="M575.9 652L559.3 654.9L556.4 663.2L572.1 662.7Z"/>
<path class="b7" d="M464.6 646.2L447.9 635.6L442.3 645L444.4 646.4L464.2 647Z"/>
<path class="b7" d="M648.7 597.7L648.4 597.7L648.2 598Z"/>
<path class="b7" d="M520.3 661.3L519.5 663.2L527.7 663.2Z"/>
<path class="b7" d="M435.1 285.8L419.1 286.2L419.9 287.6L436.6 288.3Z"/>
<path class="b7" d="M612.2 630.5L597.5 631.2L592.6 645.3L609.3 637.7Z"/>
<path class="b7" d="M362.9 286.1L346.4 285.6L342 287.6L347.6 295.3L364.3 288.1Z"/>
<path class="b7" d="M351.7 581.7L337.2 580.9L347.6 589.8L353.3 582.7Z"/>
<path class="b7" d="M520.3 661.3L503.6 654L499.2 663L519.5 663.2Z"/>
<path class="b7" d="M564.6 325.8L547.9 328.8L553.6 335.7L570.3 334.3Z"/>
<path class="b7" d="M719.3 483L720.3 483L720.6 481.3Z"/>
<path class="b7" d="M298.5 532.7L292 531.7L296.6 548L312 548.7Z"/>
<path class="b7" d="M427.5 630.7L421.3 630.5L425.6 633.5Z"/>
<path class="b7" d="M397.6 281.9L380.9 284L383 286.4L401.7 286.4Z"/>
<path class="b7" d="M261.9 450.6L255.2 450.1L253 457.9L256.4 466L266.7 466.9Z"/>
<path class="b7" d="M625.9 335L620.3 320.9L603.6 326L608.2 335.8L619.5 335.8Z"/>
<path class="b7" d="M665.6 352.3L680.7 351.8L676.2 334.8L660 335.2L664.9 352.2Z"/>
<path class="b7" d="M292 323.8L288.7 318.8L284.3 318.4L271.5 335L282.9 335.8Z"/>
<path class="b7" d="M253 379L251.7 384.4L255.1 384.7Z"/>
<path class="b7" d="M664.9 584.7L666.8 581.3L653 582.1L648.4 597.7L648.7 597.7Z"/>
<path class="b7" d="M722.8 466.6L720.9 466.7L720.6 481.3Z"/>
<path class="b7" d="M275.3 498.9L274.6 499.3L276.3 499.4Z"/>
<path class="b7" d="M503.6 654L493 647.5L485.8 647.5L481.3 656.6L494.2 662.8L499.2 663Z"/>
<path class="b7" d="M508.9 312.7L492.3 306.4L497.9 316L514.6 319.2Z"/>
<path class="b7" d="M464.6 646.2L464.2 647L466.1 647Z"/>
<path class="b7" d="M380.9 284L370.3 286.2L383 286.4Z"/>
<path class="b7" d="M587.4 646.8L577.8 647.3L575.9 652Z"/>
<path class="b7" d="M724.1 450.3L721.1 450.4L720.9 466.7L722.8 466.6Z"/>
<path class="b7" d="M370.3 286.2L362.9 286.1L364.3 288.1Z"/>
<path class="b7" d="M603.6 326L586.9 330.8L589.5 335.8L608.2 335.8Z"/>
<path class="b7" d="M371.5 598L367 597.8L369.9 599.8Z"/>
<path class="b7" d="M297.6 530.1L292 531.7L292 531.7L298.5 532.7Z"/>
<path class="b7" d="M485.8 647.5L466.1 647L481.3 656.6Z"/>
<path class="b7" d="M441.5 631.1L427.5 630.7L425.6 633.5L442.3 645L447.9 635.6Z"/>
<path class="b7" d="M698.2 362.4L681.6 356.2L684 368.7L699.4 368.2Z"/>
<path class="b7" d="M335.5 565.5L322.5 564.9L331 570.5Z"/>
<path class="b7" d="M475.6 301.4L476.7 302.9L483.6 302.5Z"/>
<path class="b7" d="M642.6 333.4L625.9 335L626.2 335.7L643.3 335.5Z"/>
<path class="b7" d="M703.4 532.3L692.8 532.5L687.2 535.4L687 548.9L700.9 548.2Z"/>
<path class="b7" d="M723 433.9L720.9 434.1L721.1 450.4L724.1 450.3Z"/>
<path class="b7" d="M258.6 434.7L258.6 434.3L250.2 433.5L252 449.8L255.2 450.1Z"/>
<path class="b7" d="M453.3 290.8L436.6 288.3L442.3 297.8L458.9 299.2Z"/>
<path class="b7" d="M296.9 516.4L289.9 515.4L292 531.7L297.6 530.1Z"/>
<path class="b7" d="M282.9 335.8L271.5 335L269.6 338.2L275.3 347.8Z"/>
<path class="b7" d="M622.9 614.5L630.7 614.2L631.6 609.5Z"/>
<path class="b7" d="M704.1 516L703.9 516L703.9 520.5Z"/>
<path class="b7" d="M692.8 532.5L703.4 532.3L703.9 520.5Z"/>
<path class="b7" d="M392.3 606.4L382.4 598.5L371.5 598L369.9 599.8L384.7 613.8L387.6 613.9Z"/>
<path class="b7" d="M720.6 424.1L720.9 434.1L723 433.9Z"/>
<path class="b7" d="M342 287.6L325.3 296.6L331 303.1L347.6 295.3Z"/>
<path class="b7" d="M709.8 499.5L704.5 499.8L703.9 516L704.1 516Z"/>
<path class="b7" d="M648.4 597.7L635.4 598.6L631.6 609.5L648.2 598Z"/>
<path class="b7" d="M720.6 424.1L720.2 417.6L718.2 417.7Z"/>
<path class="b7" d="M681.6 356.2L680.7 351.8L665.6 352.3Z"/>
<path class="b7" d="M559.3 654.9L542.6 652.7L538.8 663.4L556.4 663.2Z"/>
<path class="b7" d="M275.3 347.8L269.6 338.2L263.1 351.5L272.9 352.4Z"/>
<path class="b7" d="M295.9 319.3L288.7 318.8L292 323.8Z"/>
<path class="b7" d="M707.5 401.6L718.5 401L716.6 384.3L702 385L703.9 398.2Z"/>
<path class="b7" d="M718.2 417.7L720.2 417.6L718.5 401L707.5 401.6Z"/>
<path class="b7" d="M337.7 565.6L335.5 565.5L331 570.5L337.2 580.9L351.7 581.7Z"/>
<path class="b7" d="M258 418L249.4 417.1L250.2 433.5L258.6 434.3Z"/>
<path class="b7" d="M419.1 286.2L401.7 286.4L403.3 289.1L419.9 287.6Z"/>
<path class="b7" d="M586.9 330.8L570.3 334.3L571.1 335.8L589.5 335.8Z"/>
<path class="b7" d="M392.3 606.4L387.6 613.9L400.7 614.5Z"/>
<path class="b7" d="M719.3 483L705.5 483.6L704.5 499.8L709.8 499.5Z"/>
<path class="b7" d="M315.3 548.9L312 548.7L314.3 549.2Z"/>
<path class="b7" d="M660 335.2L643.3 335.5L648.2 351.9L664.9 352.2Z"/>
<path class="b7" d="M272.9 352.4L263.1 351.5L256.3 368L266.7 368.8Z"/>
<path class="b7" d="M720.6 481.3L720.9 466.7L706.3 467.4L705.5 483.6L719.3 483Z"/>
<path class="b7" d="M547.9 328.8L531.3 326.4L536.9 334.9L553.6 335.7Z"/>
<path class="b7" d="M258.6 401.7L249.9 400.8L249.4 417.1L258 418Z"/>
<path class="b7" d="M266.7 368.8L256.3 368L253 379L255.1 384.7L261.8 385.3Z"/>
<path class="b7" d="M625.9 335L619.5 335.8L626.2 335.7Z"/>
<path class="b7" d="M258.6 401.6L255.1 384.7L251.7 384.4L249.9 400.8L258.6 401.7Z"/>
<path class="b7" d="M290.8 500.1L276.3 499.4L289.9 515.4L296.9 516.4Z"/>
<path class="b7" d="M703.9 520.5L703.9 516L687.7 516.4L687.4 532.7L692.8 532.5Z"/>
<path class="b7" d="M483.6 302.5L476.7 302.9L481.3 312.5L497.9 316L492.3 306.4Z"/>
<path class="b7" d="M514.6 319.2L514.7 319.3L515.6 319.3Z"/>
<path class="b7" d="M687 548.9L683.3 549.1L670.6 556.7L670.1 565.6L684.3 564.8Z"/>
<path class="b7" d="M331 303.1L325.3 296.6L315.3 302.6L330.6 303.3Z"/>
<path class="b7" d="M258.6 434.7L255.2 450.1L261.9 450.6Z"/>
<path class="b7" d="M577.8 647.3L562 647.8L559.3 654.9L575.9 652Z"/>
<path class="b6" d="M542.6 652.7L531.1 647.9L525.5 647.9L520.3 661.3L527.7 663.2L538.8 663.4Z"/>
<path class="b7" d="M683.3 549.1L687 548.9L687.2 535.4Z"/>
<path class="b7" d="M692.8 532.5L687.4 532.7L687.2 535.4Z"/>
<path class="b7" d="M592.6 645.3L597.5 631.2L585 631.6L581.6 633.1L577.8 647.3L587.4 646.8Z"/>
<path class="b7" d="M354.1 581.8L351.7 581.7L353.3 582.7Z"/>
<path class="b7" d="M619.5 335.8L608.2 335.8L609.3 339.1Z"/>
<path class="b7" d="M475.6 301.4L458.9 299.2L461.9 303.5L476.7 302.9Z"/>
<path class="b7" d="M614.9 619.5L598.3 627.6L597.5 631.2L612.2 630.5Z"/>
<path class="b7" d="M401.7 286.4L383 286.4L386.6 292.5L403.3 289.1Z"/>
<path class="b7" d="M720.6 424.1L718.2 417.7L705.4 418.2L706.2 434.7L720.9 434.1Z"/>
<path class="b7" d="M570.3 334.3L553.6 335.7L553.8 336L571.1 335.8Z"/>
<path class="b7" d="M721.1 450.4L706.5 451.1L706.3 467.4L720.9 466.7Z"/>
<path class="b7" d="M436.6 288.3L419.9 287.6L425.6 297.7L442.3 297.8Z"/>
<path class="b7" d="M412.6 615L400.7 614.5L408.9 620.7Z"/>
<path class="b7" d="M664.9 352.2L664.9 352.3L665.6 352.3Z"/>
<path class="b7" d="M383 286.4L370.3 286.2L364.3 288.1L369.9 297.4L386.6 292.5Z"/>
<path class="b7" d="M336.6 562.2L322.3 549.6L315.3 548.9L314.3 549.2L322.5 564.9L335.5 565.5Z"/>
<path class="b6" d="M486.9 644.7L470.3 634.6L464.6 646.2L466.1 647L485.8 647.5Z"/>
<path class="b6" d="M431.3 623.6L420 615.2L412.6 615L408.9 620.7L421.3 630.5L427.5 630.7Z"/>
<path class="b7" d="M704.5 499.8L689.5 500.4L687.7 516.4L703.9 516Z"/>
<path class="b7" d="M281 486.9L275.3 498.9L276.3 499.4L290.8 500.1Z"/>
<path class="b7" d="M330.6 303.3L315.3 302.6L308.6 308L314.3 316.4Z"/>
<path class="b7" d="M681.6 356.2L665.6 352.3L664.9 352.3L668.3 369.2L684 368.7Z"/>
<path class="b7" d="M622.9 614.5L616.9 615L614.9 619.5Z"/>
<path class="b6" d="M431.3 623.6L427.5 630.7L441.5 631.1Z"/>
<path class="b7" d="M720.9 434.1L706.2 434.7L706.5 451.1L721.1 450.4Z"/>
<path class="b7" d="M608.2 335.8L589.5 335.8L592.6 344.5L609.3 339.1Z"/>
<path class="b6" d="M525.5 647.9L506.4 647.8L503.6 654L520.3 661.3Z"/>
<path class="b7" d="M375.6 590.3L365.9 582.5L354.1 581.8L353.3 582.7L367 597.8L371.5 598Z"/>
<path class="b7" d="M687.6 385.6L702 385L699.4 368.2L684 368.7L687.2 385.4Z"/>
<path class="b7" d="M707.5 401.6L704.3 401.7L705.4 418.2L718.2 417.7Z"/>
<path class="b7" d="M515.6 319.3L514.7 319.3L520.3 332.1L536.9 334.9L531.3 326.4Z"/>
<path class="b7" d="M643.3 335.5L626.2 335.7L631.6 352.8L648.2 351.9Z"/>
<path class="b7" d="M670.1 565.6L664.3 565.8L653.9 572.5L653 582.1L666.8 581.3Z"/>
<path class="b7" d="M261.8 385.3L255.1 384.7L258.6 401.6Z"/>
<path class="b7" d="M703.9 398.2L704.3 401.7L707.5 401.6Z"/>
<path class="b6" d="M506.4 647.8L493 647.5L503.6 654Z"/>
<path class="b7" d="M280.6 484L271.7 483.1L275.3 498.9L281 486.9Z"/>
<path class="b6" d="M486.9 644.7L485.8 647.5L493 647.5Z"/>
<path class="b7" d="M514.6 319.2L497.9 316L500.5 320.1L514.7 319.3Z"/>
<path class="b6" d="M450.3 631.4L441.5 631.1L447.9 635.6Z"/>
<path class="b7" d="M258.7 434.3L258.6 434.3L258.6 434.7Z"/>
<path class="b7" d="M703.9 398.2L702 385L687.6 385.6Z"/>
<path class="b7" d="M664.9 352.2L648.2 351.9L648.5 352.7L664.9 352.3Z"/>
<path class="b7" d="M664.3 565.8L670.1 565.6L670.6 556.7Z"/>
<path class="b7" d="M314.3 316.4L308.6 308L295.9 319.3L310.1 320Z"/>
<path class="b6" d="M375.6 590.3L371.5 598L382.4 598.5Z"/>
<path class="b6" d="M336.6 562.2L335.5 565.5L337.7 565.6Z"/>
<path class="b7" d="M589.5 335.8L571.1 335.8L575.9 348.4L592.6 344.5Z"/>
<path class="b7" d="M259.4 418.1L258 418L258.6 434.3L258.7 434.3Z"/>
<path class="b6" d="M631.6 609.5L635.4 598.6L620.2 599.2L616.9 615L622.9 614.5Z"/>
<path class="b6" d="M562 647.8L544.5 648L542.6 652.7L559.3 654.9Z"/>
<path class="b7" d="M320 535L318.7 533.3L298.5 532.7L312 548.7L315.3 548.9Z"/>
<path class="b7" d="M277.1 467.7L266.7 466.9L271.7 483.1L280.6 484Z"/>
<path class="b7" d="M299.4 516.6L296.9 516.4L297.6 530.1Z"/>
<path class="b6" d="M465.9 631.7L450.3 631.4L447.9 635.6L464.6 646.2L470.3 634.6Z"/>
<path class="b7" d="M258.6 401.6L258.6 401.7L258.6 401.7Z"/>
<path class="b6" d="M653 582.1L642.2 582.5L637.2 585.5L635.4 598.6L648.4 597.7Z"/>
<path class="b7" d="M258.6 401.7L258.6 401.7L258 418L259.4 418.1Z"/>
<path class="b6" d="M585 631.6L597.5 631.2L598.3 627.6Z"/>
<path class="b7" d="M275.3 347.8L272.9 352.4L277.8 352.7Z"/>
<path class="b7" d="M553.6 335.7L536.9 334.9L537.8 336.4L553.8 336Z"/>
<path class="b7" d="M419.9 287.6L403.3 289.1L408.9 299.1L425.6 297.7Z"/>
<path class="b7" d="M631.6 352.8L626.2 335.7L619.5 335.8L609.3 339.1L614 353.1L630.2 353Z"/>
<path class="b7" d="M331 303.1L330.6 303.3L331.1 303.3Z"/>
<path class="b7" d="M310.1 320L295.9 319.3L292 323.8L297.6 333.8Z"/>
<path class="b7" d="M705.5 483.6L691.8 484.4L689.5 500.4L704.5 499.8Z"/>
<path class="b7" d="M364.3 288.1L347.6 295.3L353.3 303.3L369.9 297.4Z"/>
<path class="b7" d="M683.3 549.1L674.2 549.9L670.6 556.7Z"/>
<path class="b7" d="M687.2 535.4L687.4 532.7L675.7 533.8L674.2 549.9L683.3 549.1Z"/>
<path class="b7" d="M273.6 451.4L261.9 450.6L266.7 466.9L277.1 467.7Z"/>
<path class="b6" d="M544.5 648L531.1 647.9L542.6 652.7Z"/>
<path class="b6" d="M616.9 615L602.3 615.6L598.3 627.6L614.9 619.5Z"/>
<path class="b6" d="M320 535L315.3 548.9L322.3 549.6Z"/>
<path class="b7" d="M458.9 299.2L442.3 297.8L446.3 304L461.9 303.5Z"/>
<path class="b7" d="M703.9 398.2L687.6 385.6L687.3 385.6L689 402.2L704.3 401.7Z"/>
<path class="b7" d="M476.7 302.9L461.9 303.5L464.6 309.5L481.3 312.5Z"/>
<path class="b6" d="M581.6 633.1L564.9 635.9L562 647.8L577.8 647.3Z"/>
<path class="b7" d="M297.6 333.8L292 323.8L282.9 335.8L295.4 336.7Z"/>
<path class="b6" d="M396.6 599.1L382.4 598.5L392.3 606.4Z"/>
<path class="b6" d="M358.9 571.8L350.7 566.4L337.7 565.6L351.7 581.7L354.1 581.8Z"/>
<path class="b7" d="M571.1 335.8L553.8 336L559.3 349.9L575.9 348.4Z"/>
<path class="b7" d="M271.1 435.1L258.7 434.3L258.6 434.7L261.9 450.6L273.6 451.4Z"/>
<path class="b7" d="M664.9 352.3L648.5 352.7L652.1 369.6L668.3 369.2Z"/>
<path class="b6" d="M642.2 582.5L653 582.1L653.9 572.5Z"/>
<path class="b6" d="M313.9 517.1L299.4 516.6L297.6 530.1L298.5 532.7L318.7 533.3Z"/>
<path class="b7" d="M684 368.7L668.3 369.2L670.6 381L687.2 385.4Z"/>
<path class="b6" d="M525.9 646.6L525.5 647.9L531.1 647.9Z"/>
<path class="b6" d="M414.6 610.2L401.2 599.2L396.6 599.1L392.3 606.4L400.7 614.5L412.6 615Z"/>
<path class="b7" d="M648.2 351.9L631.6 352.8L631.6 352.9L648.5 352.7Z"/>
<path class="b7" d="M687.2 385.4L687.3 385.6L687.6 385.6Z"/>
<path class="b7" d="M353.3 303.3L347.6 295.3L331 303.1L331.1 303.3L352 304Z"/>
<path class="b7" d="M295.4 336.7L282.9 335.8L275.3 347.8L277.8 352.7L285.4 353.2Z"/>
<path class="b7" d="M609.3 339.1L592.6 344.5L595.9 353.2L614 353.1Z"/>
<path class="b6" d="M358.9 571.8L354.1 581.8L365.9 582.5Z"/>
<path class="b7" d="M704.3 401.7L689 402.2L690.5 418.8L705.4 418.2Z"/>
<path class="b6" d="M414.6 610.2L412.6 615L420 615.2Z"/>
<path class="b6" d="M525.9 646.6L509.3 639.5L506.4 647.8L525.5 647.9Z"/>
<path class="b6" d="M585 631.6L582.2 631.7L581.6 633.1Z"/>
<path class="b6" d="M664.3 565.8L657.2 566.5L653.9 572.5Z"/>
<path class="b7" d="M514.7 319.3L500.5 320.1L503.6 327.9L520.3 332.1Z"/>
<path class="b7" d="M706.3 467.4L692.8 468.2L691.8 484.4L705.5 483.6Z"/>
<path class="b6" d="M687.7 516.4L675.9 517.5L675.7 533.8L687.4 532.7Z"/>
<path class="b7" d="M273.9 386.1L261.8 385.3L258.6 401.6L258.6 401.7L271.2 402.5Z"/>
<path class="b6" d="M281.4 484.1L280.6 484L281 486.9Z"/>
<path class="b7" d="M281 362.4L277.8 352.7L272.9 352.4L266.7 368.8L278.1 369.7Z"/>
<path class="b7" d="M403.3 289.1L386.6 292.5L392.3 302L408.9 299.1Z"/>
<path class="b7" d="M270.2 418.8L259.4 418.1L258.7 434.3L271.1 435.1Z"/>
<path class="b6" d="M509.3 639.5L496.8 632.2L492 632.2L486.9 644.7L493 647.5L506.4 647.8Z"/>
<path class="b7" d="M631.6 352.8L630.2 353L631.6 352.9Z"/>
<path class="b6" d="M303.3 513.1L301.4 501L290.8 500.1L296.9 516.4L299.4 516.6Z"/>
<path class="b7" d="M497.9 316L481.3 312.5L486 320.7L500.5 320.1Z"/>
<path class="b6" d="M435.3 615.7L420 615.2L431.3 623.6Z"/>
<path class="b7" d="M705.4 418.2L690.5 418.8L691.8 435.4L706.2 434.7Z"/>
<path class="b6" d="M453.6 623.5L442.8 615.8L435.3 615.7L431.3 623.6L441.5 631.1L450.3 631.4Z"/>
<path class="b7" d="M278.1 369.7L266.7 368.8L261.8 385.3L273.9 386.1Z"/>
<path class="b6" d="M453.6 623.5L450.3 631.4L465.9 631.7Z"/>
<path class="b7" d="M271.2 402.5L258.6 401.7L259.4 418.1L270.2 418.8Z"/>
<path class="b7" d="M687.2 385.4L670.6 381L671.4 386.1L687.3 385.6Z"/>
<path class="b6" d="M492 632.2L471.7 631.9L470.3 634.6L486.9 644.7Z"/>
<path class="b6" d="M471.7 631.9L465.9 631.7L470.3 634.6Z"/>
<path class="b6" d="M342.3 551.1L336.6 562.2L337.7 565.6L350.7 566.4Z"/>
<path class="b6" d="M706.5 451.1L692.6 451.8L692.8 468.2L706.3 467.4Z"/>
<path class="b7" d="M314.3 316.4L310.1 320L316.7 320.4Z"/>
<path class="b7" d="M536.9 334.9L520.3 332.1L522.8 337L537.8 336.4Z"/>
<path class="b7" d="M592.6 344.5L575.9 348.4L577.9 353.3L595.9 353.2Z"/>
<path class="b6" d="M564.9 635.9L548.3 633.7L544.5 648L562 647.8Z"/>
<path class="b7" d="M706.2 434.7L691.8 435.4L692.6 451.8L706.5 451.1Z"/>
<path class="b6" d="M670.6 556.7L674.2 549.9L659.4 550.5L657.2 566.5L664.3 565.8Z"/>
<path class="b7" d="M553.8 336L537.8 336.4L542.6 349L559.3 349.9Z"/>
<path class="b6" d="M637.2 585.5L620.6 596L620.2 599.2L635.4 598.6Z"/>
<path class="b7" d="M442.3 297.8L425.6 297.7L429.6 304.3L446.3 304Z"/>
<path class="b6" d="M598.3 627.6L602.3 615.6L586.5 616.1L582.2 631.7L585 631.6Z"/>
<path class="b7" d="M648.5 352.7L631.6 352.9L635.4 369.9L652.1 369.6Z"/>
<path class="b6" d="M642.2 582.5L638.8 582.9L637.2 585.5Z"/>
<path class="b7" d="M336.6 314.3L331.1 303.3L330.6 303.3L314.3 316.4L316.7 320.4L327.7 320.8Z"/>
<path class="b6" d="M379.9 583L365.9 582.5L375.6 590.3Z"/>
<path class="b7" d="M630.2 353L614 353.1L614.9 356.6Z"/>
<path class="b6" d="M582.2 631.7L566.5 632.2L564.9 635.9L581.6 633.1Z"/>
<path class="b6" d="M303.3 513.1L299.4 516.6L313.9 517.1Z"/>
<path class="b7" d="M352 304L331.1 303.3L336.6 314.3Z"/>
<path class="b6" d="M295.7 484.7L281.4 484.1L281 486.9L290.8 500.1L301.4 501Z"/>
<path class="b7" d="M668.3 369.2L652.1 369.6L653.9 378.6L670.6 381Z"/>
<path class="b6" d="M285.5 468.4L277.1 467.7L280.6 484L281.4 484.1Z"/>
<path class="b7" d="M461.9 303.5L446.3 304L447.9 307.9L464.6 309.5Z"/>
<path class="b7" d="M687.3 385.6L671.4 386.1L673.4 402.7L689 402.2Z"/>
<path class="b6" d="M689.5 500.4L680.1 501.2L676.2 515.6L675.9 517.5L687.7 516.4Z"/>
<path class="b7" d="M285.4 353.2L277.8 352.7L281 362.4Z"/>
<path class="b6" d="M338.8 550.3L322.3 549.6L336.6 562.2L342.3 551.1Z"/>
<path class="b6" d="M397.9 595.3L384.3 583.2L379.9 583L375.6 590.3L382.4 598.5L396.6 599.1Z"/>
<path class="b6" d="M548.3 633.7L544.9 632.3L530.8 632.4L525.9 646.6L531.1 647.9L544.5 648Z"/>
<path class="b7" d="M297.6 333.8L295.4 336.7L299.2 336.9Z"/>
<path class="b6" d="M620.2 599.2L613.8 599.4L603.9 604.5L602.3 615.6L616.9 615Z"/>
<path class="b6" d="M653.9 572.5L657.2 566.5L642.2 567.1L638.8 582.9L642.2 582.5Z"/>
<path class="b6" d="M680.1 501.2L689.5 500.4L691.8 484.4L687.4 484.7Z"/>
<path class="b6" d="M324.1 534L318.7 533.3L320 535Z"/>
<path class="b7" d="M353.3 303.3L352 304L353.7 304Z"/>
<path class="b7" d="M369.9 297.4L353.3 303.3L353.7 304L374.3 304.3Z"/>
<path class="b7" d="M614 353.1L595.9 353.2L598.3 361.1L614.9 356.6Z"/>
<path class="b7" d="M575.9 348.4L559.3 349.9L560.8 353.5L577.9 353.3Z"/>
<path class="b6" d="M397.9 595.3L396.6 599.1L401.2 599.2Z"/>
<path class="b7" d="M392.3 302L386.6 292.5L369.9 297.4L374.3 304.3L383.1 304.4Z"/>
<path class="b7" d="M631.6 352.9L630.2 353L614.9 356.6L618.2 370.1L635.4 369.9Z"/>
<path class="b6" d="M613.8 599.4L620.2 599.2L620.6 596Z"/>
<path class="b7" d="M425.6 297.7L408.9 299.1L412.1 304.4L429.6 304.3Z"/>
<path class="b6" d="M530.8 632.4L512.2 632.4L509.3 639.5L525.9 646.6Z"/>
<path class="b6" d="M670.6 381L653.9 378.6L655.2 386.4L671.4 386.1Z"/>
<path class="b6" d="M687.4 484.7L691.8 484.4L692.8 468.2L692.1 468.2Z"/>
<path class="b6" d="M419.5 599.8L401.2 599.2L414.6 610.2Z"/>
<path class="b6" d="M689 402.2L673.4 402.7L675.5 419.4L690.5 418.8Z"/>
<path class="b6" d="M320 328.2L316.7 320.4L310.1 320L297.6 333.8L299.2 336.9L311.5 337.4Z"/>
<path class="b7" d="M500.5 320.1L486 320.7L486.9 323.4L503.6 327.9Z"/>
<path class="b6" d="M638.8 582.9L624.7 583.6L620.6 596L637.2 585.5Z"/>
<path class="b6" d="M362.4 566.9L350.7 566.4L358.9 571.8Z"/>
<path class="b6" d="M566.5 632.2L548.9 632.4L548.3 633.7L564.9 635.9Z"/>
<path class="b6" d="M326.1 534.2L324.1 534L320 535L322.3 549.6L338.8 550.3Z"/>
<path class="b6" d="M512.2 632.4L496.8 632.2L509.3 639.5Z"/>
<path class="b6" d="M436.9 610.9L422.9 599.8L419.5 599.8L414.6 610.2L420 615.2L435.3 615.7Z"/>
<path class="b6" d="M692.1 468.2L692.8 468.2L692.6 451.8L690.8 451.9Z"/>
<path class="b6" d="M492.6 630.1L492 632.2L496.8 632.2Z"/>
<path class="b6" d="M595.9 353.2L577.9 353.3L581.6 364.6L598.3 361.1Z"/>
<path class="b6" d="M537.8 336.4L522.8 337L525.9 345.7L542.6 349Z"/>
<path class="b6" d="M281 362.4L278.1 369.7L283.3 370Z"/>
<path class="b6" d="M436.9 610.9L435.3 615.7L442.8 615.8Z"/>
<path class="b6" d="M652.1 369.6L635.4 369.9L637.2 378.4L653.9 378.6Z"/>
<path class="b6" d="M492.6 630.1L475.9 619.9L471.7 631.9L492 632.2Z"/>
<path class="b6" d="M520.3 332.1L503.6 327.9L508.2 337.7L522.8 337Z"/>
<path class="b6" d="M476.2 321.1L486 320.7L481.3 312.5L464.6 309.5L470.3 320.7Z"/>
<path class="b6" d="M446.3 304L429.6 304.3L431.3 308.3L447.9 307.9Z"/>
<path class="b6" d="M690.8 451.9L692.6 451.8L691.8 435.4L683.6 435.7Z"/>
<path class="b6" d="M475.9 619.9L470.5 616.3L457 616.2L453.6 623.5L465.9 631.7L471.7 631.9Z"/>
<path class="b6" d="M457 616.2L442.8 615.8L453.6 623.5Z"/>
<path class="b6" d="M381.3 578.1L368.6 567.1L362.4 566.9L358.9 571.8L365.9 582.5L379.9 583Z"/>
<path class="b6" d="M288.7 468.5L285.5 468.4L281.4 484.1L295.7 484.7Z"/>
<path class="b6" d="M408.9 299.1L392.3 302L393.7 304.5L412.1 304.4Z"/>
<path class="b6" d="M286.6 464L285.1 452.3L273.6 451.4L277.1 467.7L285.5 468.4Z"/>
<path class="b6" d="M548.9 632.4L544.9 632.3L548.3 633.7Z"/>
<path class="b6" d="M327.7 320.8L316.7 320.4L320 328.2Z"/>
<path class="b6" d="M586.5 616.1L570.1 616.5L566.5 632.2L582.2 631.7Z"/>
<path class="b6" d="M305.4 501.3L301.4 501L303.3 513.1Z"/>
<path class="b6" d="M325.6 532.9L324.7 517.9L313.9 517.1L318.7 533.3L324.1 534Z"/>
<path class="b6" d="M303.3 348.6L299.2 336.9L295.4 336.7L285.4 353.2L300 354Z"/>
<path class="b6" d="M675.7 533.8L659.6 534.2L659.6 534.3L659.4 550.5L674.2 549.9Z"/>
<path class="b6" d="M559.3 349.9L542.6 349L544.6 353.9L560.8 353.5Z"/>
<path class="b6" d="M680.1 501.2L676.5 501.3L676.2 515.6Z"/>
<path class="b6" d="M667.9 517.7L675.9 517.5L676.2 515.6Z"/>
<path class="b6" d="M671.4 386.1L655.2 386.4L657.6 403.2L673.4 402.7Z"/>
<path class="b6" d="M683.6 435.7L691.8 435.4L690.5 418.8L675.5 419.4L676.2 427.1Z"/>
<path class="b6" d="M614.9 356.6L598.3 361.1L600.7 370.3L618.2 370.1Z"/>
<path class="b6" d="M283.5 436L271.1 435.1L273.6 451.4L285.1 452.3Z"/>
<path class="b6" d="M659.6 534.2L675.7 533.8L675.9 517.5L667.9 517.7Z"/>
<path class="b6" d="M603.9 604.5L587.3 610.4L586.5 616.1L602.3 615.6Z"/>
<path class="b6" d="M687.4 484.7L676.9 485L676.5 501.3L680.1 501.2Z"/>
<path class="b6" d="M613.8 599.4L606 599.9L603.9 604.5Z"/>
<path class="b6" d="M692.1 468.2L677.2 468.7L676.9 485L687.4 484.7Z"/>
<path class="b6" d="M381.3 578.1L379.9 583L384.3 583.2Z"/>
<path class="b6" d="M392.3 302L383.1 304.4L393.7 304.5Z"/>
<path class="b6" d="M343.7 550.5L338.8 550.3L342.3 551.1Z"/>
<path class="b6" d="M531.6 628.9L530.8 632.4L544.9 632.3Z"/>
<path class="b6" d="M283 419.6L270.2 418.8L271.1 435.1L283.5 436Z"/>
<path class="b6" d="M300 354L285.4 353.2L281 362.4L283.3 370L292.4 370.4Z"/>
<path class="b6" d="M690.8 451.9L677.1 452.4L677.2 468.7L692.1 468.2Z"/>
<path class="b6" d="M577.9 353.3L560.8 353.5L564.9 366.1L581.6 364.6Z"/>
<path class="b6" d="M374.3 304.3L353.7 304L358.9 315.9L375.6 307.4Z"/>
<path class="b6" d="M383.1 304.4L374.3 304.3L375.6 307.4Z"/>
<path class="b6" d="M653.9 378.6L637.2 378.4L638.7 386.8L655.2 386.4Z"/>
<path class="b6" d="M317.6 501.7L305.4 501.3L303.3 513.1L313.9 517.1L324.7 517.9Z"/>
<path class="b6" d="M336.6 314.3L327.7 320.8L340.1 321.2Z"/>
<path class="b6" d="M358.9 315.9L353.7 304L352 304L336.6 314.3L340.1 321.2L349.5 321.4Z"/>
<path class="b6" d="M486.9 323.4L486 320.7L476.2 321.1Z"/>
<path class="b6" d="M283.9 403.3L271.2 402.5L270.2 418.8L283 419.6Z"/>
<path class="b6" d="M311.5 337.4L299.2 336.9L303.3 348.6Z"/>
<path class="b6" d="M464.6 309.5L447.9 307.9L453.6 320.3L470.3 320.7Z"/>
<path class="b6" d="M286.6 385.7L283.3 370L278.1 369.7L273.9 386.1L286.3 386.9Z"/>
<path class="b6" d="M403 583.8L384.3 583.2L397.9 595.3Z"/>
<path class="b6" d="M635.4 369.9L618.2 370.1L620.6 380.1L637.2 378.4Z"/>
<path class="b6" d="M676.2 515.6L676.5 501.3L660.2 501.6L659.7 517.9L667.9 517.7Z"/>
<path class="b6" d="M286.3 386.9L273.9 386.1L271.2 402.5L283.9 403.3Z"/>
<path class="b6" d="M683.6 435.7L676.7 435.9L677.1 452.4L690.8 451.9Z"/>
<path class="b6" d="M429.6 304.3L412.1 304.4L414.6 310.8L431.3 308.3Z"/>
<path class="b6" d="M286.6 464L285.5 468.4L288.7 468.5Z"/>
<path class="b6" d="M667.9 517.7L659.7 517.9L659.6 534.2L659.6 534.2Z"/>
<path class="b6" d="M659.4 550.5L643.2 550.9L642.9 550.9L642.2 567.1L657.2 566.5Z"/>
<path class="b6" d="M659.6 534.2L659.6 534.2L659.6 534.3Z"/>
<path class="b6" d="M620.6 596L624.7 583.6L608.9 584.1L606 599.9L613.8 599.4Z"/>
<path class="b6" d="M364.6 557.5L352.6 551.1L343.7 550.5L342.3 551.1L350.7 566.4L362.4 566.9Z"/>
<path class="b6" d="M531.6 628.9L514.9 621.4L512.2 632.4L530.8 632.4Z"/>
<path class="b6" d="M420.3 596.9L405.4 583.8L403 583.8L397.9 595.3L401.2 599.2L419.5 599.8Z"/>
<path class="b6" d="M676.2 427.1L676.7 435.9L683.6 435.7Z"/>
<path class="b6" d="M325.6 532.9L324.1 534L326.1 534.2Z"/>
<path class="b6" d="M598.3 361.1L581.6 364.6L583.3 370.5L600.7 370.3Z"/>
<path class="b6" d="M643.2 550.9L659.4 550.5L659.6 534.3Z"/>
<path class="b6" d="M570.1 616.5L553.2 616.7L548.9 632.4L566.5 632.2Z"/>
<path class="b6" d="M642.2 567.1L626.1 567.5L624.7 583.6L638.8 582.9Z"/>
<path class="b6" d="M420.3 596.9L419.5 599.8L422.9 599.8Z"/>
<path class="b6" d="M514.9 621.4L507 616.7L497.4 616.7L492.6 630.1L496.8 632.2L512.2 632.4Z"/>
<path class="b6" d="M667.5 419.7L675.5 419.4L673.4 402.7L657.6 403.2L659.6 416.6Z"/>
<path class="b6" d="M676.9 485L661 485.4L660.2 501.6L676.5 501.3Z"/>
<path class="b6" d="M676.2 427.1L675.5 419.4L667.5 419.7Z"/>
<path class="b6" d="M522.8 337L508.2 337.7L509.3 341L525.9 345.7Z"/>
<path class="b6" d="M309 492.3L307.9 485.6L295.7 484.7L301.4 501L305.4 501.3Z"/>
<path class="b6" d="M587.3 610.4L570.6 612.5L570.1 616.5L586.5 616.1Z"/>
<path class="b6" d="M606 599.9L590.8 600.5L587.3 610.4L603.9 604.5Z"/>
<path class="b6" d="M441.4 600.3L422.9 599.8L436.9 610.9Z"/>
<path class="b6" d="M542.6 349L525.9 345.7L529.2 354.4L544.6 353.9Z"/>
<path class="b6" d="M553.2 616.7L535.6 616.9L531.6 628.9L544.9 632.3L548.9 632.4Z"/>
<path class="b6" d="M364.6 557.5L362.4 566.9L368.6 567.1Z"/>
<path class="b6" d="M497.4 616.7L477.6 616.5L475.9 619.9L492.6 630.1Z"/>
<path class="b6" d="M412.1 304.4L393.7 304.5L397.9 315L414.6 310.8Z"/>
<path class="b6" d="M655.2 386.4L638.7 386.8L641.4 403.6L657.6 403.2Z"/>
<path class="b6" d="M659.6 534.3L659.6 534.2L643.5 534.6L642.9 550.9L643.2 550.9Z"/>
<path class="b6" d="M292.4 370.4L283.3 370L286.6 385.7Z"/>
<path class="b6" d="M287.9 452.5L285.1 452.3L286.6 464Z"/>
<path class="b6" d="M459.3 608.2L448.4 600.4L441.4 600.3L436.9 610.9L442.8 615.8L457 616.2Z"/>
<path class="b6" d="M320 328.2L311.5 337.4L324 337.9Z"/>
<path class="b6" d="M477.6 616.5L470.5 616.3L475.9 619.9Z"/>
<path class="b6" d="M560.8 353.5L544.6 353.9L548.3 365.2L564.9 366.1Z"/>
<path class="b6" d="M470.3 320.7L470.5 321.2L476.2 321.1Z"/>
<path class="b6" d="M459.3 608.2L457 616.2L470.5 616.3Z"/>
<path class="b6" d="M637.2 378.4L620.6 380.1L621.9 387.1L638.7 386.8Z"/>
<path class="b6" d="M618.2 370.1L600.7 370.3L603.9 382.6L620.6 380.1Z"/>
<path class="b6" d="M326.6 518.1L324.7 517.9L325.6 532.9Z"/>
<path class="b6" d="M499.1 338L508.2 337.7L503.6 327.9L486.9 323.4L492.6 337.5Z"/>
<path class="b6" d="M659.7 517.9L643.5 518.3L643.5 534.6L659.6 534.2Z"/>
<path class="b6" d="M677.2 468.7L661.4 469.2L661 485.4L676.9 485Z"/>
<path class="b6" d="M393.7 304.5L383.1 304.4L375.6 307.4L381.3 320.5L397.9 315Z"/>
<path class="b6" d="M643.2 550.9L642.9 550.9L642.9 550.9Z"/>
<path class="b6" d="M447.9 307.9L431.3 308.3L436.9 321.2L453.6 320.3Z"/>
<path class="b6" d="M347.9 534.9L347.9 534.9L326.1 534.2L338.8 550.3L343.7 550.5Z"/>
<path class="b6" d="M303.3 348.6L300 354L305.2 354.2Z"/>
<path class="b6" d="M676.2 427.1L667.5 419.7L659.9 419.9L660.8 436.4L676.7 435.9Z"/>
<path class="b6" d="M581.6 364.6L564.9 366.1L566.3 370.8L583.3 370.5Z"/>
<path class="b6" d="M386.1 567.7L368.6 567.1L381.3 578.1Z"/>
<path class="b6" d="M304.2 469.3L288.7 468.5L295.7 484.7L307.9 485.6Z"/>
<path class="b6" d="M342.3 327.2L340.1 321.2L327.7 320.8L320 328.2L324 337.9L330.2 338.1Z"/>
<path class="b6" d="M309 492.3L305.4 501.3L317.6 501.7Z"/>
<path class="b6" d="M677.1 452.4L661.3 452.8L661.4 469.2L677.2 468.7Z"/>
<path class="b6" d="M289.1 436.3L283.5 436L285.1 452.3L287.9 452.5Z"/>
<path class="b6" d="M642.9 550.9L626.2 562L626.1 567.5L642.2 567.1Z"/>
<path class="b6" d="M676.7 435.9L660.8 436.4L661.3 452.8L677.1 452.4Z"/>
<path class="b6" d="M660.2 501.6L644.2 502.1L643.5 518.3L659.7 517.9Z"/>
<path class="b6" d="M286.6 385.7L286.3 386.9L286.9 386.9Z"/>
<path class="b6" d="M659.6 416.6L659.9 419.9L667.5 419.7Z"/>
<path class="b6" d="M403.6 581L389.4 567.8L386.1 567.7L381.3 578.1L384.3 583.2L403 583.8Z"/>
<path class="b6" d="M349.5 321.4L340.1 321.2L342.3 327.2Z"/>
<path class="b6" d="M300.7 453L287.9 452.5L286.6 464L288.7 468.5L304.2 469.3Z"/>
<path class="b6" d="M470.3 320.7L453.6 320.3L454.2 321.6L470.5 321.2Z"/>
<path class="b6" d="M347.9 534.9L343.7 550.5L352.6 551.1Z"/>
<path class="b6" d="M345 518.6L326.6 518.1L325.6 532.9L326.1 534.2L347.9 534.9Z"/>
<path class="b6" d="M476.2 321.1L470.5 321.2L475.9 336.5L492.6 337.5L486.9 323.4Z"/>
<path class="b6" d="M286.9 386.9L286.3 386.9L283.9 403.3L288.6 403.6Z"/>
<path class="b6" d="M535.6 616.9L516.9 616.9L514.9 621.4L531.6 628.9Z"/>
<path class="b6" d="M289.4 420L283 419.6L283.5 436L289.1 436.3Z"/>
<path class="b6" d="M600.7 370.3L583.3 370.5L587.3 384.7L603.9 382.6Z"/>
<path class="b6" d="M509.3 341L508.2 337.7L499.1 338Z"/>
<path class="b6" d="M570.6 612.5L553.9 611L553.2 616.7L570.1 616.5Z"/>
<path class="b6" d="M358.9 315.9L349.5 321.4L361.6 321.6Z"/>
<path class="b6" d="M657.6 403.2L641.4 403.6L642.9 413.2L659.6 416.6Z"/>
<path class="b6" d="M403.6 581L403 583.8L405.4 583.8Z"/>
<path class="b6" d="M288.6 403.6L283.9 403.3L283 419.6L289.4 420Z"/>
<path class="b6" d="M620.6 380.1L603.9 382.6L604.9 387.3L621.9 387.1Z"/>
<path class="b6" d="M642.9 550.9L628.8 551.6L626.2 562L642.9 550.9Z"/>
<path class="b6" d="M325.6 343.5L324 337.9L311.5 337.4L303.3 348.6L305.2 354.2L317.7 354.7Z"/>
<path class="b6" d="M638.7 386.8L621.9 387.1L624.8 403.9L641.4 403.6Z"/>
<path class="b5" d="M516.9 616.9L507 616.7L514.9 621.4Z"/>
<path class="b6" d="M661 485.4L645.2 485.9L644.2 502.1L660.2 501.6Z"/>
<path class="b6" d="M590.8 600.5L574.5 600.9L570.6 612.5L587.3 610.4Z"/>
<path class="b6" d="M618.9 567.7L626.1 567.5L626.2 562Z"/>
<path class="b6" d="M425.1 584.4L405.4 583.8L420.3 596.9Z"/>
<path class="b6" d="M381.3 320.5L375.6 307.4L358.9 315.9L361.6 321.6L378.3 321.9Z"/>
<path class="b6" d="M626.1 567.5L618.9 567.7L609.6 571.9L608.9 584.1L624.7 583.6Z"/>
<path class="b5" d="M498.3 612L497.4 616.7L507 616.7Z"/>
<path class="b6" d="M525.9 345.7L509.3 341L514 355L529.2 354.4Z"/>
<path class="b6" d="M544.6 353.9L529.2 354.4L531.6 362.4L548.3 365.2Z"/>
<path class="b6" d="M564.9 366.1L548.3 365.2L550 371.1L566.3 370.8Z"/>
<path class="b5" d="M442.6 594.8L429.5 584.4L425.1 584.4L420.3 596.9L422.9 599.8L441.4 600.3Z"/>
<path class="b6" d="M309 369.3L305.2 354.2L300 354L292.4 370.4L308 371.2Z"/>
<path class="b6" d="M436.9 321.2L431.3 308.3L414.6 310.8L419.5 322L431.7 321.9Z"/>
<path class="b6" d="M608.9 584.1L592.6 584.4L590.8 600.5L606 599.9Z"/>
<path class="b6" d="M659.6 416.6L642.9 413.2L643.6 420.3L659.9 419.9Z"/>
<path class="b6" d="M308 371.2L292.4 370.4L286.6 385.7L286.9 386.9L303 387.6Z"/>
<path class="b6" d="M331.3 507.8L330.7 502.5L317.6 501.7L324.7 517.9L326.6 518.1Z"/>
<path class="b6" d="M309.7 485.7L307.9 485.6L309 492.3Z"/>
<path class="b6" d="M368.9 551.6L352.6 551.1L364.6 557.5Z"/>
<path class="b5" d="M498.3 612L481.6 601.1L477.6 616.5L497.4 616.7Z"/>
<path class="b5" d="M442.6 594.8L441.4 600.3L448.4 600.4Z"/>
<path class="b5" d="M481.6 601.1L481.1 600.8L462.5 600.7L459.3 608.2L470.5 616.3L477.6 616.5Z"/>
<path class="b5" d="M462.5 600.7L448.4 600.4L459.3 608.2Z"/>
<path class="b6" d="M661.4 469.2L645.6 469.6L645.2 485.9L661 485.4Z"/>
<path class="b6" d="M298.4 436.7L289.1 436.3L287.9 452.5L300.7 453Z"/>
<path class="b6" d="M659.9 419.9L643.6 420.3L644.6 436.8L660.8 436.4Z"/>
<path class="b6" d="M330.2 338.1L324 337.9L325.6 343.5Z"/>
<path class="b6" d="M643.5 534.6L630 535.5L628.8 551.6L642.9 550.9Z"/>
<path class="b6" d="M348 534.9L347.9 534.9L347.9 534.9Z"/>
<path class="b6" d="M583.3 370.5L566.3 370.8L570.6 385.8L587.3 384.7Z"/>
<path class="b6" d="M453.6 320.3L436.9 321.2L437.2 321.9L454.2 321.6Z"/>
<path class="b6" d="M414.6 310.8L397.9 315L400.9 322L419.5 322Z"/>
<path class="b5" d="M553.9 611L537.3 605.8L535.6 616.9L553.2 616.7Z"/>
<path class="b5" d="M386.9 561.6L373.3 551.8L368.9 551.6L364.6 557.5L368.6 567.1L386.1 567.7Z"/>
<path class="b6" d="M492.6 337.5L492.9 338.2L499.1 338Z"/>
<path class="b6" d="M660.8 436.4L644.6 436.8L645.3 453.2L661.3 452.8Z"/>
<path class="b6" d="M331.3 507.8L326.6 518.1L345 518.6Z"/>
<path class="b6" d="M661.3 452.8L645.3 453.2L645.6 469.6L661.4 469.2Z"/>
<path class="b6" d="M603.9 382.6L587.3 384.7L587.9 387.6L604.9 387.3Z"/>
<path class="b6" d="M621.9 387.1L604.9 387.3L607.8 404.2L624.8 403.9Z"/>
<path class="b6" d="M303 387.6L286.9 386.9L288.6 403.6L299.6 404Z"/>
<path class="b6" d="M317.7 354.7L305.2 354.2L309 369.3Z"/>
<path class="b6" d="M641.4 403.6L624.8 403.9L626.2 412.4L642.9 413.2Z"/>
<path class="b6" d="M312.1 469.7L304.2 469.3L307.9 485.6L309.7 485.7Z"/>
<path class="b6" d="M342.3 327.2L330.2 338.1L346.4 338.5Z"/>
<path class="b6" d="M298 420.4L289.4 420L289.1 436.3L298.4 436.7Z"/>
<path class="b6" d="M326.2 486.3L309.7 485.7L309 492.3L317.6 501.7L330.7 502.5Z"/>
<path class="b6" d="M643.5 518.3L629.7 519.1L630 535.5L643.5 534.6Z"/>
<path class="b5" d="M618.9 567.7L611.1 568.1L609.6 571.9Z"/>
<path class="b5" d="M386.9 561.6L386.1 567.7L389.4 567.8Z"/>
<path class="b5" d="M574.5 600.9L557.5 601.1L553.9 611L570.6 612.5Z"/>
<path class="b6" d="M470.5 321.2L454.2 321.6L459.3 336.6L475.9 336.5Z"/>
<path class="b6" d="M299.6 404L288.6 403.6L289.4 420L298 420.4Z"/>
<path class="b5" d="M350.3 518.9L345 518.6L347.9 534.9L348 534.9Z"/>
<path class="b6" d="M397.9 315L381.3 320.5L381.9 321.9L400.9 322Z"/>
<path class="b6" d="M364.6 330.9L361.6 321.6L349.5 321.4L342.3 327.2L346.4 338.5L353.8 338.7Z"/>
<path class="b5" d="M609.6 571.9L592.9 578L592.6 584.4L608.9 584.1Z"/>
<path class="b6" d="M436.9 321.2L431.7 321.9L437.2 321.9Z"/>
<path class="b6" d="M644.2 502.1L629.4 502.7L629.7 519.1L643.5 518.3Z"/>
<path class="b5" d="M520.2 601.1L502.1 601.2L498.3 612L507 616.7L516.9 616.9Z"/>
<path class="b5" d="M408.4 568.3L389.4 567.8L403.6 581Z"/>
<path class="b6" d="M378.3 321.9L361.6 321.6L364.6 330.9Z"/>
<path class="b6" d="M381.3 320.5L378.3 321.9L381.9 321.9Z"/>
<path class="b6" d="M642.9 413.2L626.2 412.4L627 420.6L643.6 420.3Z"/>
<path class="b5" d="M370.3 536.9L369.2 535.5L348 534.9L347.9 534.9L352.6 551.1L368.9 551.6Z"/>
<path class="b6" d="M492.6 337.5L475.9 336.5L476.7 338.6L492.9 338.2Z"/>
<path class="b6" d="M548.3 365.2L531.6 362.4L534.1 371.6L550 371.1Z"/>
<path class="b5" d="M626.2 562L628.8 551.6L614.4 552.3L611.1 568.1L618.9 567.7Z"/>
<path class="b5" d="M537.3 605.8L527.4 601L520.2 601.1L516.9 616.9L535.6 616.9Z"/>
<path class="b5" d="M425.9 579.5L412.6 568.4L408.4 568.3L403.6 581L405.4 583.8L425.1 584.4Z"/>
<path class="b6" d="M325.6 343.5L317.7 354.7L328.9 355.1Z"/>
<path class="b6" d="M529.2 354.4L514 355L514.9 358.5L531.6 362.4Z"/>
<path class="b5" d="M592.6 584.4L576.1 584.8L574.5 600.9L590.8 600.5Z"/>
<path class="b5" d="M645.2 485.9L629.9 486.4L629.4 502.7L644.2 502.1Z"/>
<path class="b6" d="M566.3 370.8L550 371.1L553.9 385.4L570.6 385.8Z"/>
<path class="b6" d="M604.9 387.3L587.9 387.6L590.7 404.4L607.8 404.2Z"/>
<path class="b6" d="M431.7 321.9L419.5 322L420.3 324.6Z"/>
<path class="b5" d="M502.1 601.2L481.8 600.9L481.6 601.1L498.3 612Z"/>
<path class="b6" d="M499.6 355.4L514 355L509.3 341L499.1 338L492.9 338.2L498.3 355.3Z"/>
<path class="b6" d="M309 369.3L308 371.2L309.4 371.2Z"/>
<path class="b6" d="M643.6 420.3L627 420.6L628.2 437.1L644.6 436.8Z"/>
<path class="b5" d="M481.8 600.9L481.1 600.8L481.6 601.1Z"/>
<path class="b6" d="M587.3 384.7L570.6 385.8L571 387.9L587.9 387.6Z"/>
<path class="b5" d="M425.9 579.5L425.1 584.4L429.5 584.4Z"/>
<path class="b5" d="M557.5 601.1L539.4 601.2L537.3 605.8L553.9 611Z"/>
<path class="b5" d="M314.1 453.7L300.7 453L304.2 469.3L312.1 469.7Z"/>
<path class="b5" d="M446.6 584.8L429.5 584.4L442.6 594.8Z"/>
<path class="b6" d="M624.8 403.9L607.8 404.2L609.6 413.6L626.2 412.4Z"/>
<path class="b5" d="M464.9 588.5L459.2 584.9L446.6 584.8L442.6 594.8L448.4 600.4L462.5 600.7Z"/>
<path class="b5" d="M464.9 588.5L462.5 600.7L481.1 600.8Z"/>
<path class="b6" d="M644.6 436.8L628.2 437.1L629.1 453.6L645.3 453.2Z"/>
<path class="b6" d="M454.2 321.6L437.2 321.9L442.6 338.2L459.3 336.6Z"/>
<path class="b5" d="M611.1 568.1L596.3 568.7L592.9 578L609.6 571.9Z"/>
<path class="b6" d="M419.5 322L400.9 322L403.6 330.5L420.3 324.6Z"/>
<path class="b6" d="M347.9 344.4L346.4 338.5L330.2 338.1L325.6 343.5L328.9 355.1L338.5 355.3Z"/>
<path class="b6" d="M309.4 371.2L308 371.2L303 387.6L312 388Z"/>
<path class="b5" d="M645.6 469.6L629.8 470.1L629.9 486.4L645.2 485.9Z"/>
<path class="b5" d="M331.6 502.6L330.7 502.5L331.3 507.8Z"/>
<path class="b5" d="M320.7 470L312.1 469.7L309.7 485.7L326.2 486.3Z"/>
<path class="b5" d="M363.5 519.3L350.3 518.9L348 534.9L369.2 535.5Z"/>
<path class="b5" d="M370.3 536.9L368.9 551.6L373.3 551.8Z"/>
<path class="b5" d="M539.4 601.2L527.4 601L537.3 605.8Z"/>
<path class="b5" d="M645.3 453.2L629.1 453.6L629.8 470.1L645.6 469.6Z"/>
<path class="b5" d="M592.9 578L576.3 580.4L576.1 584.8L592.6 584.4Z"/>
<path class="b5" d="M626.2 412.4L609.6 413.6L610.3 420.9L627 420.6Z"/>
<path class="b6" d="M331.3 365.8L328.9 355.1L317.7 354.7L309 369.3L309.4 371.2L327.9 371.9Z"/>
<path class="b5" d="M391.7 552.3L373.3 551.8L386.9 561.6Z"/>
<path class="b5" d="M520.6 597.9L520.2 601.1L527.4 601Z"/>
<path class="b6" d="M400.9 322L381.9 321.9L386.9 337.6L403.6 330.5Z"/>
<path class="b6" d="M587.9 387.6L571 387.9L573.8 404.7L590.7 404.4Z"/>
<path class="b6" d="M475.9 336.5L459.3 336.6L460.1 338.9L476.7 338.6Z"/>
<path class="b6" d="M353.8 338.7L346.4 338.5L347.9 344.4Z"/>
<path class="b5" d="M353.6 516.2L351.3 503.2L331.6 502.6L331.3 507.8L345 518.6L350.3 518.9Z"/>
<path class="b5" d="M312 388L303 387.6L299.6 404L313.9 404.7Z"/>
<path class="b5" d="M334 486.6L326.2 486.3L330.7 502.5L331.6 502.6Z"/>
<path class="b5" d="M576.1 584.8L559.3 585.1L557.5 601.1L574.5 600.9Z"/>
<path class="b6" d="M364.6 330.9L353.8 338.7L367.3 338.9Z"/>
<path class="b6" d="M386.9 337.6L381.9 321.9L378.3 321.9L364.6 330.9L367.3 338.9L384.3 339.2Z"/>
<path class="b6" d="M531.6 362.4L514.9 358.5L518.2 372L534.1 371.6Z"/>
<path class="b6" d="M514.9 358.5L514 355L499.6 355.4Z"/>
<path class="b5" d="M370.8 535.6L369.2 535.5L370.3 536.9Z"/>
<path class="b5" d="M314.6 446.6L314.1 437.5L298.4 436.7L300.7 453L314.1 453.7Z"/>
<path class="b5" d="M409.3 561.1L396.1 552.4L391.7 552.3L386.9 561.6L389.4 567.8L408.4 568.3Z"/>
<path class="b5" d="M314.1 421.1L298 420.4L298.4 436.7L314.1 437.5Z"/>
<path class="b5" d="M570.6 385.8L553.9 385.4L554.5 388.2L571 387.9Z"/>
<path class="b5" d="M627 420.6L610.3 420.9L611.5 437.4L628.2 437.1Z"/>
<path class="b5" d="M607.8 404.2L590.7 404.4L592.9 415.3L609.6 413.6Z"/>
<path class="b5" d="M550 371.1L534.1 371.6L537.3 383.9L553.9 385.4Z"/>
<path class="b6" d="M442.6 338.2L437.2 321.9L431.7 321.9L420.3 324.6L425 339.3L437.4 339.2Z"/>
<path class="b6" d="M492.9 338.2L476.7 338.6L481.6 355.1L498.3 355.3Z"/>
<path class="b5" d="M630 535.5L614.9 536L614.4 552.3L628.8 551.6Z"/>
<path class="b5" d="M520.6 597.9L503.9 588L502.1 601.2L520.2 601.1Z"/>
<path class="b5" d="M486.3 585.3L466.8 585.1L464.9 588.5L481.1 600.8L481.8 600.9Z"/>
<path class="b5" d="M409.3 561.1L408.4 568.3L412.6 568.4Z"/>
<path class="b5" d="M315.9 453.8L314.1 453.7L312.1 469.7L320.7 470Z"/>
<path class="b5" d="M353.6 516.2L350.3 518.9L363.5 519.3Z"/>
<path class="b5" d="M314.6 416.4L313.9 404.7L299.6 404L298 420.4L314.1 421.1Z"/>
<path class="b5" d="M430.2 568.9L412.6 568.4L425.9 579.5Z"/>
<path class="b5" d="M327.9 371.9L309.4 371.2L312 388L321.3 388.3Z"/>
<path class="b5" d="M338.5 355.3L328.9 355.1L331.3 365.8Z"/>
<path class="b5" d="M628.2 437.1L611.5 437.4L612.7 454L629.1 453.6Z"/>
<path class="b5" d="M373.1 519.6L363.5 519.3L369.2 535.5L370.8 535.6Z"/>
<path class="b5" d="M629.7 519.1L614.8 519.7L614.9 536L630 535.5Z"/>
<path class="b5" d="M576.3 580.4L559.6 578.6L559.3 585.1L576.1 584.8Z"/>
<path class="b5" d="M448.3 573.6L440.4 568.9L430.2 568.9L425.9 579.5L429.5 584.4L446.6 584.8Z"/>
<path class="b5" d="M466.8 585.1L459.2 584.9L464.9 588.5Z"/>
<path class="b5" d="M559.3 585.1L542.3 585.3L539.4 601.2L557.5 601.1Z"/>
<path class="b5" d="M596.3 568.7L580.2 569.1L576.3 580.4L592.9 578Z"/>
<path class="b5" d="M629.4 502.7L614.9 503.4L614.8 519.7L629.7 519.1Z"/>
<path class="b5" d="M503.9 588L499 585.2L486.3 585.3L481.8 600.9L502.1 601.2Z"/>
<path class="b5" d="M609.6 413.6L592.9 415.3L593.6 421.2L610.3 420.9Z"/>
<path class="b5" d="M420.3 324.6L403.6 330.5L406.4 339.3L425 339.3Z"/>
<path class="b5" d="M542.3 585.3L524.7 585.5L520.6 597.9L527.4 601L539.4 601.2Z"/>
<path class="b5" d="M448.3 573.6L446.6 584.8L459.2 584.9Z"/>
<path class="b5" d="M392.6 537.4L391.4 536.1L370.8 535.6L370.3 536.9L373.3 551.8L391.7 552.3Z"/>
<path class="b5" d="M459.3 336.6L442.6 338.2L442.9 339.2L460.1 338.9Z"/>
<path class="b5" d="M347.9 344.4L338.5 355.3L350.9 355.6Z"/>
<path class="b5" d="M629.1 453.6L612.7 454L614 470.5L629.8 470.1Z"/>
<path class="b5" d="M571 387.9L554.5 388.2L557.3 405L573.8 404.7Z"/>
<path class="b5" d="M314.6 446.6L314.1 453.7L315.9 453.8Z"/>
<path class="b5" d="M614.4 552.3L598.3 552.7L596.3 568.7L611.1 568.1Z"/>
<path class="b5" d="M498.3 355.3L498.3 355.4L499.6 355.4Z"/>
<path class="b5" d="M336.6 470.7L320.7 470L326.2 486.3L334 486.6Z"/>
<path class="b5" d="M629.9 486.4L615 487L614.9 503.4L629.4 502.7Z"/>
<path class="b5" d="M345.2 486.9L334 486.6L331.6 502.6L351.3 503.2Z"/>
<path class="b5" d="M590.7 404.4L573.8 404.7L576.3 416.2L592.9 415.3Z"/>
<path class="b5" d="M321.3 388.3L312 388L313.9 404.7L316.4 404.8Z"/>
<path class="b5" d="M629.8 470.1L614 470.5L615 487L629.9 486.4Z"/>
<path class="b5" d="M610.3 420.9L593.6 421.2L594.8 437.7L611.5 437.4Z"/>
<path class="b5" d="M514.9 358.5L499.6 355.4L498.3 355.4L502.1 372.4L518.2 372Z"/>
<path class="b5" d="M370.3 350.4L367.3 338.9L353.8 338.7L347.9 344.4L350.9 355.6L364.2 355.9Z"/>
<path class="b5" d="M314.9 437.5L314.1 437.5L314.6 446.6Z"/>
<path class="b5" d="M403.6 330.5L386.9 337.6L387.5 339.2L406.4 339.3Z"/>
<path class="b5" d="M553.9 385.4L537.3 383.9L538.2 388.6L554.5 388.2Z"/>
<path class="b5" d="M331.3 365.8L327.9 371.9L332.6 372Z"/>
<path class="b5" d="M476.7 338.6L460.1 338.9L464.9 356L481.6 355.1Z"/>
<path class="b5" d="M314.9 421.2L314.1 421.1L314.1 437.5L314.9 437.5Z"/>
<path class="b5" d="M442.6 338.2L437.4 339.2L442.9 339.2Z"/>
<path class="b5" d="M316.4 404.8L313.9 404.7L314.6 416.4Z"/>
<path class="b5" d="M386.9 337.6L384.3 339.2L387.5 339.2Z"/>
<path class="b5" d="M534.1 371.6L518.2 372L520.6 382L537.3 383.9Z"/>
<path class="b5" d="M524.7 585.5L505.5 585.4L503.9 588L520.6 597.9Z"/>
<path class="b5" d="M384.3 339.2L367.3 338.9L370.3 350.4Z"/>
<path class="b5" d="M314.6 416.4L314.1 421.1L314.9 421.2Z"/>
<path class="b5" d="M498.3 355.3L481.6 355.1L481.8 355.8L498.3 355.4Z"/>
<path class="b5" d="M354.6 503.3L351.3 503.2L353.6 516.2Z"/>
<path class="b5" d="M392.6 537.4L391.7 552.3L396.1 552.4Z"/>
<path class="b5" d="M611.5 437.4L594.8 437.7L596 454.3L612.7 454Z"/>
<path class="b5" d="M505.5 585.4L499 585.2L503.9 588Z"/>
<path class="b5" d="M559.6 578.6L542.9 573.1L542.3 585.3L559.3 585.1Z"/>
<path class="b5" d="M385.1 519.9L373.1 519.6L370.8 535.6L391.4 536.1Z"/>
<path class="b5" d="M332.6 372L327.9 371.9L321.3 388.3L335.1 388.8Z"/>
<path class="b5" d="M580.2 569.1L563 569.3L559.6 578.6L576.3 580.4Z"/>
<path class="b5" d="M592.9 415.3L576.3 416.2L576.8 421.5L593.6 421.2Z"/>
<path class="b5" d="M413.9 552.9L396.1 552.4L409.3 561.1Z"/>
<path class="b5" d="M437.4 339.2L425 339.3L425.9 342.9Z"/>
<path class="b5" d="M353.6 368.6L350.9 355.6L338.5 355.3L331.3 365.8L332.6 372L350.9 372.5Z"/>
<path class="b5" d="M614.9 536L598.5 536.4L598.3 552.7L614.4 552.3Z"/>
<path class="b5" d="M487.3 575.6L486.3 585.3L499 585.2Z"/>
<path class="b5" d="M470.1 569.3L451 569.2L448.3 573.6L459.2 584.9L466.8 585.1Z"/>
<path class="b5" d="M334.2 438.1L314.9 437.5L314.6 446.6L315.9 453.8L335.3 454.5Z"/>
<path class="b5" d="M336.9 468L335.3 454.5L315.9 453.8L320.7 470L336.6 470.7Z"/>
<path class="b5" d="M431.6 555.8L423 552.9L413.9 552.9L409.3 561.1L412.6 568.4L430.2 568.9Z"/>
<path class="b5" d="M392.8 536.1L391.4 536.1L392.6 537.4Z"/>
<path class="b5" d="M375.9 517.4L373.3 503.8L354.6 503.3L353.6 516.2L363.5 519.3L373.1 519.6Z"/>
<path class="b5" d="M554.5 388.2L538.2 388.6L541.1 405.4L557.3 405Z"/>
<path class="b5" d="M573.8 404.7L557.3 405L559.6 415.9L576.3 416.2Z"/>
<path class="b5" d="M338.1 470.7L336.6 470.7L334 486.6L345.2 486.9Z"/>
<path class="b5" d="M451 569.2L440.4 568.9L448.3 573.6Z"/>
<path class="b5" d="M593.6 421.2L576.8 421.5L578 438L594.8 437.7Z"/>
<path class="b5" d="M612.7 454L596 454.3L597.8 470.9L614 470.5Z"/>
<path class="b5" d="M431.6 555.8L430.2 568.9L440.4 568.9Z"/>
<path class="b5" d="M614.8 519.7L598.5 520.1L598.5 536.4L614.9 536Z"/>
<path class="b5" d="M425 339.3L406.4 339.3L409.3 350.4L425.9 342.9Z"/>
<path class="b5" d="M356.9 487.3L345.2 486.9L351.3 503.2L354.6 503.3Z"/>
<path class="b5" d="M606.5 503.6L614.9 503.4L615 487L611.9 487.1Z"/>
<path class="b5" d="M336.6 405.4L316.4 404.8L314.6 416.4L314.9 421.2L334.6 421.8Z"/>
<path class="b5" d="M464.9 356L460.1 338.9L442.9 339.2L447.3 356.2L464.3 356.1Z"/>
<path class="b5" d="M387.5 339.2L384.3 339.2L370.3 350.4L371.7 356L391.7 356.2Z"/>
<path class="b5" d="M598.3 552.7L581.7 553L580.2 569.1L596.3 568.7Z"/>
<path class="b5" d="M487.3 575.6L476.9 569.3L470.1 569.3L466.8 585.1L486.3 585.3Z"/>
<path class="b5" d="M537.3 383.9L520.6 382L521.9 389L538.2 388.6Z"/>
<path class="b5" d="M364.2 355.9L350.9 355.6L353.6 368.6Z"/>
<path class="b5" d="M394 520L385.1 519.9L391.4 536.1L392.8 536.1Z"/>
<path class="b5" d="M614.9 503.4L606.5 503.6L598.6 515.1L598.5 520.1L614.8 519.7Z"/>
<path class="b5" d="M498.3 355.4L481.8 355.8L485.4 372.7L502.1 372.4Z"/>
<path class="b5" d="M334.6 421.8L314.9 421.2L314.9 437.5L334.2 438.1Z"/>
<path class="b5" d="M375.9 517.4L373.1 519.6L385.1 519.9Z"/>
<path class="b5" d="M442.9 339.2L437.4 339.2L425.9 342.9L429.2 356.3L447.3 356.2Z"/>
<path class="b5" d="M563 569.3L544.5 569.3L542.9 573.1L559.6 578.6Z"/>
<path class="b5" d="M370.3 350.4L364.2 355.9L371.7 356Z"/>
<path class="b5" d="M481.6 355.1L464.9 356L465 356.1L481.8 355.8Z"/>
<path class="b5" d="M414.9 536.7L392.8 536.1L392.6 537.4L396.1 552.4L413.9 552.9Z"/>
<path class="b5" d="M336.9 404.4L335.1 388.8L321.3 388.3L316.4 404.8L336.6 405.4Z"/>
<path class="b5" d="M611.9 487.1L615 487L614 470.5L597.8 470.9L598.6 481.1Z"/>
<path class="b5" d="M542.9 573.1L533.6 569.3L526.1 569.4L524.7 585.5L542.3 585.3Z"/>
<path class="b5" d="M594.8 437.7L578 438L579.3 454.6L596 454.3Z"/>
<path class="b5" d="M518.2 372L502.1 372.4L503.9 381L520.6 382Z"/>
<path class="b5" d="M336.9 468L336.6 470.7L338.1 470.7Z"/>
<path class="b5" d="M350.9 372.5L332.6 372L335.1 388.8L342.9 389Z"/>
<path class="b5" d="M409.3 350.4L406.4 339.3L387.5 339.2L391.7 356.2L398.3 356.3Z"/>
<path class="b5" d="M576.3 416.2L559.6 415.9L560.2 421.8L576.8 421.5Z"/>
<path class="b5" d="M544.5 569.3L533.6 569.3L542.9 573.1Z"/>
<path class="b5" d="M508.9 569.6L490.6 569.6L487.3 575.6L499 585.2L505.5 585.4Z"/>
<path class="b5" d="M611.9 487.1L598.6 487.4L598.6 503.7L606.5 503.6Z"/>
<path class="b5" d="M606.5 503.6L598.6 503.7L598.6 515.1Z"/>
<path class="b5" d="M526.1 569.4L508.9 569.6L505.5 585.4L524.7 585.5Z"/>
<path class="b5" d="M464.9 356L464.3 356.1L465 356.1Z"/>
<path class="b5" d="M598.5 536.4L581.9 536.7L581.7 553L598.3 552.7Z"/>
<path class="b5" d="M598.6 481.1L598.6 487.4L611.9 487.1Z"/>
<path class="b5" d="M337.6 454.5L335.3 454.5L336.9 468Z"/>
<path class="b5" d="M353.6 368.6L350.9 372.5L354.4 372.6Z"/>
<path class="b5" d="M576.8 421.5L560.2 421.8L561.4 438.4L578 438Z"/>
<path class="b5" d="M359.1 471.4L338.1 470.7L345.2 486.9L356.9 487.3Z"/>
<path class="b5" d="M366.8 487.6L356.9 487.3L354.6 503.3L373.3 503.8Z"/>
<path class="b5" d="M490.6 569.6L476.9 569.3L487.3 575.6Z"/>
<path class="b5" d="M557.3 405L541.1 405.4L542.9 414.9L559.6 415.9Z"/>
<path class="b5" d="M371.7 356L364.2 355.9L353.6 368.6L354.4 372.6L375.1 372.9Z"/>
<path class="b5" d="M425.9 342.9L409.3 350.4L410.8 356.3L429.2 356.3Z"/>
<path class="b5" d="M596 454.3L579.3 454.6L581.3 471.3L597.8 470.9Z"/>
<path class="b5" d="M342.9 389L335.1 388.8L336.9 404.4Z"/>
<path class="b5" d="M453.7 553.3L434.3 553.2L431.6 555.8L440.4 568.9L451 569.2Z"/>
<path class="b5" d="M526.3 563.9L526.1 569.4L533.6 569.3Z"/>
<path class="b5" d="M470.6 560.5L470.1 569.3L476.9 569.3Z"/>
<path class="b5" d="M598.5 520.1L581.9 520.4L581.9 536.7L598.5 536.4Z"/>
<path class="b5" d="M538.2 388.6L521.9 389L524.8 405.8L541.1 405.4Z"/>
<path class="b5" d="M434.3 553.2L423 552.9L431.6 555.8Z"/>
<path class="b5" d="M581.7 553L564.9 553.3L563 569.3L580.2 569.1Z"/>
<path class="b5" d="M481.8 355.8L465 356.1L468.3 373L485.4 372.7Z"/>
<path class="b5" d="M338 438.3L334.2 438.1L335.3 454.5L337.6 454.5Z"/>
<path class="b5" d="M598.6 515.1L581.9 518.6L581.9 520.4L598.5 520.1Z"/>
<path class="b5" d="M414.9 536.7L411.6 520.5L394 520L392.8 536.1L414.9 536.7Z"/>
<path class="b5" d="M520.6 382L503.9 381L505.4 389.3L521.9 389Z"/>
<path class="b5" d="M376.7 503.9L373.3 503.8L375.9 517.4Z"/>
<path class="b5" d="M464.3 356.1L447.3 356.2L448.3 360.6Z"/>
<path class="b5" d="M598.6 503.7L582 504.1L581.9 518.6L598.6 515.1Z"/>
<path class="b5" d="M354.4 372.6L350.9 372.5L342.9 389L356.8 389.3Z"/>
<path class="b5" d="M409.3 350.4L398.3 356.3L410.8 356.3Z"/>
<path class="b5" d="M414.9 536.7L414.9 536.7L413.9 552.9L423 552.9Z"/>
<path class="b5" d="M336.9 404.4L336.6 405.4L337.1 405.4Z"/>
<path class="b5" d="M337.8 421.9L334.6 421.8L334.2 438.1L338 438.3Z"/>
<path class="b5" d="M578 438L561.4 438.4L562.7 454.9L579.3 454.6Z"/>
<path class="b5" d="M337.1 405.4L336.6 405.4L334.6 421.8L337.8 421.9Z"/>
<path class="b5" d="M502.1 372.4L485.4 372.7L487.3 381.7L503.9 381Z"/>
<path class="b5" d="M598.6 487.4L582 487.7L582 504.1L598.6 503.7Z"/>
<path class="b5" d="M470.6 560.5L457.9 553.3L453.7 553.3L451 569.2L470.1 569.3Z"/>
<path class="b5" d="M597.8 470.9L581.3 471.3L581.9 479L598.6 481.1Z"/>
<path class="b5" d="M398.3 356.3L391.7 356.2L392.6 360.9Z"/>
<path class="b5" d="M559.6 415.9L542.9 414.9L543.7 422.2L560.2 421.8Z"/>
<path class="b5" d="M398.3 511.3L397.4 504.4L376.7 503.9L375.9 517.4L385.1 519.9L394 520Z"/>
<path class="b5" d="M598.6 481.1L581.9 479L582 487.7L598.6 487.4Z"/>
<path class="b5" d="M526.3 563.9L509.6 553.4L508.9 569.6L526.1 569.4Z"/>
<path class="b5" d="M359.3 470.3L357.5 455.1L337.6 454.5L336.9 468L338.1 470.7L359.1 471.4Z"/>
<path class="b5" d="M414.9 536.7L414.9 536.7L414.9 536.7Z"/>
<path class="b5" d="M392.6 360.9L391.7 356.2L371.7 356L375.1 372.9L379.9 373Z"/>
<path class="b5" d="M465 356.1L464.3 356.1L448.3 360.6L450.7 373.1L468.3 373Z"/>
<path class="b5" d="M547.7 553.5L528.8 553.5L526.3 563.9L533.6 569.3L544.5 569.3Z"/>
<path class="b5" d="M564.9 553.3L547.7 553.5L544.5 569.3L563 569.3Z"/>
<path class="b5" d="M356.8 389.3L342.9 389L336.9 404.4L337.1 405.4L358.7 405.9Z"/>
<path class="b5" d="M447.3 356.2L429.2 356.3L431.6 367.4L448.3 360.6Z"/>
<path class="b5" d="M581.9 536.7L565.2 537L564.9 553.3L581.7 553Z"/>
<path class="b5" d="M378.5 487.8L366.8 487.6L373.3 503.8L376.7 503.9Z"/>
<path class="b5" d="M398.3 511.3L394 520L411.6 520.5Z"/>
<path class="b5" d="M415.3 520.5L411.6 520.5L414.9 536.7Z"/>
<path class="b5" d="M560.2 421.8L543.7 422.2L544.9 438.7L561.4 438.4Z"/>
<path class="b5" d="M359.8 471.4L359.1 471.4L356.9 487.3L366.8 487.6Z"/>
<path class="b5" d="M436.8 537.3L414.9 536.7L423 552.9L434.3 553.2Z"/>
<path class="b5" d="M579.3 454.6L562.7 454.9L564.5 471.6L581.3 471.3Z"/>
<path class="b5" d="M581.9 520.4L565.2 520.7L565.2 537L581.9 536.7Z"/>
<path class="b5" d="M541.1 405.4L524.8 405.8L526.3 414.3L542.9 414.9Z"/>
<path class="b5" d="M356.8 438.8L338 438.3L337.6 454.5L357.5 455.1Z"/>
<path class="b4" d="M492.7 553.7L474.2 553.7L470.6 560.5L476.9 569.3L490.6 569.6Z"/>
<path class="b4" d="M528.8 553.5L509.6 553.4L509.6 553.4L526.3 563.9Z"/>
<path class="b5" d="M521.9 389L505.4 389.3L508.1 406.1L524.8 405.8Z"/>
<path class="b5" d="M410.8 356.3L398.3 356.3L392.6 360.9L394.8 373.1L414.3 373.2Z"/>
<path class="b5" d="M375.9 378.2L375.1 372.9L354.4 372.6L356.8 389.3L369.2 389.5Z"/>
<path class="b5" d="M581.9 518.6L565.3 515.7L565.2 520.7L581.9 520.4Z"/>
<path class="b5" d="M503.9 381L487.3 381.7L488.6 389.6L505.4 389.3Z"/>
<path class="b4" d="M474.2 553.7L457.9 553.3L470.6 560.5Z"/>
<path class="b5" d="M582 504.1L565.3 504.4L565.3 515.7L581.9 518.6Z"/>
<path class="b5" d="M357.8 422.4L337.8 421.9L338 438.3L356.8 438.8Z"/>
<path class="b5" d="M392.6 360.9L379.9 373L394.8 373.1Z"/>
<path class="b4" d="M509.6 553.4L509.3 553.4L492.7 553.7L490.6 569.6L508.9 569.6Z"/>
<path class="b4" d="M453.9 539.8L453.7 553.3L457.9 553.3Z"/>
<path class="b4" d="M509.6 553.4L509.3 553.4L509.6 553.4Z"/>
<path class="b5" d="M561.4 438.4L544.9 438.7L546 455.2L562.7 454.9Z"/>
<path class="b5" d="M379.9 373L375.1 372.9L375.9 378.2Z"/>
<path class="b5" d="M485.4 372.7L468.3 373L470.6 384.8L487.3 381.7Z"/>
<path class="b5" d="M359.3 414.5L358.7 405.9L337.1 405.4L337.8 421.9L357.8 422.4Z"/>
<path class="b5" d="M431.6 367.4L429.2 356.3L410.8 356.3L414.3 373.2L420.1 373.3Z"/>
<path class="b5" d="M359.3 470.3L359.1 471.4L359.8 471.4Z"/>
<path class="b5" d="M582 487.7L565.3 488L565.3 504.4L582 504.1Z"/>
<path class="b5" d="M581.3 471.3L564.5 471.6L565.3 481.8L581.9 479Z"/>
<path class="b5" d="M448.3 360.6L431.6 367.4L432.8 373.2L450.7 373.1Z"/>
<path class="b4" d="M453.9 539.8L448.4 537.1L436.8 537.3L434.3 553.2L453.7 553.3Z"/>
<path class="b5" d="M581.9 479L565.3 481.8L565.3 488L582 487.7Z"/>
<path class="b5" d="M542.9 414.9L526.3 414.3L527.1 422.5L543.7 422.2Z"/>
<path class="b5" d="M380.1 471.8L359.8 471.4L366.8 487.6L378.5 487.8Z"/>
<path class="b4" d="M565.2 537L548.2 537.3L547.7 553.5L564.9 553.3Z"/>
<path class="b4" d="M392.5 488.1L378.5 487.8L376.7 503.9L397.4 504.4Z"/>
<path class="b4" d="M437.3 525.5L437.1 521L415.3 520.5L414.9 536.7L414.9 536.7L436.8 537.3Z"/>
<path class="b4" d="M417.5 504.5L398.5 504.4L398.3 511.3L411.6 520.5L415.3 520.5Z"/>
<path class="b4" d="M454.1 537.1L448.4 537.1L453.9 539.8Z"/>
<path class="b5" d="M359.8 455.1L357.5 455.1L359.3 470.3Z"/>
<path class="b5" d="M369.2 389.5L356.8 389.3L358.7 405.9L361.6 406Z"/>
<path class="b4" d="M530 537.3L510.2 537.1L509.6 553.4L528.8 553.5Z"/>
<path class="b5" d="M375.9 378.2L369.2 389.5L377.5 389.6Z"/>
<path class="b5" d="M562.7 454.9L546 455.2L547.3 471.8L564.5 471.6Z"/>
<path class="b4" d="M510.2 537.1L492.9 537.4L492.9 537.4L509.3 553.4L509.6 553.4Z"/>
<path class="b4" d="M565.2 520.7L548.2 520.9L548.2 537.3L565.2 537Z"/>
<path class="b4" d="M565.3 504.4L557.4 504.5L565.3 515.7Z"/>
<path class="b5" d="M543.7 422.2L527.1 422.5L528.2 439L544.9 438.7Z"/>
<path class="b4" d="M475.7 537.6L454.1 537.1L453.9 539.8L457.9 553.3L474.2 553.7Z"/>
<path class="b5" d="M394.8 373.1L379.9 373L375.9 378.2L377.5 389.6L397.6 389.9Z"/>
<path class="b5" d="M360 438.8L356.8 438.8L357.5 455.1L359.8 455.1Z"/>
<path class="b5" d="M431.6 367.4L420.1 373.3L432.8 373.2Z"/>
<path class="b4" d="M492.9 537.4L492.7 553.7L509.3 553.4Z"/>
<path class="b5" d="M361.6 406L358.7 405.9L359.3 414.5Z"/>
<path class="b4" d="M548.2 537.3L530 537.3L528.8 553.5L547.7 553.5Z"/>
<path class="b4" d="M398.5 504.4L397.4 504.4L398.3 511.3Z"/>
<path class="b5" d="M505.4 389.3L488.6 389.6L491 406.3L508.1 406.1Z"/>
<path class="b5" d="M487.3 381.7L470.6 384.8L471.4 389.8L488.6 389.6Z"/>
<path class="b5" d="M524.8 405.8L508.1 406.1L509.6 415.7L526.3 414.3Z"/>
<path class="b4" d="M565.3 515.7L557.4 504.5L548.3 504.6L548.2 520.9L565.2 520.7Z"/>
<path class="b5" d="M359.7 422.4L357.8 422.4L356.8 438.8L360 438.8Z"/>
<path class="b4" d="M381.1 455.6L359.8 455.1L359.3 470.3L359.8 471.4L380.1 471.8Z"/>
<path class="b5" d="M359.3 414.5L357.8 422.4L359.7 422.4Z"/>
<path class="b5" d="M468.3 373L450.7 373.1L453.9 389.8L470.6 384.8Z"/>
<path class="b4" d="M529.7 521L510.2 520.8L510.2 537.1L530 537.3Z"/>
<path class="b4" d="M454.4 520.8L437.3 521L437.3 525.5L448.4 537.1L454.1 537.1Z"/>
<path class="b4" d="M565.3 488L551.9 488.3L557.4 504.5L565.3 504.4Z"/>
<path class="b5" d="M377.5 389.6L369.2 389.5L361.6 406L379.2 406.3Z"/>
<path class="b4" d="M510.2 520.8L493 521L492.9 537.4L510.2 537.1Z"/>
<path class="b5" d="M420.1 373.3L414.3 373.2L414.9 377.5Z"/>
<path class="b4" d="M437.3 525.5L436.8 537.3L448.4 537.1Z"/>
<path class="b4" d="M565.3 481.8L551.9 488.3L565.3 488Z"/>
<path class="b5" d="M544.9 438.7L528.2 439L529.1 455.5L546 455.2Z"/>
<path class="b4" d="M431.4 504.8L417.5 504.5L415.3 520.5L437.1 521Z"/>
<path class="b4" d="M529.4 504.6L510.8 504.6L510.2 520.8L529.7 521Z"/>
<path class="b4" d="M399.5 488.2L392.5 488.1L397.4 504.4L398.5 504.4Z"/>
<path class="b4" d="M548.2 520.9L529.7 521L530 537.3L548.2 537.3Z"/>
<path class="b4" d="M565.3 481.8L564.5 471.6L547.3 471.8L548.4 488.3L551.9 488.3Z"/>
<path class="b4" d="M387.2 471.9L380.1 471.8L378.5 487.8L392.5 488.1Z"/>
<path class="b5" d="M414.9 377.5L414.3 373.2L394.8 373.1L397.6 389.9L402.3 389.9Z"/>
<path class="b4" d="M492.9 537.4L492.9 537.4L492.9 537.4Z"/>
<path class="b4" d="M548.3 504.6L529.4 504.6L529.7 521L548.2 520.9Z"/>
<path class="b4" d="M492.9 537.4L492.9 537.4L475.7 537.6L474.2 553.7L492.7 553.7Z"/>
<path class="b5" d="M379.2 406.3L361.6 406L359.3 414.5L359.7 422.4L380.5 422.8Z"/>
<path class="b5" d="M526.3 414.3L509.6 415.7L510.3 422.8L527.1 422.5Z"/>
<path class="b4" d="M475.9 521.3L454.4 520.8L454.1 537.1L475.7 537.6Z"/>
<path class="b4" d="M510.8 504.6L493.6 504.8L493 521L510.2 520.8Z"/>
<path class="b4" d="M551.9 488.3L548.4 488.3L548.3 504.6L557.4 504.5Z"/>
<path class="b4" d="M546 455.2L529.1 455.5L529.8 472L547.3 471.8Z"/>
<path class="b5" d="M432.8 373.2L420.1 373.3L414.9 377.5L416.7 390L435.4 390Z"/>
<path class="b4" d="M493 521L484.6 521.2L492.9 537.4L492.9 537.4Z"/>
<path class="b4" d="M381.1 439.3L360 438.8L359.8 455.1L381.1 455.6Z"/>
<path class="b4" d="M437.3 521L437.1 521L437.3 525.5Z"/>
<path class="b5" d="M453.9 389.8L450.7 373.1L432.8 373.2L435.4 390L453.6 390Z"/>
<path class="b4" d="M548.4 488.3L529.9 488.3L529.4 504.6L548.3 504.6Z"/>
<path class="b4" d="M456.2 504.7L437.9 504.8L437.3 521L454.4 520.8Z"/>
<path class="b5" d="M488.6 389.6L471.4 389.8L473.5 406.5L491 406.3Z"/>
<path class="b4" d="M420.3 488.6L399.5 488.2L398.5 504.4L417.5 504.5Z"/>
<path class="b4" d="M529.9 488.3L511.9 488.4L510.8 504.6L529.4 504.6Z"/>
<path class="b4" d="M380.5 422.8L359.7 422.4L360 438.8L381.1 439.3Z"/>
<path class="b4" d="M547.3 471.8L529.8 472L529.9 488.3L548.4 488.3Z"/>
<path class="b4" d="M527.1 422.5L510.3 422.8L511.3 439.3L528.2 439Z"/>
<path class="b5" d="M470.6 384.8L453.9 389.8L454 390L471.4 389.8Z"/>
<path class="b5" d="M414.9 377.5L402.3 389.9L416.7 390Z"/>
<path class="b4" d="M398.3 395.8L397.6 389.9L377.5 389.6L379.2 406.3L392.6 406.5Z"/>
<path class="b4" d="M400.5 472.1L387.2 471.9L392.5 488.1L399.5 488.2Z"/>
<path class="b4" d="M508.1 406.1L491 406.3L492.9 419.7L509.6 415.7Z"/>
<path class="b4" d="M437.9 504.8L431.4 504.8L437.1 521L437.3 521Z"/>
<path class="b4" d="M383.9 455.6L381.1 455.6L380.1 471.8L387.2 471.9Z"/>
<path class="b4" d="M484.6 521.2L475.9 521.3L475.7 537.6L492.9 537.4Z"/>
<path class="b4" d="M402.3 389.9L397.6 389.9L398.3 395.8Z"/>
<path class="b4" d="M511.9 488.4L494.3 488.6L493.6 504.8L510.8 504.6Z"/>
<path class="b4" d="M528.2 439L511.3 439.3L512 455.7L529.1 455.5Z"/>
<path class="b4" d="M529.8 472L512.3 472.1L511.9 488.4L529.9 488.3Z"/>
<path class="b4" d="M453.9 389.8L453.6 390L454 390Z"/>
<path class="b4" d="M476.3 519.3L472.4 505.1L456.2 504.7L454.4 520.8L475.9 521.3Z"/>
<path class="b4" d="M392.6 406.5L379.2 406.3L380.5 422.8L386.7 422.9Z"/>
<path class="b4" d="M529.1 455.5L512 455.7L512.3 472.1L529.8 472Z"/>
<path class="b4" d="M493.6 504.8L476.5 505L476.3 519.3L484.6 521.2L493 521Z"/>
<path class="b4" d="M471.4 389.8L454 390L455.7 406.6L473.5 406.5Z"/>
<path class="b4" d="M421.8 488.6L420.3 488.6L417.5 504.5L431.4 504.8Z"/>
<path class="b4" d="M416.7 390L402.3 389.9L398.3 395.8L399.3 406.5L418.6 406.6Z"/>
<path class="b4" d="M476.3 519.3L475.9 521.3L484.6 521.2Z"/>
<path class="b4" d="M383.6 439.3L381.1 439.3L381.1 455.6L383.9 455.6Z"/>
<path class="b4" d="M398.3 395.8L392.6 406.5L399.3 406.5Z"/>
<path class="b4" d="M509.6 415.7L492.9 419.7L493.2 423L510.3 422.8Z"/>
<path class="b4" d="M401 455.8L383.9 455.6L387.2 471.9L400.5 472.1Z"/>
<path class="b4" d="M386.7 422.9L380.5 422.8L381.1 439.3L383.6 439.3Z"/>
<path class="b4" d="M453.6 390L435.4 390L437.3 403.2Z"/>
<path class="b4" d="M438.8 488.6L421.8 488.6L431.4 504.8L437.9 504.8Z"/>
<path class="b4" d="M458.4 488.8L438.8 488.6L437.9 504.8L456.2 504.7Z"/>
<path class="b4" d="M399.3 406.5L392.6 406.5L386.7 422.9L400.4 423Z"/>
<path class="b4" d="M512.3 472.1L494.7 472.3L494.3 488.6L511.9 488.4Z"/>
<path class="b4" d="M510.3 422.8L493.2 423L494.1 439.5L511.3 439.3Z"/>
<path class="b4" d="M420.6 486.9L418.4 472.4L400.5 472.1L399.5 488.2L420.3 488.6Z"/>
<path class="b4" d="M437.3 403.2L435.4 390L416.7 390L418.6 406.6L433.7 406.7Z"/>
<path class="b4" d="M454 390L453.6 390L437.3 403.2L437.7 406.7L455.7 406.6Z"/>
<path class="b4" d="M401 439.5L383.6 439.3L383.9 455.6L401 455.8Z"/>
<path class="b4" d="M492.9 419.7L491 406.3L473.5 406.5L475.6 423.2L485 423.1Z"/>
<path class="b4" d="M494.3 488.6L476.9 488.8L476.5 505L493.6 504.8Z"/>
<path class="b4" d="M400.4 423L386.7 422.9L383.6 439.3L401 439.5Z"/>
<path class="b4" d="M476.5 505L472.4 505.1L476.3 519.3Z"/>
<path class="b4" d="M511.3 439.3L494.1 439.5L494.6 455.9L512 455.7Z"/>
<path class="b4" d="M512 455.7L494.6 455.9L494.7 472.3L512.3 472.1Z"/>
<path class="b4" d="M492.9 419.7L485 423.1L493.2 423Z"/>
<path class="b4" d="M420.6 486.9L420.3 488.6L421.8 488.6Z"/>
<path class="b4" d="M418.6 406.6L399.3 406.5L400.4 423L420.2 423.2Z"/>
<path class="b4" d="M465.1 488.9L458.4 488.8L456.2 504.7L472.4 505.1Z"/>
<path class="b4" d="M473.5 406.5L455.7 406.6L457.2 423.2L475.6 423.2Z"/>
<path class="b4" d="M417.1 456L401 455.8L400.5 472.1L418.4 472.4Z"/>
<path class="b4" d="M437.3 403.2L433.7 406.7L437.7 406.7Z"/>
<path class="b4" d="M439.6 472.4L421 472.4L420.6 486.9L421.8 488.6L438.8 488.6Z"/>
<path class="b4" d="M494.7 472.3L477.2 472.5L476.9 488.8L494.3 488.6Z"/>
<path class="b4" d="M476.9 488.8L465.1 488.9L472.4 505.1L476.5 505Z"/>
<path class="b4" d="M421 472.4L418.4 472.4L420.6 486.9Z"/>
<path class="b4" d="M455.7 406.6L437.7 406.7L438.8 423.2L457.2 423.2Z"/>
<path class="b4" d="M418.1 439.7L401 439.5L401 455.8L417.1 456Z"/>
<path class="b4" d="M493.2 423L485 423.1L476.3 430.8L476.7 439.7L494.1 439.5Z"/>
<path class="b4" d="M433.7 406.7L418.6 406.6L420.2 423.2L422.9 423.3Z"/>
<path class="b4" d="M485 423.1L475.6 423.2L476.3 430.8Z"/>
<path class="b4" d="M437.7 406.7L433.7 406.7L422.9 423.3L438.8 423.2Z"/>
<path class="b4" d="M420.6 429.7L420.2 423.2L400.4 423L401 439.5L418.1 439.7Z"/>
<path class="b4" d="M459.5 472.6L439.6 472.4L438.8 488.6L458.4 488.8Z"/>
<path class="b4" d="M494.6 455.9L477.1 456.1L477.2 472.5L494.7 472.3Z"/>
<path class="b4" d="M494.1 439.5L476.7 439.7L477.1 456.1L494.6 455.9Z"/>
<path class="b4" d="M421.1 456.1L417.1 456L418.4 472.4L421 472.4Z"/>
<path class="b4" d="M439.9 456.1L421.1 456.1L421 472.4L439.6 472.4Z"/>
<path class="b4" d="M422.9 423.3L420.2 423.2L420.6 429.7Z"/>
<path class="b4" d="M477.2 472.5L460.4 472.6L465.1 488.9L476.9 488.8Z"/>
<path class="b4" d="M476.3 430.8L475.6 423.2L457.2 423.2L458.4 439.8L468.9 439.8Z"/>
<path class="b4" d="M457.2 423.2L438.8 423.2L439.6 439.7L458.4 439.8Z"/>
<path class="b4" d="M438.8 423.2L422.9 423.3L420.6 429.7L421 439.7L439.6 439.7Z"/>
<path class="b4" d="M421 439.7L418.1 439.7L417.1 456L421.1 456.1Z"/>
<path class="b4" d="M420.6 429.7L418.1 439.7L421 439.7Z"/>
<path class="b4" d="M439.6 439.7L421 439.7L421.1 456.1L439.9 456.1Z"/>
<path class="b4" d="M476.3 430.8L468.9 439.8L476.7 439.7Z"/>
<path class="b4" d="M460.4 472.6L459.5 472.6L458.4 488.8L465.1 488.9Z"/>
<path class="b4" d="M459.3 456.2L439.9 456.1L439.6 472.4L459.5 472.6Z"/>
<path class="b4" d="M458.4 439.8L439.6 439.7L439.9 456.1L459.3 456.2Z"/>
<path class="b4" d="M477.1 456.1L461.7 456.3L460.4 472.6L477.2 472.5Z"/>
<path class="b4" d="M476.7 439.7L468.9 439.8L461.7 456.3L477.1 456.1Z"/>
<path class="b4" d="M468.9 439.8L458.4 439.8L459.3 456.2L461.7 456.3Z"/>
<path class="b4" d="M461.7 456.3L459.3 456.2L459.5 472.6L460.4 472.6Z"/>
</g>
<g id="front"><polyline fill="none" stroke="#262626" stroke-width="1" points="127.5,203 127.5,758.5 320.7,790.4 888.2,779.3"/><line x1="363.3" y1="789.6" x2="363.6" y2="804.6" stroke="#262626" stroke-width="1"/><line x1="483.9" y1="787.2" x2="484.2" y2="802.2" stroke="#262626" stroke-width="1"/><line x1="604.5" y1="784.9" x2="604.8" y2="799.9" stroke="#262626" stroke-width="1"/><line x1="725" y1="782.5" x2="725.3" y2="797.5" stroke="#262626" stroke-width="1"/><line x1="845.6" y1="780.1" x2="845.9" y2="795.1" stroke="#262626" stroke-width="1"/><line x1="278.8" y1="783.5" x2="278.8" y2="798.5" stroke="#262626" stroke-width="1"/><line x1="224.1" y1="774.4" x2="224.1" y2="789.4" stroke="#262626" stroke-width="1"/><line x1="169.4" y1="765.4" x2="169.4" y2="780.4" stroke="#262626" stroke-width="1"/><line x1="127.5" y1="721.5" x2="113.2" y2="718.9" stroke="#262626" stroke-width="1"/><line x1="127.5" y1="616.5" x2="113.2" y2="613.9" stroke="#262626" stroke-width="1"/><line x1="127.5" y1="511.6" x2="113.2" y2="509" stroke="#262626" stroke-width="1"/><line x1="127.5" y1="406.7" x2="113.2" y2="404.1" stroke="#262626" stroke-width="1"/><line x1="127.5" y1="301.8" x2="113.2" y2="299.2" stroke="#262626" stroke-width="1"/></g>
<g id="lbl"><text x="363.6" y="838" text-anchor="start">-1</text><text x="484.2" y="835.6" text-anchor="start">-0.5</text><text x="604.8" y="833.2" text-anchor="start">0</text><text x="725.3" y="830.9" text-anchor="start">0.5</text><text x="845.9" y="828.5" text-anchor="start">1</text><text x="278.7" y="831.1" text-anchor="end">-0.5</text><text x="224" y="822" text-anchor="end">0</text><text x="169.3" y="813" text-anchor="end">0.5</text><text x="105.7" y="726.7" text-anchor="end">-1</text><text x="104.3" y="621.7" text-anchor="end">-0.5</text><text x="104.3" y="516.8" text-anchor="end">0</text><text x="104.3" y="411.9" text-anchor="end">0.5</text><text x="105.7" y="307" text-anchor="end">1</text></g>
</svg>
<div class="bw" style="left:980px;top:1px;width:1px;height:871px"></div>
<div class="bw" style="left:1px;top:91px;width:1px;height:781px"></div>
<div class="bw" style="left:1px;top:91px;width:979px;height:1px"></div>
<div class="bw" style="left:1px;top:136px;width:979px;height:1px"></div>
<div class="bw" style="left:1px;top:871px;width:980px;height:1px"></div>
<div class="bd" style="left:0;top:0;width:982px;height:1px"></div>
<div class="bd" style="left:0;top:0;width:1px;height:873px"></div>
<div class="bd" style="left:981px;top:0;width:1px;height:873px"></div>
<div class="bd" style="left:0;top:872px;width:982px;height:1px"></div>
</div>
</body>
</html>
